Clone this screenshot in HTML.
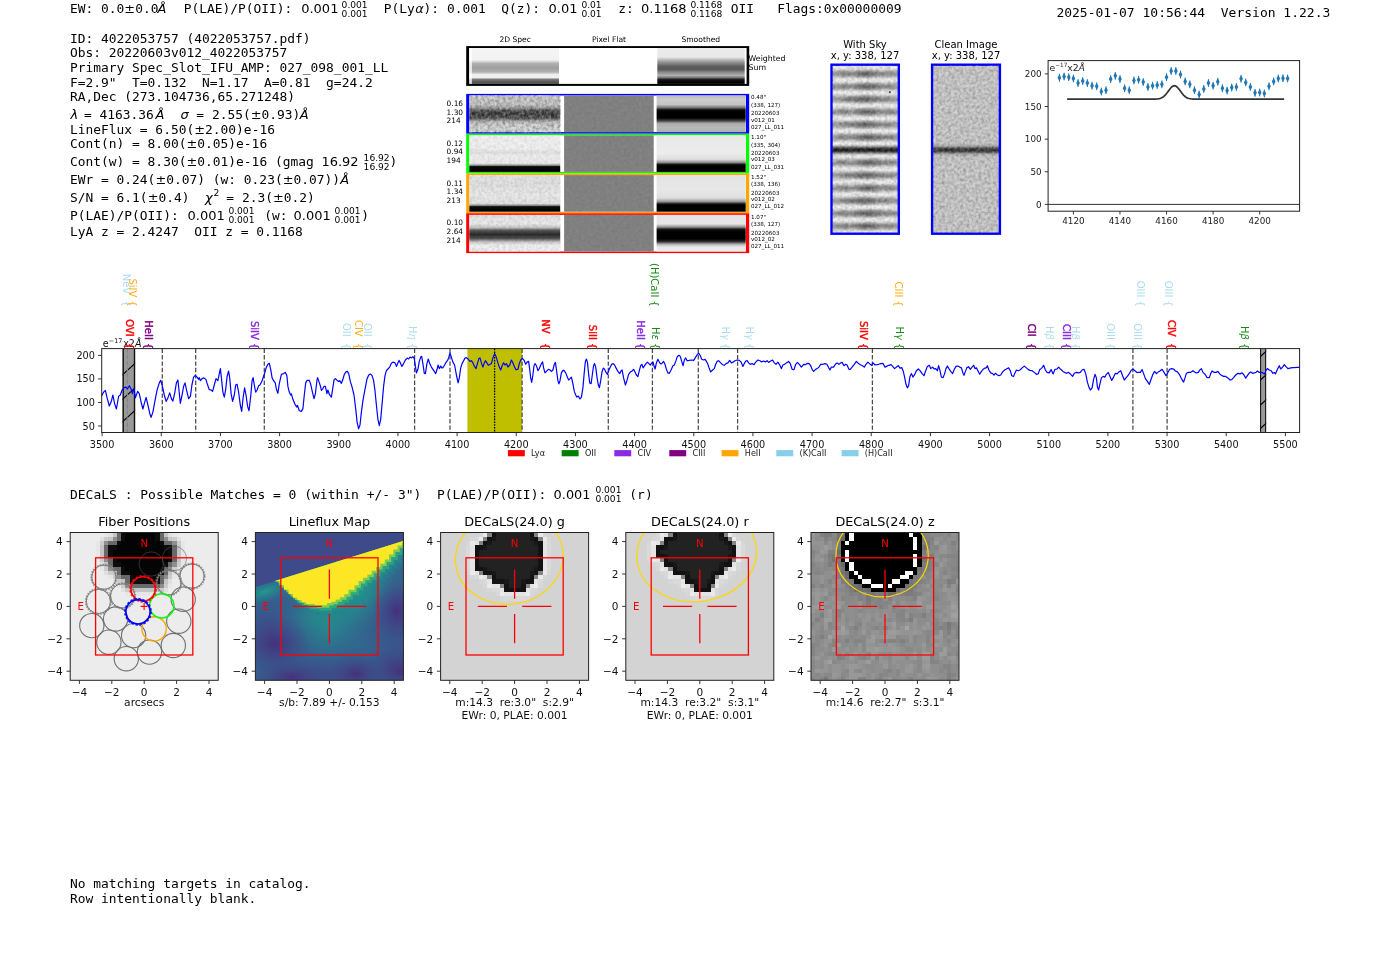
<!DOCTYPE html>
<html lang="en"><head><meta charset="utf-8"><title>ELiXer detection report 4022053757</title>
<style>
html,body{margin:0;padding:0;background:#fff;}
body{width:1400px;height:953px;overflow:hidden;}
svg{display:block;will-change:transform;}
text{white-space:pre;}
.m{font-family:"DejaVu Sans Mono","Liberation Mono",monospace;}
.s{font-family:"DejaVu Sans","Liberation Sans",sans-serif;}
</style></head><body>
<svg width="1400" height="953" viewBox="0 0 1400 953">
<rect x="0" y="0" width="1400" height="953" fill="#fff"/>
<defs><filter id="nzA" x="0" y="0" width="100%" height="100%"><feTurbulence type="fractalNoise" baseFrequency="0.33" numOctaves="2" seed="4" result="t"/><feColorMatrix in="t" type="matrix" values="0 0 0 0 0  0 0 0 0 0  0 0 0 0 0  1.6 0 0 0 -0.55"/></filter>
<filter id="nzW" x="0" y="0" width="100%" height="100%"><feTurbulence type="fractalNoise" baseFrequency="0.33" numOctaves="2" seed="9" result="t"/><feColorMatrix in="t" type="matrix" values="0 0 0 0 1  0 0 0 0 1  0 0 0 0 1  1.6 0 0 0 -0.55"/></filter>
<linearGradient id="g1" x1="0" y1="0" x2="0" y2="1"><stop offset="0.000" stop-color="#f4f4f4"/><stop offset="0.334" stop-color="#f2f2f2"/><stop offset="0.432" stop-color="#b0b0b0"/><stop offset="0.557" stop-color="#9e9e9e"/><stop offset="0.669" stop-color="#b0b0b0"/><stop offset="0.738" stop-color="#eeeeee"/><stop offset="0.822" stop-color="#f0f0f0"/><stop offset="0.877" stop-color="#787878"/><stop offset="0.947" stop-color="#585858"/><stop offset="1.000" stop-color="#464646"/></linearGradient>
<linearGradient id="g2" x1="0" y1="0" x2="0" y2="1"><stop offset="0.000" stop-color="#ececec"/><stop offset="0.251" stop-color="#e8e8e8"/><stop offset="0.390" stop-color="#969696"/><stop offset="0.515" stop-color="#5c5c5c"/><stop offset="0.599" stop-color="#585858"/><stop offset="0.682" stop-color="#8c8c8c"/><stop offset="0.766" stop-color="#b0b0b0"/><stop offset="0.822" stop-color="#787878"/><stop offset="0.877" stop-color="#1e1e1e"/><stop offset="0.919" stop-color="#080808"/><stop offset="1.000" stop-color="#000000"/></linearGradient>
<linearGradient id="g3" x1="0" y1="0" x2="0" y2="1"><stop offset="0.000" stop-color="#c8c8c8"/><stop offset="0.246" stop-color="#c4c4c4"/><stop offset="0.342" stop-color="#969696"/><stop offset="0.410" stop-color="#464646"/><stop offset="0.519" stop-color="#343434"/><stop offset="0.615" stop-color="#464646"/><stop offset="0.697" stop-color="#a5a5a5"/><stop offset="0.792" stop-color="#cdcdcd"/><stop offset="1.000" stop-color="#d6d6d6"/></linearGradient>
<linearGradient id="g4" x1="0" y1="0" x2="0" y2="1"><stop offset="0.000" stop-color="#bababa"/><stop offset="0.109" stop-color="#cccccc"/><stop offset="0.246" stop-color="#c4c4c4"/><stop offset="0.328" stop-color="#787878"/><stop offset="0.396" stop-color="#0a0a0a"/><stop offset="0.464" stop-color="#000000"/><stop offset="0.615" stop-color="#000000"/><stop offset="0.683" stop-color="#3c3c3c"/><stop offset="0.765" stop-color="#aaaaaa"/><stop offset="0.874" stop-color="#b8b8b8"/><stop offset="1.000" stop-color="#b0b0b0"/></linearGradient>
<linearGradient id="g5" x1="0" y1="0" x2="0" y2="1"><stop offset="0.000" stop-color="#f0f0f0"/><stop offset="0.355" stop-color="#f0f0f0"/><stop offset="0.464" stop-color="#e2e2e2"/><stop offset="0.574" stop-color="#eeeeee"/><stop offset="0.765" stop-color="#ececec"/><stop offset="0.820" stop-color="#969696"/><stop offset="0.855" stop-color="#0a0a0a"/><stop offset="1.000" stop-color="#000000"/></linearGradient>
<linearGradient id="g6" x1="0" y1="0" x2="0" y2="1"><stop offset="0.000" stop-color="#e8e8e8"/><stop offset="0.492" stop-color="#ececec"/><stop offset="0.656" stop-color="#dedede"/><stop offset="0.738" stop-color="#969696"/><stop offset="0.801" stop-color="#0c0c0c"/><stop offset="0.847" stop-color="#000000"/><stop offset="1.000" stop-color="#000000"/></linearGradient>
<linearGradient id="g7" x1="0" y1="0" x2="0" y2="1"><stop offset="0.000" stop-color="#e4e4e4"/><stop offset="0.273" stop-color="#e2e2e2"/><stop offset="0.546" stop-color="#eaeaea"/><stop offset="0.779" stop-color="#e4e4e4"/><stop offset="0.828" stop-color="#8c8c8c"/><stop offset="0.863" stop-color="#0c0c0c"/><stop offset="1.000" stop-color="#000000"/></linearGradient>
<linearGradient id="g8" x1="0" y1="0" x2="0" y2="1"><stop offset="0.000" stop-color="#e2e2e2"/><stop offset="0.383" stop-color="#e8e8e8"/><stop offset="0.628" stop-color="#dedede"/><stop offset="0.724" stop-color="#969696"/><stop offset="0.792" stop-color="#0c0c0c"/><stop offset="0.833" stop-color="#000000"/><stop offset="1.000" stop-color="#000000"/></linearGradient>
<linearGradient id="g9" x1="0" y1="0" x2="0" y2="1"><stop offset="0.000" stop-color="#e4e4e4"/><stop offset="0.246" stop-color="#ececec"/><stop offset="0.342" stop-color="#c8c8c8"/><stop offset="0.423" stop-color="#5a5a5a"/><stop offset="0.533" stop-color="#2c2c2c"/><stop offset="0.642" stop-color="#505050"/><stop offset="0.738" stop-color="#c8c8c8"/><stop offset="0.820" stop-color="#f0f0f0"/><stop offset="1.000" stop-color="#f0f0f0"/></linearGradient>
<linearGradient id="g10" x1="0" y1="0" x2="0" y2="1"><stop offset="0.000" stop-color="#e4e4e4"/><stop offset="0.246" stop-color="#e6e6e6"/><stop offset="0.328" stop-color="#969696"/><stop offset="0.396" stop-color="#141414"/><stop offset="0.464" stop-color="#000000"/><stop offset="0.656" stop-color="#000000"/><stop offset="0.724" stop-color="#282828"/><stop offset="0.806" stop-color="#b4b4b4"/><stop offset="0.874" stop-color="#e8e8e8"/><stop offset="1.000" stop-color="#ececec"/></linearGradient>
<linearGradient id="g11" x1="0" y1="0" x2="0" y2="1"><stop offset="0.000" stop-color="#e4e4e4"/><stop offset="0.006" stop-color="#eeeeee"/><stop offset="0.012" stop-color="#efefef"/><stop offset="0.018" stop-color="#e5e5e5"/><stop offset="0.024" stop-color="#d3d3d3"/><stop offset="0.030" stop-color="#bebebe"/><stop offset="0.036" stop-color="#aaaaaa"/><stop offset="0.042" stop-color="#9c9c9c"/><stop offset="0.048" stop-color="#989898"/><stop offset="0.054" stop-color="#9e9e9e"/><stop offset="0.060" stop-color="#aeaeae"/><stop offset="0.066" stop-color="#c2c2c2"/><stop offset="0.072" stop-color="#d7d7d7"/><stop offset="0.078" stop-color="#e8e8e8"/><stop offset="0.084" stop-color="#f0f0f0"/><stop offset="0.090" stop-color="#ededed"/><stop offset="0.096" stop-color="#e1e1e1"/><stop offset="0.102" stop-color="#cdcdcd"/><stop offset="0.108" stop-color="#b8b8b8"/><stop offset="0.114" stop-color="#a5a5a5"/><stop offset="0.120" stop-color="#9a9a9a"/><stop offset="0.126" stop-color="#999999"/><stop offset="0.132" stop-color="#a2a2a2"/><stop offset="0.138" stop-color="#b4b4b4"/><stop offset="0.144" stop-color="#c9c9c9"/><stop offset="0.150" stop-color="#dddddd"/><stop offset="0.156" stop-color="#ebebeb"/><stop offset="0.162" stop-color="#f0f0f0"/><stop offset="0.168" stop-color="#eaeaea"/><stop offset="0.174" stop-color="#dbdbdb"/><stop offset="0.180" stop-color="#c7c7c7"/><stop offset="0.186" stop-color="#b2b2b2"/><stop offset="0.192" stop-color="#a1a1a1"/><stop offset="0.198" stop-color="#989898"/><stop offset="0.204" stop-color="#9b9b9b"/><stop offset="0.210" stop-color="#a7a7a7"/><stop offset="0.216" stop-color="#bababa"/><stop offset="0.222" stop-color="#cfcfcf"/><stop offset="0.228" stop-color="#e2e2e2"/><stop offset="0.234" stop-color="#eeeeee"/><stop offset="0.240" stop-color="#efefef"/><stop offset="0.246" stop-color="#e7e7e7"/><stop offset="0.252" stop-color="#d5d5d5"/><stop offset="0.258" stop-color="#c0c0c0"/><stop offset="0.264" stop-color="#acacac"/><stop offset="0.270" stop-color="#9d9d9d"/><stop offset="0.276" stop-color="#989898"/><stop offset="0.282" stop-color="#9d9d9d"/><stop offset="0.288" stop-color="#acacac"/><stop offset="0.294" stop-color="#c0c0c0"/><stop offset="0.300" stop-color="#d5d5d5"/><stop offset="0.306" stop-color="#e7e7e7"/><stop offset="0.312" stop-color="#efefef"/><stop offset="0.318" stop-color="#eeeeee"/><stop offset="0.324" stop-color="#e2e2e2"/><stop offset="0.330" stop-color="#cfcfcf"/><stop offset="0.336" stop-color="#bababa"/><stop offset="0.342" stop-color="#a7a7a7"/><stop offset="0.348" stop-color="#9b9b9b"/><stop offset="0.354" stop-color="#989898"/><stop offset="0.360" stop-color="#a1a1a1"/><stop offset="0.366" stop-color="#b2b2b2"/><stop offset="0.372" stop-color="#c7c7c7"/><stop offset="0.378" stop-color="#dbdbdb"/><stop offset="0.384" stop-color="#eaeaea"/><stop offset="0.390" stop-color="#f0f0f0"/><stop offset="0.396" stop-color="#ebebeb"/><stop offset="0.402" stop-color="#dddddd"/><stop offset="0.408" stop-color="#c9c9c9"/><stop offset="0.414" stop-color="#b4b4b4"/><stop offset="0.420" stop-color="#a2a2a2"/><stop offset="0.426" stop-color="#999999"/><stop offset="0.432" stop-color="#9a9a9a"/><stop offset="0.438" stop-color="#a5a5a5"/><stop offset="0.444" stop-color="#b8b8b8"/><stop offset="0.450" stop-color="#cdcdcd"/><stop offset="0.456" stop-color="#e1e1e1"/><stop offset="0.462" stop-color="#ededed"/><stop offset="0.468" stop-color="#f0f0f0"/><stop offset="0.474" stop-color="#dcdcdc"/><stop offset="0.480" stop-color="#b9b9b9"/><stop offset="0.486" stop-color="#868686"/><stop offset="0.492" stop-color="#4e4e4e"/><stop offset="0.498" stop-color="#242424"/><stop offset="0.504" stop-color="#121212"/><stop offset="0.510" stop-color="#1e1e1e"/><stop offset="0.516" stop-color="#444444"/><stop offset="0.522" stop-color="#7a7a7a"/><stop offset="0.528" stop-color="#b0b0b0"/><stop offset="0.534" stop-color="#d7d7d7"/><stop offset="0.540" stop-color="#eaeaea"/><stop offset="0.546" stop-color="#eeeeee"/><stop offset="0.552" stop-color="#e4e4e4"/><stop offset="0.558" stop-color="#d1d1d1"/><stop offset="0.564" stop-color="#bcbcbc"/><stop offset="0.570" stop-color="#a8a8a8"/><stop offset="0.576" stop-color="#9b9b9b"/><stop offset="0.582" stop-color="#989898"/><stop offset="0.588" stop-color="#a0a0a0"/><stop offset="0.594" stop-color="#b0b0b0"/><stop offset="0.600" stop-color="#c5c5c5"/><stop offset="0.606" stop-color="#d9d9d9"/><stop offset="0.612" stop-color="#e9e9e9"/><stop offset="0.618" stop-color="#f0f0f0"/><stop offset="0.624" stop-color="#ececec"/><stop offset="0.630" stop-color="#dfdfdf"/><stop offset="0.636" stop-color="#cbcbcb"/><stop offset="0.642" stop-color="#b6b6b6"/><stop offset="0.648" stop-color="#a4a4a4"/><stop offset="0.654" stop-color="#999999"/><stop offset="0.660" stop-color="#999999"/><stop offset="0.666" stop-color="#a4a4a4"/><stop offset="0.672" stop-color="#b6b6b6"/><stop offset="0.678" stop-color="#cbcbcb"/><stop offset="0.684" stop-color="#dfdfdf"/><stop offset="0.690" stop-color="#ececec"/><stop offset="0.696" stop-color="#f0f0f0"/><stop offset="0.702" stop-color="#e9e9e9"/><stop offset="0.708" stop-color="#d9d9d9"/><stop offset="0.714" stop-color="#c5c5c5"/><stop offset="0.720" stop-color="#b0b0b0"/><stop offset="0.726" stop-color="#a0a0a0"/><stop offset="0.732" stop-color="#989898"/><stop offset="0.738" stop-color="#9b9b9b"/><stop offset="0.744" stop-color="#a8a8a8"/><stop offset="0.750" stop-color="#bcbcbc"/><stop offset="0.756" stop-color="#d1d1d1"/><stop offset="0.762" stop-color="#e4e4e4"/><stop offset="0.768" stop-color="#eeeeee"/><stop offset="0.774" stop-color="#efefef"/><stop offset="0.780" stop-color="#e5e5e5"/><stop offset="0.786" stop-color="#d3d3d3"/><stop offset="0.792" stop-color="#bebebe"/><stop offset="0.798" stop-color="#aaaaaa"/><stop offset="0.804" stop-color="#9c9c9c"/><stop offset="0.810" stop-color="#989898"/><stop offset="0.816" stop-color="#9e9e9e"/><stop offset="0.822" stop-color="#aeaeae"/><stop offset="0.828" stop-color="#c2c2c2"/><stop offset="0.834" stop-color="#d7d7d7"/><stop offset="0.840" stop-color="#e8e8e8"/><stop offset="0.846" stop-color="#f0f0f0"/><stop offset="0.852" stop-color="#ededed"/><stop offset="0.858" stop-color="#e1e1e1"/><stop offset="0.864" stop-color="#cdcdcd"/><stop offset="0.870" stop-color="#b8b8b8"/><stop offset="0.876" stop-color="#a5a5a5"/><stop offset="0.882" stop-color="#9a9a9a"/><stop offset="0.888" stop-color="#999999"/><stop offset="0.894" stop-color="#a2a2a2"/><stop offset="0.900" stop-color="#b4b4b4"/><stop offset="0.906" stop-color="#c9c9c9"/><stop offset="0.912" stop-color="#dddddd"/><stop offset="0.918" stop-color="#ebebeb"/><stop offset="0.924" stop-color="#f0f0f0"/><stop offset="0.930" stop-color="#eaeaea"/><stop offset="0.936" stop-color="#dbdbdb"/><stop offset="0.942" stop-color="#c7c7c7"/><stop offset="0.948" stop-color="#b2b2b2"/><stop offset="0.954" stop-color="#a1a1a1"/><stop offset="0.960" stop-color="#989898"/><stop offset="0.966" stop-color="#9b9b9b"/><stop offset="0.972" stop-color="#a7a7a7"/><stop offset="0.978" stop-color="#bababa"/><stop offset="0.984" stop-color="#cfcfcf"/><stop offset="0.990" stop-color="#e2e2e2"/><stop offset="0.996" stop-color="#eeeeee"/></linearGradient>
<radialGradient id="skyb" cx="0.5" cy="0.5" r="0.5"><stop offset="0" stop-color="#000" stop-opacity="0.42"/><stop offset="0.55" stop-color="#000" stop-opacity="0.2"/><stop offset="1" stop-color="#000" stop-opacity="0"/></radialGradient>
<linearGradient id="g12" x1="0" y1="0" x2="0" y2="1"><stop offset="0.000" stop-color="#c8c8c8"/><stop offset="0.463" stop-color="#c8c8c8"/><stop offset="0.481" stop-color="#aaaaaa"/><stop offset="0.495" stop-color="#464646"/><stop offset="0.505" stop-color="#282828"/><stop offset="0.516" stop-color="#464646"/><stop offset="0.529" stop-color="#aaaaaa"/><stop offset="0.547" stop-color="#c8c8c8"/><stop offset="1.000" stop-color="#c8c8c8"/></linearGradient>
<clipPath id="hc1"><rect x="122.6" y="348.6" width="12.5" height="83.90"/></clipPath>
<clipPath id="hc2"><rect x="1260.0" y="348.6" width="6.2" height="83.90"/></clipPath>
<clipPath id="pc0"><rect x="70.2" y="532.5" width="148.0" height="147.80"/></clipPath>
<clipPath id="pc1"><rect x="255.4" y="532.5" width="148.0" height="147.80"/></clipPath>
<clipPath id="pc2"><rect x="440.6" y="532.5" width="148.0" height="147.80"/></clipPath>
<clipPath id="pc3"><rect x="625.8" y="532.5" width="148.0" height="147.80"/></clipPath>
<clipPath id="pc4"><rect x="811.0" y="532.5" width="148.0" height="147.80"/></clipPath>
<radialGradient id="lfT" cx="0.5" cy="0.5" r="0.5"><stop offset="0" stop-color="#1f9e89" stop-opacity="0.95"/><stop offset="0.45" stop-color="#26828e" stop-opacity="0.7"/><stop offset="1" stop-color="#31688e" stop-opacity="0"/></radialGradient>
<radialGradient id="lfT2" cx="0.5" cy="0.5" r="0.5"><stop offset="0" stop-color="#21918c" stop-opacity="0.6"/><stop offset="1" stop-color="#2a788e" stop-opacity="0"/></radialGradient>
<radialGradient id="lfP" cx="0.5" cy="0.5" r="0.5"><stop offset="0" stop-color="#472a7a" stop-opacity="0.85"/><stop offset="0.5" stop-color="#433e85" stop-opacity="0.5"/><stop offset="1" stop-color="#3e4989" stop-opacity="0"/></radialGradient>
<radialGradient id="lfB" cx="0.5" cy="0.5" r="0.5"><stop offset="0" stop-color="#3e4989" stop-opacity="0.9"/><stop offset="1" stop-color="#3e4989" stop-opacity="0"/></radialGradient></defs>
<g id="header">
<text x="70.00" y="13.30" class="m" font-size="12.9">EW: 0.0</text>
<text x="124.36" y="13.30" class="s" font-size="12.9">±</text>
<text x="135.17" y="13.30" class="m" font-size="12.9">0.0</text>
<text x="157.60" y="13.30" class="s" font-size="13" font-style="italic">Å</text>
<text x="183.70" y="13.30" class="m" font-size="12.9">P(LAE)/P(OII): </text>
<text x="301.20" y="13.30" class="s" font-size="13">0.001</text>
<text x="341.60" y="8.30" class="s" font-size="9.1">0.001</text>
<text x="341.60" y="17.30" class="s" font-size="9.1">0.001</text>
<text x="383.70" y="13.30" class="m" font-size="12.9">P(Ly</text>
<text x="415.20" y="13.30" class="s" font-size="13" font-style="italic">α</text>
<text x="423.60" y="13.30" class="m" font-size="12.9">): 0.001  Q(z): </text>
<text x="548.60" y="13.30" class="s" font-size="13">0.01</text>
<text x="581.40" y="8.30" class="s" font-size="9.1">0.01</text>
<text x="581.40" y="17.30" class="s" font-size="9.1">0.01</text>
<text x="618.20" y="13.30" class="m" font-size="12.9">z: </text>
<text x="641.00" y="13.30" class="s" font-size="13">0.1168</text>
<text x="690.40" y="8.30" class="s" font-size="9.1">0.1168</text>
<text x="690.40" y="17.30" class="s" font-size="9.1">0.1168</text>
<text x="730.70" y="13.30" class="m" font-size="12.9">OII   Flags:0x00000009</text>
<text x="1056.40" y="16.60" class="m" font-size="13.0">2025-01-07 10:56:44  Version 1.22.3</text>
</g>
<g id="info">
<text x="70.00" y="42.50" class="m" font-size="12.9">ID: 4022053757 (4022053757.pdf)</text>
<text x="70.00" y="57.10" class="m" font-size="12.9">Obs: 20220603v012_4022053757</text>
<text x="70.00" y="71.80" class="m" font-size="12.9">Primary Spec_Slot_IFU_AMP: 027_098_001_LL</text>
<text x="70.00" y="86.60" class="m" font-size="12.9">F=2.9"  T=0.132  N=1.17  A=0.81  g=24.2</text>
<text x="70.00" y="101.30" class="m" font-size="12.9">RA,Dec (273.104736,65.271248)</text>
<text x="70.40" y="118.70" class="s" font-size="13" font-style="italic">λ</text>
<text x="76.20" y="118.70" class="m" font-size="12.9"> = 4163.36</text>
<text x="155.60" y="118.70" class="s" font-size="13" font-style="italic">Å</text>
<text x="180.60" y="118.70" class="s" font-size="13" font-style="italic">σ</text>
<text x="188.60" y="118.70" class="m" font-size="12.9"> = 2.55(</text>
<text x="250.73" y="118.70" class="s" font-size="12.9">±</text>
<text x="261.54" y="118.70" class="m" font-size="12.9">0.93)</text>
<text x="299.80" y="118.70" class="s" font-size="13" font-style="italic">Å</text>
<text x="70.00" y="133.70" class="m" font-size="12.9">LineFlux = 6.50(</text>
<text x="194.26" y="133.70" class="s" font-size="12.9">±</text>
<text x="205.07" y="133.70" class="m" font-size="12.9">2.00)e-16</text>
<text x="70.00" y="148.30" class="m" font-size="12.9">Cont(n) = 8.00(</text>
<text x="186.49" y="148.30" class="s" font-size="12.9">±</text>
<text x="197.30" y="148.30" class="m" font-size="12.9">0.05)e-16</text>
<text x="70.00" y="166.20" class="m" font-size="12.9">Cont(w) = 8.30(</text>
<text x="186.49" y="166.20" class="s" font-size="12.9">±</text>
<text x="197.30" y="166.20" class="m" font-size="12.9">0.01)e-16 (gmag </text>
<text x="321.40" y="166.20" class="s" font-size="13">16.92</text>
<text x="363.60" y="160.60" class="s" font-size="9.1">16.92</text>
<text x="363.60" y="169.60" class="s" font-size="9.1">16.92</text>
<text x="389.60" y="166.20" class="m" font-size="12.9">)</text>
<text x="70.00" y="184.20" class="m" font-size="12.9">EWr = 0.24(</text>
<text x="155.43" y="184.20" class="s" font-size="12.9">±</text>
<text x="166.24" y="184.20" class="m" font-size="12.9">0.07) (w: 0.23(</text>
<text x="282.73" y="184.20" class="s" font-size="12.9">±</text>
<text x="293.54" y="184.20" class="m" font-size="12.9">0.07))</text>
<text x="340.20" y="184.20" class="s" font-size="13" font-style="italic">Å</text>
<text x="70.00" y="202.00" class="m" font-size="12.9">S/N = 6.1(</text>
<text x="147.66" y="202.00" class="s" font-size="12.9">±</text>
<text x="158.47" y="202.00" class="m" font-size="12.9">0.4)  </text>
<text x="205.00" y="202.00" class="s" font-size="13" font-style="italic">χ</text>
<text x="213.60" y="196.20" class="s" font-size="9.1">2</text>
<text x="218.60" y="202.00" class="m" font-size="12.9"> = 2.3(</text>
<text x="272.96" y="202.00" class="s" font-size="12.9">±</text>
<text x="283.77" y="202.00" class="m" font-size="12.9">0.2)</text>
<text x="70.00" y="219.90" class="m" font-size="12.9">P(LAE)/P(OII): </text>
<text x="187.60" y="219.90" class="s" font-size="13">0.001</text>
<text x="228.40" y="214.00" class="s" font-size="9.1">0.001</text>
<text x="228.40" y="223.00" class="s" font-size="9.1">0.001</text>
<text x="256.40" y="219.90" class="m" font-size="12.9"> (w: </text>
<text x="293.60" y="219.90" class="s" font-size="13">0.001</text>
<text x="334.60" y="214.00" class="s" font-size="9.1">0.001</text>
<text x="334.60" y="223.00" class="s" font-size="9.1">0.001</text>
<text x="361.20" y="219.90" class="m" font-size="12.9">)</text>
<text x="70.00" y="235.80" class="m" font-size="12.9">LyA z = 2.4247  OII z = 0.1168</text>
</g>
<g id="dheading">
<text x="70.00" y="499.00" class="m" font-size="12.97">DECaLS : Possible Matches = 0 (within +/- 3")  P(LAE)/P(OII): </text>
</g>
<text x="70.00" y="888.00" class="m" font-size="12.9">No matching targets in catalog.</text>
<text x="70.00" y="903.00" class="m" font-size="12.9">Row intentionally blank.</text>
<g id="cutouts">
<text x="515.20" y="41.90" class="s" font-size="7.6" text-anchor="middle">2D Spec</text>
<text x="609.00" y="41.90" class="s" font-size="7.6" text-anchor="middle">Pixel Flat</text>
<text x="700.80" y="41.90" class="s" font-size="7.6" text-anchor="middle">Smoothed</text>
<rect x="466.2" y="46.1" width="283.00" height="39.8" fill="#000"/>
<rect x="469.3" y="48.0" width="277.30" height="35.9" fill="#fff"/>
<rect x="469.30" y="48.00" width="89.70" height="35.90" fill="url(#g1)"/>
<rect x="469.3" y="48.0" width="2.6" height="35.9" fill="#fff" opacity="0.8"/>
<rect x="657.30" y="48.00" width="87.40" height="35.90" fill="url(#g2)"/>
<text x="748.60" y="60.90" class="s" font-size="7.8">Weighted</text>
<text x="748.60" y="69.70" class="s" font-size="7.8">Sum</text>
<rect x="466.2" y="93.90" width="283.00" height="39.8" fill="#0000ff"/>
<rect x="469.3" y="95.50" width="276.60" height="36.60" fill="#fff"/>
<rect x="564.1" y="95.50" width="89.60" height="36.60" fill="#808080"/>
<rect x="564.10" y="95.50" width="89.60" height="36.60" fill="#000" filter="url(#nzA)" opacity="0.06"/>
<rect x="564.10" y="95.50" width="89.60" height="36.60" fill="#000" filter="url(#nzW)" opacity="0.06"/>
<rect x="469.30" y="95.50" width="90.90" height="36.60" fill="url(#g3)"/>
<rect x="469.30" y="95.50" width="90.90" height="36.60" fill="#000" filter="url(#nzA)" opacity="0.4"/>
<rect x="469.30" y="95.50" width="90.90" height="36.60" fill="#000" filter="url(#nzW)" opacity="0.45"/>
<rect x="656.60" y="95.50" width="89.10" height="36.60" fill="url(#g4)"/>
<text x="446.60" y="105.90" class="s" font-size="7.4">0.16</text>
<text x="446.60" y="114.65" class="s" font-size="7.4">1.30</text>
<text x="446.60" y="123.40" class="s" font-size="7.4">214</text>
<text x="751.00" y="99.40" class="s" font-size="5.6">0.48"</text>
<text x="751.00" y="106.80" class="s" font-size="5.6">(338, 127)</text>
<text x="751.00" y="115.10" class="s" font-size="5.6">20220603</text>
<text x="751.00" y="121.50" class="s" font-size="5.6">v012_01</text>
<text x="751.00" y="128.70" class="s" font-size="5.6">027_LL_011</text>
<rect x="466.2" y="133.70" width="283.00" height="39.8" fill="#00ff00"/>
<rect x="469.3" y="135.30" width="276.60" height="36.60" fill="#fff"/>
<rect x="564.1" y="135.30" width="89.60" height="36.60" fill="#808080"/>
<rect x="564.10" y="135.30" width="89.60" height="36.60" fill="#000" filter="url(#nzA)" opacity="0.06"/>
<rect x="564.10" y="135.30" width="89.60" height="36.60" fill="#000" filter="url(#nzW)" opacity="0.06"/>
<rect x="469.30" y="135.30" width="90.90" height="36.60" fill="url(#g5)"/>
<rect x="469.30" y="135.30" width="90.90" height="29.00" fill="#000" filter="url(#nzA)" opacity="0.1"/>
<rect x="656.60" y="135.30" width="89.10" height="36.60" fill="url(#g6)"/>
<text x="446.60" y="145.70" class="s" font-size="7.4">0.12</text>
<text x="446.60" y="154.45" class="s" font-size="7.4">0.94</text>
<text x="446.60" y="163.20" class="s" font-size="7.4">194</text>
<text x="751.00" y="139.20" class="s" font-size="5.6">1.10"</text>
<text x="751.00" y="146.60" class="s" font-size="5.6">(335, 304)</text>
<text x="751.00" y="154.90" class="s" font-size="5.6">20220603</text>
<text x="751.00" y="161.30" class="s" font-size="5.6">v012_03</text>
<text x="751.00" y="168.50" class="s" font-size="5.6">027_LL_031</text>
<rect x="466.2" y="173.50" width="283.00" height="39.8" fill="#ffa500"/>
<rect x="469.3" y="175.10" width="276.60" height="36.60" fill="#fff"/>
<rect x="564.1" y="175.10" width="89.60" height="36.60" fill="#808080"/>
<rect x="564.10" y="175.10" width="89.60" height="36.60" fill="#000" filter="url(#nzA)" opacity="0.06"/>
<rect x="564.10" y="175.10" width="89.60" height="36.60" fill="#000" filter="url(#nzW)" opacity="0.06"/>
<rect x="469.30" y="175.10" width="90.90" height="36.60" fill="url(#g7)"/>
<rect x="469.30" y="175.10" width="90.90" height="29.00" fill="#000" filter="url(#nzA)" opacity="0.14"/>
<rect x="656.60" y="175.10" width="89.10" height="36.60" fill="url(#g8)"/>
<text x="446.60" y="185.50" class="s" font-size="7.4">0.11</text>
<text x="446.60" y="194.25" class="s" font-size="7.4">1.34</text>
<text x="446.60" y="203.00" class="s" font-size="7.4">213</text>
<text x="751.00" y="179.00" class="s" font-size="5.6">1.52"</text>
<text x="751.00" y="186.40" class="s" font-size="5.6">(338, 136)</text>
<text x="751.00" y="194.70" class="s" font-size="5.6">20220603</text>
<text x="751.00" y="201.10" class="s" font-size="5.6">v012_02</text>
<text x="751.00" y="208.30" class="s" font-size="5.6">027_LL_012</text>
<rect x="466.2" y="213.30" width="283.00" height="39.8" fill="#ff0000"/>
<rect x="469.3" y="214.90" width="276.60" height="36.60" fill="#fff"/>
<rect x="564.1" y="214.90" width="89.60" height="36.60" fill="#808080"/>
<rect x="564.10" y="214.90" width="89.60" height="36.60" fill="#000" filter="url(#nzA)" opacity="0.06"/>
<rect x="564.10" y="214.90" width="89.60" height="36.60" fill="#000" filter="url(#nzW)" opacity="0.06"/>
<rect x="469.30" y="214.90" width="90.90" height="36.60" fill="url(#g9)"/>
<rect x="469.30" y="214.90" width="90.90" height="36.60" fill="#000" filter="url(#nzA)" opacity="0.14"/>
<rect x="656.60" y="214.90" width="89.10" height="36.60" fill="url(#g10)"/>
<text x="446.60" y="225.30" class="s" font-size="7.4">0.10</text>
<text x="446.60" y="234.05" class="s" font-size="7.4">2.64</text>
<text x="446.60" y="242.80" class="s" font-size="7.4">214</text>
<text x="751.00" y="218.80" class="s" font-size="5.6">1.07"</text>
<text x="751.00" y="226.20" class="s" font-size="5.6">(338, 127)</text>
<text x="751.00" y="234.50" class="s" font-size="5.6">20220603</text>
<text x="751.00" y="240.90" class="s" font-size="5.6">v012_02</text>
<text x="751.00" y="248.10" class="s" font-size="5.6">027_LL_011</text>
</g>
<g id="sky">
<text x="865.00" y="47.90" class="s" font-size="10.0" text-anchor="middle">With Sky</text>
<text x="865.00" y="58.80" class="s" font-size="10.0" text-anchor="middle">x, y: 338, 127</text>
<text x="966.00" y="47.90" class="s" font-size="10.0" text-anchor="middle">Clean Image</text>
<text x="966.00" y="58.80" class="s" font-size="10.0" text-anchor="middle">x, y: 338, 127</text>
<rect x="830.3" y="63.5" width="69.70" height="171.40" fill="#0000ff"/>
<rect x="832.70" y="65.90" width="64.90" height="166.60" fill="url(#g11)"/>
<ellipse cx="866.5" cy="73.8" rx="17" ry="5.2" fill="url(#skyb)"/>
<ellipse cx="845.0" cy="73.8" rx="9" ry="4.2" fill="url(#skyb)" opacity="0.45"/>
<ellipse cx="888.0" cy="73.8" rx="8" ry="4.2" fill="url(#skyb)" opacity="0.35"/>
<ellipse cx="867.5" cy="86.5" rx="19" ry="5.2" fill="url(#skyb)"/>
<ellipse cx="844.0" cy="86.5" rx="9" ry="4.2" fill="url(#skyb)" opacity="0.45"/>
<ellipse cx="889.0" cy="86.5" rx="8" ry="4.2" fill="url(#skyb)" opacity="0.35"/>
<ellipse cx="864.5" cy="99.2" rx="21" ry="5.2" fill="url(#skyb)"/>
<ellipse cx="847.0" cy="99.2" rx="9" ry="4.2" fill="url(#skyb)" opacity="0.45"/>
<ellipse cx="886.0" cy="99.2" rx="8" ry="4.2" fill="url(#skyb)" opacity="0.35"/>
<ellipse cx="867.5" cy="111.9" rx="17" ry="5.2" fill="url(#skyb)"/>
<ellipse cx="844.0" cy="111.9" rx="9" ry="4.2" fill="url(#skyb)" opacity="0.45"/>
<ellipse cx="889.0" cy="111.9" rx="8" ry="4.2" fill="url(#skyb)" opacity="0.35"/>
<ellipse cx="865.5" cy="124.6" rx="19" ry="5.2" fill="url(#skyb)"/>
<ellipse cx="846.0" cy="124.6" rx="9" ry="4.2" fill="url(#skyb)" opacity="0.45"/>
<ellipse cx="887.0" cy="124.6" rx="8" ry="4.2" fill="url(#skyb)" opacity="0.35"/>
<ellipse cx="868.5" cy="137.3" rx="21" ry="5.2" fill="url(#skyb)"/>
<ellipse cx="843.0" cy="137.3" rx="9" ry="4.2" fill="url(#skyb)" opacity="0.45"/>
<ellipse cx="890.0" cy="137.3" rx="8" ry="4.2" fill="url(#skyb)" opacity="0.35"/>
<ellipse cx="868.5" cy="162.7" rx="19" ry="5.2" fill="url(#skyb)"/>
<ellipse cx="843.0" cy="162.7" rx="9" ry="4.2" fill="url(#skyb)" opacity="0.45"/>
<ellipse cx="890.0" cy="162.7" rx="8" ry="4.2" fill="url(#skyb)" opacity="0.35"/>
<ellipse cx="865.5" cy="175.4" rx="21" ry="5.2" fill="url(#skyb)"/>
<ellipse cx="846.0" cy="175.4" rx="9" ry="4.2" fill="url(#skyb)" opacity="0.45"/>
<ellipse cx="887.0" cy="175.4" rx="8" ry="4.2" fill="url(#skyb)" opacity="0.35"/>
<ellipse cx="867.5" cy="188.1" rx="17" ry="5.2" fill="url(#skyb)"/>
<ellipse cx="844.0" cy="188.1" rx="9" ry="4.2" fill="url(#skyb)" opacity="0.45"/>
<ellipse cx="889.0" cy="188.1" rx="8" ry="4.2" fill="url(#skyb)" opacity="0.35"/>
<ellipse cx="864.5" cy="200.8" rx="19" ry="5.2" fill="url(#skyb)"/>
<ellipse cx="847.0" cy="200.8" rx="9" ry="4.2" fill="url(#skyb)" opacity="0.45"/>
<ellipse cx="886.0" cy="200.8" rx="8" ry="4.2" fill="url(#skyb)" opacity="0.35"/>
<ellipse cx="867.5" cy="213.5" rx="21" ry="5.2" fill="url(#skyb)"/>
<ellipse cx="844.0" cy="213.5" rx="9" ry="4.2" fill="url(#skyb)" opacity="0.45"/>
<ellipse cx="889.0" cy="213.5" rx="8" ry="4.2" fill="url(#skyb)" opacity="0.35"/>
<ellipse cx="866.5" cy="226.2" rx="17" ry="5.2" fill="url(#skyb)"/>
<ellipse cx="845.0" cy="226.2" rx="9" ry="4.2" fill="url(#skyb)" opacity="0.45"/>
<ellipse cx="888.0" cy="226.2" rx="8" ry="4.2" fill="url(#skyb)" opacity="0.35"/>
<rect x="832.70" y="65.90" width="64.90" height="166.60" fill="#000" filter="url(#nzA)" opacity="0.22"/>
<rect x="832.70" y="65.90" width="64.90" height="166.60" fill="#000" filter="url(#nzW)" opacity="0.22"/>
<rect x="889.2" y="91.2" width="1.4" height="2.0" fill="#222"/>
<rect x="930.9" y="63.5" width="70.20" height="171.40" fill="#0000ff"/>
<rect x="933.30" y="65.90" width="65.40" height="166.60" fill="url(#g12)"/>
<rect x="933.30" y="65.90" width="65.40" height="166.60" fill="#000" filter="url(#nzA)" opacity="0.3"/>
<rect x="933.30" y="65.90" width="65.40" height="166.60" fill="#000" filter="url(#nzW)" opacity="0.3"/>
</g>
<g id="fitplot">
<rect x="1048.1" y="60.6" width="251.50" height="150.60" fill="#fff"/>
<line x1="1048.1" y1="204.40" x2="1299.6" y2="204.40" stroke="#333" stroke-width="1"/>
<polyline fill="none" stroke="#333" stroke-width="1.7" stroke-linejoin="round" points="1067.11,99.15 1068.04,99.15 1068.98,99.15 1069.91,99.15 1070.84,99.15 1071.77,99.15 1072.70,99.15 1073.63,99.15 1074.56,99.15 1075.50,99.15 1076.43,99.15 1077.36,99.15 1078.29,99.15 1079.22,99.15 1080.15,99.15 1081.08,99.15 1082.02,99.15 1082.95,99.15 1083.88,99.15 1084.81,99.15 1085.74,99.15 1086.67,99.15 1087.60,99.15 1088.54,99.15 1089.47,99.15 1090.40,99.15 1091.33,99.15 1092.26,99.15 1093.19,99.15 1094.12,99.15 1095.06,99.15 1095.99,99.15 1096.92,99.15 1097.85,99.15 1098.78,99.15 1099.71,99.15 1100.64,99.15 1101.57,99.15 1102.51,99.15 1103.44,99.15 1104.37,99.15 1105.30,99.15 1106.23,99.15 1107.16,99.15 1108.09,99.15 1109.03,99.15 1109.96,99.15 1110.89,99.15 1111.82,99.15 1112.75,99.15 1113.68,99.15 1114.61,99.15 1115.55,99.15 1116.48,99.15 1117.41,99.15 1118.34,99.15 1119.27,99.15 1120.20,99.15 1121.13,99.15 1122.07,99.15 1123.00,99.15 1123.93,99.15 1124.86,99.15 1125.79,99.15 1126.72,99.15 1127.65,99.15 1128.59,99.15 1129.52,99.15 1130.45,99.15 1131.38,99.15 1132.31,99.15 1133.24,99.15 1134.17,99.15 1135.11,99.15 1136.04,99.15 1136.97,99.15 1137.90,99.15 1138.83,99.15 1139.76,99.15 1140.69,99.15 1141.63,99.15 1142.56,99.15 1143.49,99.15 1144.42,99.15 1145.35,99.15 1146.28,99.15 1147.21,99.15 1148.14,99.15 1149.08,99.15 1150.01,99.15 1150.94,99.15 1151.87,99.14 1152.80,99.13 1153.73,99.12 1154.66,99.10 1155.60,99.06 1156.53,99.00 1157.46,98.92 1158.39,98.79 1159.32,98.61 1160.25,98.35 1161.18,98.01 1162.12,97.55 1163.05,96.97 1163.98,96.24 1164.91,95.37 1165.84,94.35 1166.77,93.22 1167.70,91.99 1168.64,90.71 1169.57,89.45 1170.50,88.28 1171.43,87.25 1172.36,86.45 1173.29,85.93 1174.22,85.71 1175.16,85.83 1176.09,86.26 1177.02,86.99 1177.95,87.95 1178.88,89.09 1179.81,90.33 1180.74,91.61 1181.68,92.85 1182.61,94.02 1183.54,95.08 1184.47,95.99 1185.40,96.76 1186.33,97.39 1187.26,97.88 1188.20,98.26 1189.13,98.54 1190.06,98.74 1190.99,98.89 1191.92,98.98 1192.85,99.05 1193.78,99.09 1194.71,99.11 1195.65,99.13 1196.58,99.14 1197.51,99.15 1198.44,99.15 1199.37,99.15 1200.30,99.15 1201.23,99.15 1202.17,99.15 1203.10,99.15 1204.03,99.15 1204.96,99.15 1205.89,99.15 1206.82,99.15 1207.75,99.15 1208.69,99.15 1209.62,99.15 1210.55,99.15 1211.48,99.15 1212.41,99.15 1213.34,99.15 1214.27,99.15 1215.21,99.15 1216.14,99.15 1217.07,99.15 1218.00,99.15 1218.93,99.15 1219.86,99.15 1220.79,99.15 1221.73,99.15 1222.66,99.15 1223.59,99.15 1224.52,99.15 1225.45,99.15 1226.38,99.15 1227.31,99.15 1228.25,99.15 1229.18,99.15 1230.11,99.15 1231.04,99.15 1231.97,99.15 1232.90,99.15 1233.83,99.15 1234.77,99.15 1235.70,99.15 1236.63,99.15 1237.56,99.15 1238.49,99.15 1239.42,99.15 1240.35,99.15 1241.28,99.15 1242.22,99.15 1243.15,99.15 1244.08,99.15 1245.01,99.15 1245.94,99.15 1246.87,99.15 1247.80,99.15 1248.74,99.15 1249.67,99.15 1250.60,99.15 1251.53,99.15 1252.46,99.15 1253.39,99.15 1254.32,99.15 1255.26,99.15 1256.19,99.15 1257.12,99.15 1258.05,99.15 1258.98,99.15 1259.91,99.15 1260.84,99.15 1261.78,99.15 1262.71,99.15 1263.64,99.15 1264.57,99.15 1265.50,99.15 1266.43,99.15 1267.36,99.15 1268.30,99.15 1269.23,99.15 1270.16,99.15 1271.09,99.15 1272.02,99.15 1272.95,99.15 1273.88,99.15 1274.82,99.15 1275.75,99.15 1276.68,99.15 1277.61,99.15 1278.54,99.15 1279.47,99.15 1280.40,99.15 1281.34,99.15 1282.27,99.15 1283.20,99.15 1284.13,99.15"/>
<g fill="#1f77b4" stroke="#1f77b4" stroke-width="1">
<path d="M1059.43 73.92V81.72" fill="none"/><path d="M1059.43 74.32L1061.28 77.82L1059.43 81.32L1057.58 77.82Z" stroke="none"/>
<path d="M1064.09 72.61V80.41" fill="none"/><path d="M1064.09 73.01L1065.94 76.51L1064.09 80.01L1062.24 76.51Z" stroke="none"/>
<path d="M1068.74 73.26V81.06" fill="none"/><path d="M1068.74 73.66L1070.59 77.16L1068.74 80.66L1066.89 77.16Z" stroke="none"/>
<path d="M1073.40 74.57V82.37" fill="none"/><path d="M1073.40 74.97L1075.25 78.47L1073.40 81.97L1071.55 78.47Z" stroke="none"/>
<path d="M1078.06 79.14V86.94" fill="none"/><path d="M1078.06 79.54L1079.91 83.04L1078.06 86.54L1076.21 83.04Z" stroke="none"/>
<path d="M1082.71 77.18V84.98" fill="none"/><path d="M1082.71 77.58L1084.56 81.08L1082.71 84.58L1080.86 81.08Z" stroke="none"/>
<path d="M1087.37 79.14V86.94" fill="none"/><path d="M1087.37 79.54L1089.22 83.04L1087.37 86.54L1085.52 83.04Z" stroke="none"/>
<path d="M1092.03 81.75V89.55" fill="none"/><path d="M1092.03 82.15L1093.88 85.65L1092.03 89.15L1090.18 85.65Z" stroke="none"/>
<path d="M1096.69 82.40V90.20" fill="none"/><path d="M1096.69 82.80L1098.54 86.30L1096.69 89.80L1094.84 86.30Z" stroke="none"/>
<path d="M1101.34 87.62V95.42" fill="none"/><path d="M1101.34 88.02L1103.19 91.52L1101.34 95.02L1099.49 91.52Z" stroke="none"/>
<path d="M1106.00 86.31V94.11" fill="none"/><path d="M1106.00 86.71L1107.85 90.21L1106.00 93.71L1104.15 90.21Z" stroke="none"/>
<path d="M1110.66 75.22V83.02" fill="none"/><path d="M1110.66 75.62L1112.51 79.12L1110.66 82.62L1108.81 79.12Z" stroke="none"/>
<path d="M1115.31 71.96V79.76" fill="none"/><path d="M1115.31 72.36L1117.16 75.86L1115.31 79.36L1113.46 75.86Z" stroke="none"/>
<path d="M1119.97 75.22V83.02" fill="none"/><path d="M1119.97 75.62L1121.82 79.12L1119.97 82.62L1118.12 79.12Z" stroke="none"/>
<path d="M1124.63 84.36V92.16" fill="none"/><path d="M1124.63 84.76L1126.48 88.26L1124.63 91.76L1122.78 88.26Z" stroke="none"/>
<path d="M1129.28 86.31V94.11" fill="none"/><path d="M1129.28 86.71L1131.13 90.21L1129.28 93.71L1127.43 90.21Z" stroke="none"/>
<path d="M1133.94 76.53V84.33" fill="none"/><path d="M1133.94 76.93L1135.79 80.43L1133.94 83.93L1132.09 80.43Z" stroke="none"/>
<path d="M1138.60 75.87V83.67" fill="none"/><path d="M1138.60 76.27L1140.45 79.77L1138.60 83.27L1136.75 79.77Z" stroke="none"/>
<path d="M1143.26 78.16V85.96" fill="none"/><path d="M1143.26 78.56L1145.11 82.06L1143.26 85.56L1141.41 82.06Z" stroke="none"/>
<path d="M1147.91 83.05V90.85" fill="none"/><path d="M1147.91 83.45L1149.76 86.95L1147.91 90.45L1146.06 86.95Z" stroke="none"/>
<path d="M1152.57 81.75V89.55" fill="none"/><path d="M1152.57 82.15L1154.42 85.65L1152.57 89.15L1150.72 85.65Z" stroke="none"/>
<path d="M1157.23 81.09V88.89" fill="none"/><path d="M1157.23 81.49L1159.08 84.99L1157.23 88.49L1155.38 84.99Z" stroke="none"/>
<path d="M1161.88 80.44V88.24" fill="none"/><path d="M1161.88 80.84L1163.73 84.34L1161.88 87.84L1160.03 84.34Z" stroke="none"/>
<path d="M1166.54 73.26V81.06" fill="none"/><path d="M1166.54 73.66L1168.39 77.16L1166.54 80.66L1164.69 77.16Z" stroke="none"/>
<path d="M1171.20 67.06V74.86" fill="none"/><path d="M1171.20 67.46L1173.05 70.96L1171.20 74.46L1169.35 70.96Z" stroke="none"/>
<path d="M1175.85 67.06V74.86" fill="none"/><path d="M1175.85 67.46L1177.70 70.96L1175.85 74.46L1174.00 70.96Z" stroke="none"/>
<path d="M1180.51 70.65V78.45" fill="none"/><path d="M1180.51 71.05L1182.36 74.55L1180.51 78.05L1178.66 74.55Z" stroke="none"/>
<path d="M1185.17 77.50V85.30" fill="none"/><path d="M1185.17 77.90L1187.02 81.40L1185.17 84.90L1183.32 81.40Z" stroke="none"/>
<path d="M1189.83 80.44V88.24" fill="none"/><path d="M1189.83 80.84L1191.67 84.34L1189.83 87.84L1187.98 84.34Z" stroke="none"/>
<path d="M1194.48 86.31V94.11" fill="none"/><path d="M1194.48 86.71L1196.33 90.21L1194.48 93.71L1192.63 90.21Z" stroke="none"/>
<path d="M1199.14 90.55V98.35" fill="none"/><path d="M1199.14 90.95L1200.99 94.45L1199.14 97.95L1197.29 94.45Z" stroke="none"/>
<path d="M1203.80 85.01V92.81" fill="none"/><path d="M1203.80 85.41L1205.65 88.91L1203.80 92.41L1201.95 88.91Z" stroke="none"/>
<path d="M1208.45 79.14V86.94" fill="none"/><path d="M1208.45 79.54L1210.30 83.04L1208.45 86.54L1206.60 83.04Z" stroke="none"/>
<path d="M1213.11 81.75V89.55" fill="none"/><path d="M1213.11 82.15L1214.96 85.65L1213.11 89.15L1211.26 85.65Z" stroke="none"/>
<path d="M1217.77 77.83V85.63" fill="none"/><path d="M1217.77 78.23L1219.62 81.73L1217.77 85.23L1215.92 81.73Z" stroke="none"/>
<path d="M1222.42 84.36V92.16" fill="none"/><path d="M1222.42 84.76L1224.27 88.26L1222.42 91.76L1220.57 88.26Z" stroke="none"/>
<path d="M1227.08 86.64V94.44" fill="none"/><path d="M1227.08 87.04L1228.93 90.54L1227.08 94.04L1225.23 90.54Z" stroke="none"/>
<path d="M1231.74 83.70V91.50" fill="none"/><path d="M1231.74 84.10L1233.59 87.60L1231.74 91.10L1229.89 87.60Z" stroke="none"/>
<path d="M1236.39 83.05V90.85" fill="none"/><path d="M1236.39 83.45L1238.24 86.95L1236.39 90.45L1234.55 86.95Z" stroke="none"/>
<path d="M1241.05 74.89V82.69" fill="none"/><path d="M1241.05 75.29L1242.90 78.79L1241.05 82.29L1239.20 78.79Z" stroke="none"/>
<path d="M1245.71 78.48V86.28" fill="none"/><path d="M1245.71 78.88L1247.56 82.38L1245.71 85.88L1243.86 82.38Z" stroke="none"/>
<path d="M1250.37 83.05V90.85" fill="none"/><path d="M1250.37 83.45L1252.22 86.95L1250.37 90.45L1248.52 86.95Z" stroke="none"/>
<path d="M1255.02 88.92V96.72" fill="none"/><path d="M1255.02 89.32L1256.87 92.82L1255.02 96.32L1253.17 92.82Z" stroke="none"/>
<path d="M1259.68 88.60V96.40" fill="none"/><path d="M1259.68 89.00L1261.53 92.50L1259.68 96.00L1257.83 92.50Z" stroke="none"/>
<path d="M1264.34 89.58V97.38" fill="none"/><path d="M1264.34 89.98L1266.19 93.48L1264.34 96.98L1262.49 93.48Z" stroke="none"/>
<path d="M1268.99 82.40V90.20" fill="none"/><path d="M1268.99 82.80L1270.84 86.30L1268.99 89.80L1267.14 86.30Z" stroke="none"/>
<path d="M1273.65 77.50V85.30" fill="none"/><path d="M1273.65 77.90L1275.50 81.40L1273.65 84.90L1271.80 81.40Z" stroke="none"/>
<path d="M1278.31 74.57V82.37" fill="none"/><path d="M1278.31 74.97L1280.16 78.47L1278.31 81.97L1276.46 78.47Z" stroke="none"/>
<path d="M1282.97 74.24V82.04" fill="none"/><path d="M1282.97 74.64L1284.82 78.14L1282.97 81.64L1281.12 78.14Z" stroke="none"/>
<path d="M1287.62 74.57V82.37" fill="none"/><path d="M1287.62 74.97L1289.47 78.47L1287.62 81.97L1285.77 78.47Z" stroke="none"/>
</g>
<rect x="1048.1" y="60.6" width="251.50" height="150.60" fill="none" stroke="#222" stroke-width="1"/>
<line x1="1073.40" y1="211.2" x2="1073.40" y2="214.50" stroke="#222" stroke-width="0.9"/>
<text x="1073.40" y="224.20" class="s" font-size="8.8" text-anchor="middle" fill="#222">4120</text>
<line x1="1119.97" y1="211.2" x2="1119.97" y2="214.50" stroke="#222" stroke-width="0.9"/>
<text x="1119.97" y="224.20" class="s" font-size="8.8" text-anchor="middle" fill="#222">4140</text>
<line x1="1166.54" y1="211.2" x2="1166.54" y2="214.50" stroke="#222" stroke-width="0.9"/>
<text x="1166.54" y="224.20" class="s" font-size="8.8" text-anchor="middle" fill="#222">4160</text>
<line x1="1213.11" y1="211.2" x2="1213.11" y2="214.50" stroke="#222" stroke-width="0.9"/>
<text x="1213.11" y="224.20" class="s" font-size="8.8" text-anchor="middle" fill="#222">4180</text>
<line x1="1259.68" y1="211.2" x2="1259.68" y2="214.50" stroke="#222" stroke-width="0.9"/>
<text x="1259.68" y="224.20" class="s" font-size="8.8" text-anchor="middle" fill="#222">4200</text>
<line x1="1044.80" y1="204.40" x2="1048.1" y2="204.40" stroke="#222" stroke-width="0.9"/>
<text x="1041.60" y="207.70" class="s" font-size="8.8" text-anchor="end" fill="#222">0</text>
<line x1="1044.80" y1="171.78" x2="1048.1" y2="171.78" stroke="#222" stroke-width="0.9"/>
<text x="1041.60" y="175.08" class="s" font-size="8.8" text-anchor="end" fill="#222">50</text>
<line x1="1044.80" y1="139.15" x2="1048.1" y2="139.15" stroke="#222" stroke-width="0.9"/>
<text x="1041.60" y="142.45" class="s" font-size="8.8" text-anchor="end" fill="#222">100</text>
<line x1="1044.80" y1="106.53" x2="1048.1" y2="106.53" stroke="#222" stroke-width="0.9"/>
<text x="1041.60" y="109.83" class="s" font-size="8.8" text-anchor="end" fill="#222">150</text>
<line x1="1044.80" y1="73.90" x2="1048.1" y2="73.90" stroke="#222" stroke-width="0.9"/>
<text x="1041.60" y="77.20" class="s" font-size="8.8" text-anchor="end" fill="#222">200</text>
<text x="1049.50" y="71.20" class="s" font-size="9.3" fill="#222">e</text>
<text x="1055.30" y="67.30" class="s" font-size="5.7" fill="#222">−17</text>
<text x="1067.30" y="71.20" class="s" font-size="9.3" fill="#222">x2</text>
<text x="1078.40" y="71.20" class="s" font-size="9.3" fill="#222" font-style="italic">Å</text>
</g>
<g id="spectrum">
<rect x="101.7" y="348.6" width="1197.90" height="83.90" fill="#fff"/>
<rect x="467.4" y="348.6" width="54.70" height="83.90" fill="#bfbf00"/>
<rect x="122.6" y="348.6" width="12.50" height="83.90" fill="#999"/>
<g clip-path="url(#hc1)" stroke="#000" stroke-width="1.2">
<line x1="120.60" y1="376.51" x2="137.10" y2="361.49"/>
<line x1="120.60" y1="401.01" x2="137.10" y2="385.99"/>
<line x1="120.60" y1="423.51" x2="137.10" y2="408.49"/>
</g>
<line x1="123.20" y1="348.6" x2="123.20" y2="432.5" stroke="#111" stroke-width="1.4"/>
<line x1="134.50" y1="348.6" x2="134.50" y2="432.5" stroke="#111" stroke-width="1.4"/>
<rect x="1260.0" y="348.6" width="6.20" height="83.90" fill="#999"/>
<g clip-path="url(#hc2)" stroke="#000" stroke-width="1.2">
<line x1="1258.00" y1="358.64" x2="1268.20" y2="349.36"/>
<line x1="1258.00" y1="382.14" x2="1268.20" y2="372.86"/>
<line x1="1258.00" y1="407.14" x2="1268.20" y2="397.86"/>
<line x1="1258.00" y1="430.64" x2="1268.20" y2="421.36"/>
</g>
<line x1="1260.60" y1="348.6" x2="1260.60" y2="432.5" stroke="#111" stroke-width="1.0"/>
<line x1="1265.60" y1="348.6" x2="1265.60" y2="432.5" stroke="#111" stroke-width="1.0"/>
<line x1="127.4" y1="348.6" x2="127.4" y2="432.5" stroke="#858585" stroke-width="1.1" stroke-dasharray="4.2 2"/>
<g stroke="#4a4a4a" stroke-width="1.25" stroke-dasharray="4.4 2.0">
<line x1="162.3" y1="348.6" x2="162.3" y2="432.5"/>
<line x1="195.7" y1="348.6" x2="195.7" y2="432.5"/>
<line x1="264.3" y1="348.6" x2="264.3" y2="432.5"/>
<line x1="414.6" y1="348.6" x2="414.6" y2="432.5"/>
<line x1="450.0" y1="348.6" x2="450.0" y2="432.5"/>
<line x1="522.1" y1="348.6" x2="522.1" y2="432.5"/>
<line x1="608.3" y1="348.6" x2="608.3" y2="432.5"/>
<line x1="652.4" y1="348.6" x2="652.4" y2="432.5"/>
<line x1="698.3" y1="348.6" x2="698.3" y2="432.5"/>
<line x1="737.6" y1="348.6" x2="737.6" y2="432.5"/>
<line x1="872.4" y1="348.6" x2="872.4" y2="432.5"/>
<line x1="1132.9" y1="348.6" x2="1132.9" y2="432.5"/>
<line x1="1167.1" y1="348.6" x2="1167.1" y2="432.5"/>
</g>
<line x1="494.6" y1="348.6" x2="494.6" y2="432.5" stroke="#000" stroke-width="1.3" stroke-dasharray="1.6 1.2"/>
<polyline fill="none" stroke="#0000ff" stroke-width="1.2" stroke-linejoin="round" points="101.7,395.7 103.6,392.1 105.4,390.4 107.1,397.9 109.3,406.0 111.1,402.1 112.9,395.0 114.6,403.6 116.4,409.0 118.6,396.4 120.3,395.0 122.1,390.0 124.3,387.6 126.0,387.1 127.4,389.0 129.3,385.7 131.1,389.0 132.4,393.6 134.0,388.6 135.4,397.9 137.6,391.4 139.3,393.6 141.1,402.1 142.9,409.0 144.3,403.6 146.1,397.4 147.9,405.0 150.0,414.3 151.1,417.4 152.9,412.1 155.0,400.7 157.1,390.0 159.3,382.9 160.7,380.4 162.1,385.0 164.3,395.0 166.1,401.4 167.9,397.9 169.7,392.9 171.4,398.6 172.9,401.1 174.6,393.6 176.4,382.9 177.9,380.0 178.9,389.3 180.3,403.3 182.1,395.0 183.6,386.4 185.0,382.9 186.4,389.3 188.6,398.6 190.4,396.4 191.9,385.0 193.6,377.1 195.3,375.3 197.1,377.1 198.6,379.3 199.3,377.6 200.4,380.7 202.1,378.6 204.0,377.9 206.0,379.6 207.4,384.3 209.3,389.7 211.1,390.0 212.6,391.4 214.3,385.0 216.0,378.6 217.9,380.7 219.3,373.6 220.4,368.6 221.4,377.9 222.9,392.1 224.3,397.1 225.7,389.3 227.1,376.4 228.6,371.0 229.7,377.9 231.1,393.6 232.6,401.4 234.3,395.0 235.7,385.0 237.1,384.3 238.6,392.1 240.3,405.0 241.7,411.4 243.1,397.9 244.6,387.9 246.0,395.0 247.6,406.4 249.0,410.7 250.7,396.4 252.1,380.7 253.1,377.6 254.3,385.0 255.7,392.1 257.1,390.0 258.6,385.7 260.0,385.0 262.1,380.7 264.3,374.3 266.4,367.1 267.9,364.3 269.3,363.3 270.7,369.3 272.1,377.9 273.6,380.7 275.3,382.9 276.4,389.3 277.9,393.3 279.3,383.6 281.4,374.3 283.6,373.6 285.4,372.4 286.9,375.7 287.9,386.4 289.3,392.1 290.7,395.0 291.4,393.9 292.9,399.3 295.0,404.3 296.9,407.1 297.4,405.3 299.3,410.7 301.4,411.4 302.9,408.6 304.3,395.0 305.7,382.9 307.1,380.4 309.3,380.4 310.7,384.3 312.6,392.9 314.0,398.6 315.4,393.6 316.9,380.7 317.6,377.6 318.9,381.4 320.3,385.7 321.4,390.4 322.9,388.6 324.0,386.4 325.4,386.4 326.9,393.6 327.9,390.0 329.3,394.3 331.4,397.1 332.6,389.3 334.0,380.0 335.4,378.6 337.1,380.4 338.6,381.4 339.7,380.7 341.4,383.3 342.9,379.3 344.3,374.3 346.0,371.9 347.4,371.4 348.9,374.3 350.3,381.4 352.1,387.1 354.0,395.0 355.7,408.6 357.1,422.1 358.6,428.9 360.0,425.0 361.4,412.1 363.1,399.3 365.0,389.3 366.9,379.3 368.6,375.3 370.3,373.9 372.1,375.7 373.6,380.7 375.0,390.7 376.4,405.0 377.9,419.3 379.3,425.7 380.7,419.3 382.1,403.6 383.6,386.4 385.0,375.7 386.4,370.7 387.9,369.0 389.7,367.1 391.4,363.3 393.1,362.1 395.0,362.9 396.4,366.4 397.9,362.9 399.0,360.4 400.4,362.9 401.9,366.4 403.6,363.6 405.4,360.0 407.1,358.1 408.6,359.0 410.0,357.1 411.4,357.9 412.9,356.7 414.3,358.6 415.4,366.4 416.4,372.9 417.9,369.3 419.3,361.4 420.7,357.1 421.7,356.4 422.9,363.6 424.3,373.3 425.4,373.6 426.9,363.6 428.3,359.0 429.7,363.6 431.4,367.1 432.9,369.3 434.3,371.4 435.7,373.6 437.1,369.3 438.1,365.0 439.3,368.6 440.7,366.1 442.1,368.1 443.6,366.7 445.0,364.3 446.4,361.9 447.4,360.7 448.6,357.9 450.0,352.9 451.1,356.4 452.9,362.1 454.6,365.0 456.4,375.0 458.1,382.9 459.3,377.9 460.7,367.9 462.1,363.6 463.6,360.7 465.0,358.1 466.4,357.6 468.3,359.3 470.0,361.4 471.4,360.7 472.9,362.9 474.6,366.4 476.0,368.6 477.4,363.6 478.9,358.6 480.0,357.9 481.4,362.9 482.9,367.1 484.3,362.9 485.4,360.7 486.9,362.9 488.3,365.3 490.0,364.3 491.4,363.6 492.9,357.9 494.6,353.6 496.0,356.4 497.9,362.9 499.3,367.1 500.7,370.0 502.1,365.7 503.6,362.9 505.0,365.0 506.4,363.6 507.9,367.1 509.7,365.0 511.4,360.0 512.9,362.9 514.6,367.1 516.0,369.6 517.9,369.3 519.3,363.6 521.1,359.3 522.6,358.6 524.3,360.7 525.7,364.3 527.1,362.1 528.6,361.4 529.7,369.3 530.7,377.9 531.7,382.4 532.9,375.0 534.0,365.7 535.1,363.6 536.4,365.7 537.9,370.7 539.3,368.6 541.1,364.3 542.6,361.9 543.6,367.9 545.0,372.9 546.4,371.4 548.3,369.3 550.0,370.0 551.4,371.4 552.9,370.0 554.3,364.3 555.4,362.4 556.4,369.3 557.9,380.7 558.9,383.9 560.0,380.7 561.4,372.9 562.9,370.4 564.3,370.7 565.7,372.9 567.1,376.4 568.6,380.0 570.0,378.6 571.4,377.1 572.9,383.6 574.3,391.4 575.7,395.0 576.9,397.1 578.3,396.1 580.0,399.0 581.4,397.1 582.9,387.9 584.3,372.1 585.4,361.4 586.4,359.0 587.4,362.1 588.6,373.6 589.7,382.9 591.1,383.6 592.3,375.0 593.6,365.7 594.6,363.6 595.7,367.1 597.1,377.9 598.3,385.0 599.4,387.6 600.7,380.7 602.1,371.4 603.3,368.1 604.6,369.3 606.0,372.4 607.4,374.3 608.9,370.0 610.3,367.1 611.7,364.3 613.1,363.6 614.6,365.0 616.0,367.9 617.9,371.4 619.7,373.6 621.1,371.0 622.1,370.0 623.6,377.9 625.4,385.0 626.9,380.7 628.6,374.3 630.3,372.1 632.1,371.0 633.6,369.3 635.0,371.9 636.4,375.0 637.9,376.7 639.3,370.7 640.7,365.7 641.9,364.3 643.1,367.9 644.6,365.7 646.0,363.6 647.4,362.1 648.9,363.6 650.3,365.0 651.7,362.9 653.1,362.1 654.3,367.1 655.1,369.0 656.4,362.9 657.9,359.3 659.3,362.1 660.7,364.0 661.7,363.6 663.6,361.4 665.0,364.3 666.4,369.3 667.9,372.9 669.3,373.3 671.1,370.0 672.9,365.7 674.3,365.0 675.7,361.4 677.4,356.4 678.9,355.3 680.3,356.4 681.7,361.4 683.1,365.7 684.3,360.0 685.7,357.9 687.1,360.7 689.3,360.4 691.4,360.0 693.6,360.4 695.7,357.1 697.4,354.3 698.9,353.3 700.3,355.7 701.7,359.3 703.6,360.0 705.0,359.3 706.4,361.4 707.9,364.3 709.3,368.6 710.7,371.9 712.6,370.0 714.3,368.6 715.7,364.3 717.1,361.4 718.6,360.7 720.7,362.9 722.6,364.7 724.3,365.3 726.0,363.6 727.9,362.9 729.7,360.4 731.4,362.9 733.1,362.1 735.0,360.7 737.1,360.0 739.3,360.4 741.1,362.1 742.9,366.4 744.3,363.6 745.7,361.0 747.1,360.7 748.6,362.9 750.3,364.3 752.1,363.6 754.0,364.7 755.7,362.1 757.9,360.0 760.0,360.7 761.7,361.9 763.6,361.0 765.4,361.9 767.1,360.7 768.6,362.4 770.7,361.0 772.6,360.0 774.3,362.9 776.0,364.3 777.9,362.1 779.7,365.0 781.4,368.6 782.9,365.0 784.6,364.3 786.4,362.9 788.6,361.4 790.3,363.6 792.1,369.3 794.0,369.6 795.7,364.3 797.4,362.4 799.3,364.3 801.4,367.1 803.6,364.3 805.4,364.7 807.1,363.6 808.9,363.3 810.7,365.7 812.1,369.3 813.6,371.4 815.4,369.6 817.1,368.6 818.9,367.1 820.7,364.3 822.9,364.3 825.0,363.6 826.9,364.3 828.6,367.6 830.0,370.0 831.4,367.1 833.6,367.1 835.4,364.3 837.1,362.9 838.9,364.3 840.7,362.9 842.1,362.4 844.0,365.7 845.7,364.3 847.1,365.0 848.9,369.3 850.3,369.3 852.1,367.1 854.3,364.3 856.4,361.4 858.3,363.3 860.3,364.7 862.6,365.7 864.3,367.1 866.0,364.3 867.9,362.1 869.7,363.9 871.4,365.3 873.1,362.9 875.0,365.0 876.9,364.7 878.6,364.3 880.7,363.6 882.9,363.3 885.0,367.1 886.9,366.1 888.9,365.3 891.1,364.7 892.9,366.7 894.6,368.6 896.4,367.1 898.3,365.7 900.0,368.1 901.7,367.6 903.1,370.7 904.6,377.1 906.0,384.3 907.4,387.9 908.6,385.7 910.0,376.4 911.4,373.6 912.9,377.1 914.6,374.7 916.4,370.7 918.3,369.0 920.0,370.7 922.1,373.6 924.0,375.7 925.7,370.7 927.4,366.4 929.3,365.3 930.7,368.6 932.6,367.1 934.3,369.0 935.7,368.6 937.4,370.7 938.6,365.7 940.0,370.7 941.4,377.1 943.1,377.6 944.6,373.6 946.0,368.6 947.4,366.1 948.9,368.6 950.7,371.4 952.6,373.6 954.3,369.3 956.0,366.4 957.9,366.1 959.7,367.1 961.4,367.9 962.9,372.9 964.0,375.3 965.4,371.4 966.9,367.6 968.6,366.7 970.3,369.3 972.1,367.1 973.6,365.3 975.0,368.6 976.4,367.9 977.9,370.7 979.7,374.3 981.4,371.4 983.1,369.3 985.0,368.1 986.4,367.6 987.4,365.7 988.9,370.0 990.7,372.9 992.6,373.6 994.0,375.0 995.4,373.3 997.1,374.7 998.9,375.7 1000.7,375.0 1002.6,371.9 1004.6,370.0 1006.4,369.0 1008.6,367.9 1010.3,370.7 1011.7,375.7 1013.6,376.4 1015.0,372.9 1016.4,370.0 1018.3,370.7 1020.0,370.0 1022.1,367.9 1024.3,366.1 1026.4,367.9 1028.3,369.6 1030.0,370.4 1032.1,370.7 1034.3,372.4 1036.4,374.3 1038.3,373.9 1039.7,369.6 1040.7,368.9 1041.7,368.1 1043.6,365.3 1045.4,370.0 1047.1,372.4 1049.3,372.9 1051.1,369.6 1053.1,373.9 1055.0,369.3 1056.9,369.0 1058.6,367.1 1060.7,369.3 1062.9,371.4 1064.6,372.4 1066.4,373.3 1068.6,372.4 1070.7,374.3 1072.6,376.4 1074.3,373.3 1076.4,372.4 1078.6,372.9 1080.3,372.4 1082.1,370.0 1084.0,369.3 1085.7,373.6 1087.4,382.1 1088.9,387.1 1090.3,390.0 1092.1,387.9 1093.6,379.3 1095.0,374.3 1096.4,377.9 1097.4,387.1 1098.6,390.0 1100.0,383.6 1101.4,377.9 1103.1,376.4 1105.0,377.1 1106.4,374.3 1108.3,372.4 1110.0,376.4 1111.7,380.4 1113.6,377.1 1115.4,373.3 1117.1,373.9 1118.9,371.9 1120.7,370.7 1122.6,375.7 1124.3,380.0 1126.0,377.9 1127.9,375.7 1129.7,372.9 1131.4,370.0 1133.1,369.3 1135.0,370.7 1136.9,372.4 1138.6,372.4 1140.3,372.4 1142.1,369.6 1143.6,373.6 1145.4,378.6 1147.4,381.4 1149.3,384.3 1151.1,379.3 1152.9,374.3 1154.6,371.4 1156.4,373.6 1158.3,371.9 1160.3,370.7 1162.1,369.3 1164.0,372.4 1166.0,375.7 1167.9,372.4 1169.7,369.3 1171.7,368.6 1173.6,369.0 1175.4,371.0 1177.4,371.9 1179.3,374.3 1181.4,378.6 1183.6,382.1 1185.0,377.9 1186.4,373.3 1188.6,372.4 1190.7,372.4 1192.9,370.7 1194.6,371.9 1196.4,372.9 1198.3,372.4 1199.7,370.1 1201.4,368.6 1202.9,372.4 1205.0,374.3 1207.1,377.6 1209.3,377.6 1210.7,373.6 1212.1,371.0 1214.3,372.4 1216.0,372.4 1217.9,371.4 1219.7,373.9 1221.4,375.3 1223.6,376.4 1225.7,376.4 1227.9,377.9 1230.0,380.0 1231.7,379.6 1233.6,377.6 1235.7,375.0 1237.9,373.3 1240.0,373.9 1242.1,372.9 1244.0,375.0 1245.7,378.1 1247.4,375.7 1249.3,372.9 1250.7,371.9 1252.6,373.3 1254.3,372.9 1256.0,372.4 1257.4,371.0 1259.3,372.4 1261.1,372.4 1262.9,372.9 1264.6,373.9 1266.0,370.4 1267.4,368.6 1269.3,370.0 1271.1,370.7 1272.9,373.3 1274.3,372.4 1275.4,373.9 1277.1,370.0 1279.3,365.7 1280.7,369.0 1282.6,367.1 1284.3,364.7 1286.0,366.7 1287.9,368.6 1290.0,368.1 1292.1,367.6 1294.3,367.6 1297.1,367.3 1299.6,367.3"/>
<rect x="101.7" y="348.6" width="1197.90" height="83.90" fill="none" stroke="#222" stroke-width="1"/>
<line x1="102.10" y1="432.5" x2="102.10" y2="436.20" stroke="#222" stroke-width="0.9"/>
<text x="102.10" y="447.60" class="s" font-size="9.7" text-anchor="middle" fill="#111">3500</text>
<line x1="161.26" y1="432.5" x2="161.26" y2="436.20" stroke="#222" stroke-width="0.9"/>
<text x="161.26" y="447.60" class="s" font-size="9.7" text-anchor="middle" fill="#111">3600</text>
<line x1="220.43" y1="432.5" x2="220.43" y2="436.20" stroke="#222" stroke-width="0.9"/>
<text x="220.43" y="447.60" class="s" font-size="9.7" text-anchor="middle" fill="#111">3700</text>
<line x1="279.60" y1="432.5" x2="279.60" y2="436.20" stroke="#222" stroke-width="0.9"/>
<text x="279.60" y="447.60" class="s" font-size="9.7" text-anchor="middle" fill="#111">3800</text>
<line x1="338.76" y1="432.5" x2="338.76" y2="436.20" stroke="#222" stroke-width="0.9"/>
<text x="338.76" y="447.60" class="s" font-size="9.7" text-anchor="middle" fill="#111">3900</text>
<line x1="397.92" y1="432.5" x2="397.92" y2="436.20" stroke="#222" stroke-width="0.9"/>
<text x="397.92" y="447.60" class="s" font-size="9.7" text-anchor="middle" fill="#111">4000</text>
<line x1="457.09" y1="432.5" x2="457.09" y2="436.20" stroke="#222" stroke-width="0.9"/>
<text x="457.09" y="447.60" class="s" font-size="9.7" text-anchor="middle" fill="#111">4100</text>
<line x1="516.25" y1="432.5" x2="516.25" y2="436.20" stroke="#222" stroke-width="0.9"/>
<text x="516.25" y="447.60" class="s" font-size="9.7" text-anchor="middle" fill="#111">4200</text>
<line x1="575.42" y1="432.5" x2="575.42" y2="436.20" stroke="#222" stroke-width="0.9"/>
<text x="575.42" y="447.60" class="s" font-size="9.7" text-anchor="middle" fill="#111">4300</text>
<line x1="634.59" y1="432.5" x2="634.59" y2="436.20" stroke="#222" stroke-width="0.9"/>
<text x="634.59" y="447.60" class="s" font-size="9.7" text-anchor="middle" fill="#111">4400</text>
<line x1="693.75" y1="432.5" x2="693.75" y2="436.20" stroke="#222" stroke-width="0.9"/>
<text x="693.75" y="447.60" class="s" font-size="9.7" text-anchor="middle" fill="#111">4500</text>
<line x1="752.92" y1="432.5" x2="752.92" y2="436.20" stroke="#222" stroke-width="0.9"/>
<text x="752.92" y="447.60" class="s" font-size="9.7" text-anchor="middle" fill="#111">4600</text>
<line x1="812.08" y1="432.5" x2="812.08" y2="436.20" stroke="#222" stroke-width="0.9"/>
<text x="812.08" y="447.60" class="s" font-size="9.7" text-anchor="middle" fill="#111">4700</text>
<line x1="871.25" y1="432.5" x2="871.25" y2="436.20" stroke="#222" stroke-width="0.9"/>
<text x="871.25" y="447.60" class="s" font-size="9.7" text-anchor="middle" fill="#111">4800</text>
<line x1="930.41" y1="432.5" x2="930.41" y2="436.20" stroke="#222" stroke-width="0.9"/>
<text x="930.41" y="447.60" class="s" font-size="9.7" text-anchor="middle" fill="#111">4900</text>
<line x1="989.58" y1="432.5" x2="989.58" y2="436.20" stroke="#222" stroke-width="0.9"/>
<text x="989.58" y="447.60" class="s" font-size="9.7" text-anchor="middle" fill="#111">5000</text>
<line x1="1048.74" y1="432.5" x2="1048.74" y2="436.20" stroke="#222" stroke-width="0.9"/>
<text x="1048.74" y="447.60" class="s" font-size="9.7" text-anchor="middle" fill="#111">5100</text>
<line x1="1107.90" y1="432.5" x2="1107.90" y2="436.20" stroke="#222" stroke-width="0.9"/>
<text x="1107.90" y="447.60" class="s" font-size="9.7" text-anchor="middle" fill="#111">5200</text>
<line x1="1167.07" y1="432.5" x2="1167.07" y2="436.20" stroke="#222" stroke-width="0.9"/>
<text x="1167.07" y="447.60" class="s" font-size="9.7" text-anchor="middle" fill="#111">5300</text>
<line x1="1226.23" y1="432.5" x2="1226.23" y2="436.20" stroke="#222" stroke-width="0.9"/>
<text x="1226.23" y="447.60" class="s" font-size="9.7" text-anchor="middle" fill="#111">5400</text>
<line x1="1285.40" y1="432.5" x2="1285.40" y2="436.20" stroke="#222" stroke-width="0.9"/>
<text x="1285.40" y="447.60" class="s" font-size="9.7" text-anchor="middle" fill="#111">5500</text>
<line x1="98.00" y1="426.00" x2="101.7" y2="426.00" stroke="#222" stroke-width="0.9"/>
<text x="94.90" y="429.50" class="s" font-size="9.7" text-anchor="end" fill="#111">50</text>
<line x1="98.00" y1="402.46" x2="101.7" y2="402.46" stroke="#222" stroke-width="0.9"/>
<text x="94.90" y="405.96" class="s" font-size="9.7" text-anchor="end" fill="#111">100</text>
<line x1="98.00" y1="378.93" x2="101.7" y2="378.93" stroke="#222" stroke-width="0.9"/>
<text x="94.90" y="382.43" class="s" font-size="9.7" text-anchor="end" fill="#111">150</text>
<line x1="98.00" y1="355.39" x2="101.7" y2="355.39" stroke="#222" stroke-width="0.9"/>
<text x="94.90" y="358.89" class="s" font-size="9.7" text-anchor="end" fill="#111">200</text>
<text x="102.80" y="346.50" class="s" font-size="9.6" fill="#111">e</text>
<text x="108.80" y="342.60" class="s" font-size="6.4" fill="#111">−17</text>
<text x="123.20" y="346.50" class="s" font-size="9.6" fill="#111">x2</text>
<text x="134.90" y="346.50" class="s" font-size="9.6" fill="#111" font-style="italic">Å</text>
<text transform="translate(122.60,306.90) rotate(90)" class="s" font-size="10.0" text-anchor="end" fill="#87ceeb" opacity="0.7">NeV  {</text>
<text transform="translate(129.00,306.90) rotate(90)" class="s" font-size="10.0" text-anchor="end" fill="#ffa500" opacity="0.92">SiIV {</text>
<text transform="translate(126.10,349.40) rotate(90)" class="s" font-size="10.0" text-anchor="end" fill="#ff0000" stroke="#ff0000" stroke-width="0.4">OVI  {</text>
<text transform="translate(145.20,349.40) rotate(90)" class="s" font-size="10.0" text-anchor="end" fill="#800080" stroke="#800080" stroke-width="0.4">HeII {</text>
<text transform="translate(250.50,349.40) rotate(90)" class="s" font-size="10.0" text-anchor="end" fill="#8a2be2" stroke="#8a2be2" stroke-width="0.4">SiIV {</text>
<text transform="translate(342.60,349.40) rotate(90)" class="s" font-size="10.0" text-anchor="end" fill="#87ceeb" opacity="0.7">OII  {</text>
<text transform="translate(355.40,349.40) rotate(90)" class="s" font-size="10.0" text-anchor="end" fill="#ffa500" opacity="0.92">CIV  {</text>
<text transform="translate(363.50,349.40) rotate(90)" class="s" font-size="10.0" text-anchor="end" fill="#87ceeb" opacity="0.7">OII  {</text>
<text transform="translate(409.10,349.40) rotate(90)" class="s" font-size="10.0" text-anchor="end" fill="#87ceeb" opacity="0.7">H<tspan font-style="italic">η</tspan> {</text>
<text transform="translate(542.10,349.40) rotate(90)" class="s" font-size="10.0" text-anchor="end" fill="#ff0000" stroke="#ff0000" stroke-width="0.4">NV   {</text>
<text transform="translate(588.80,349.40) rotate(90)" class="s" font-size="10.0" text-anchor="end" fill="#ff0000" stroke="#ff0000" stroke-width="0.4">SiII {</text>
<text transform="translate(636.90,349.40) rotate(90)" class="s" font-size="10.0" text-anchor="end" fill="#8a2be2" stroke="#8a2be2" stroke-width="0.4">HeII {</text>
<text transform="translate(651.90,349.40) rotate(90)" class="s" font-size="10.0" text-anchor="end" fill="#008000" opacity="0.92">H<tspan font-style="italic">ε</tspan> {</text>
<text transform="translate(650.90,306.90) rotate(90)" class="s" font-size="10.0" text-anchor="end" fill="#008000" opacity="0.92">(H)CaII {</text>
<text transform="translate(722.30,349.40) rotate(90)" class="s" font-size="10.0" text-anchor="end" fill="#87ceeb" opacity="0.7">H<tspan font-style="italic">γ</tspan> {</text>
<text transform="translate(745.90,349.40) rotate(90)" class="s" font-size="10.0" text-anchor="end" fill="#87ceeb" opacity="0.7">H<tspan font-style="italic">γ</tspan> {</text>
<text transform="translate(860.20,349.40) rotate(90)" class="s" font-size="10.0" text-anchor="end" fill="#ff0000" stroke="#ff0000" stroke-width="0.4">SiIV {</text>
<text transform="translate(894.60,306.90) rotate(90)" class="s" font-size="10.0" text-anchor="end" fill="#ffa500" opacity="0.92">CIII {</text>
<text transform="translate(895.90,349.40) rotate(90)" class="s" font-size="10.0" text-anchor="end" fill="#008000" opacity="0.92">H<tspan font-style="italic">γ</tspan> {</text>
<text transform="translate(1027.70,349.40) rotate(90)" class="s" font-size="10.0" text-anchor="end" fill="#800080" stroke="#800080" stroke-width="0.4">CII  {</text>
<text transform="translate(1045.90,349.40) rotate(90)" class="s" font-size="10.0" text-anchor="end" fill="#87ceeb" opacity="0.7">H<tspan font-style="italic">β</tspan> {</text>
<text transform="translate(1062.70,349.40) rotate(90)" class="s" font-size="10.0" text-anchor="end" fill="#8a2be2" stroke="#8a2be2" stroke-width="0.4">CIII {</text>
<text transform="translate(1072.30,349.40) rotate(90)" class="s" font-size="10.0" text-anchor="end" fill="#87ceeb" opacity="0.7">H<tspan font-style="italic">β</tspan> {</text>
<text transform="translate(1107.30,349.40) rotate(90)" class="s" font-size="10.0" text-anchor="end" fill="#87ceeb" opacity="0.7">OIII {</text>
<text transform="translate(1134.10,349.40) rotate(90)" class="s" font-size="10.0" text-anchor="end" fill="#87ceeb" opacity="0.7">OIII {</text>
<text transform="translate(1136.60,306.90) rotate(90)" class="s" font-size="10.0" text-anchor="end" fill="#87ceeb" opacity="0.7">OIII {</text>
<text transform="translate(1164.50,306.90) rotate(90)" class="s" font-size="10.0" text-anchor="end" fill="#87ceeb" opacity="0.7">OIII {</text>
<text transform="translate(1168.00,349.40) rotate(90)" class="s" font-size="10.0" text-anchor="end" fill="#ff0000" stroke="#ff0000" stroke-width="0.4">CIV  {</text>
<text transform="translate(1241.00,349.40) rotate(90)" class="s" font-size="10.0" text-anchor="end" fill="#008000" opacity="0.92">H<tspan font-style="italic">β</tspan> {</text>
<rect x="507.90" y="450.1" width="16.9" height="6.2" fill="#ff0000"/>
<text x="531.10" y="456.20" class="s" font-size="8.1" fill="#222">Lyα</text>
<rect x="561.70" y="450.1" width="16.9" height="6.2" fill="#008000"/>
<text x="584.90" y="456.20" class="s" font-size="8.1" fill="#222">OII</text>
<rect x="614.30" y="450.1" width="16.9" height="6.2" fill="#8a2be2"/>
<text x="637.50" y="456.20" class="s" font-size="8.1" fill="#222">CIV</text>
<rect x="669.30" y="450.1" width="16.9" height="6.2" fill="#800080"/>
<text x="692.50" y="456.20" class="s" font-size="8.1" fill="#222">CIII</text>
<rect x="721.60" y="450.1" width="16.9" height="6.2" fill="#ffa500"/>
<text x="744.80" y="456.20" class="s" font-size="8.1" fill="#222">HeII</text>
<rect x="776.30" y="450.1" width="16.9" height="6.2" fill="#87ceeb"/>
<text x="799.50" y="456.20" class="s" font-size="8.1" fill="#222">(K)CaII</text>
<rect x="841.60" y="450.1" width="16.9" height="6.2" fill="#87ceeb"/>
<text x="864.80" y="456.20" class="s" font-size="8.1" fill="#222">(H)CaII</text>
</g>
<g id="cutpanels">
<text x="144.20" y="525.90" class="s" font-size="12.8" text-anchor="middle">Fiber Positions</text>
<text x="329.40" y="525.90" class="s" font-size="12.8" text-anchor="middle">Lineflux Map</text>
<text x="514.60" y="525.90" class="s" font-size="12.8" text-anchor="middle">DECaLS(24.0) g</text>
<text x="699.80" y="525.90" class="s" font-size="12.8" text-anchor="middle">DECaLS(24.0) r</text>
<text x="885.00" y="525.90" class="s" font-size="12.8" text-anchor="middle">DECaLS(24.0) z</text>
<rect x="70.2" y="532.5" width="148.0" height="147.80" fill="#ececec"/>
<g shape-rendering="crispEdges">
<rect x="104.22" y="532.50" width="4.30" height="4.30" fill="#e7e7e7"/>
<rect x="108.48" y="532.50" width="4.30" height="4.30" fill="#e0e0e0"/>
<rect x="112.73" y="532.50" width="4.30" height="4.30" fill="#c4c4c4"/>
<rect x="116.98" y="532.50" width="4.30" height="4.30" fill="#696969"/>
<rect x="121.23" y="532.50" width="4.30" height="4.30" fill="#0d0d0d"/>
<rect x="125.49" y="532.50" width="29.82" height="4.30" fill="#040404"/>
<rect x="155.26" y="532.50" width="4.30" height="4.30" fill="#0d0d0d"/>
<rect x="159.51" y="532.50" width="4.30" height="4.30" fill="#696969"/>
<rect x="163.76" y="532.50" width="4.30" height="4.30" fill="#c4c4c4"/>
<rect x="168.02" y="532.50" width="4.30" height="4.30" fill="#e0e0e0"/>
<rect x="172.27" y="532.50" width="4.30" height="4.30" fill="#e7e7e7"/>
<rect x="99.97" y="536.75" width="4.30" height="4.30" fill="#e0e0e0"/>
<rect x="104.22" y="536.75" width="4.30" height="4.30" fill="#cccccc"/>
<rect x="108.48" y="536.75" width="4.30" height="4.30" fill="#c4c4c4"/>
<rect x="112.73" y="536.75" width="4.30" height="4.30" fill="#8f8f8f"/>
<rect x="116.98" y="536.75" width="4.30" height="4.30" fill="#696969"/>
<rect x="121.23" y="536.75" width="4.30" height="4.30" fill="#0d0d0d"/>
<rect x="125.49" y="536.75" width="29.82" height="4.30" fill="#040404"/>
<rect x="155.26" y="536.75" width="4.30" height="4.30" fill="#0d0d0d"/>
<rect x="159.51" y="536.75" width="4.30" height="4.30" fill="#696969"/>
<rect x="163.76" y="536.75" width="4.30" height="4.30" fill="#8f8f8f"/>
<rect x="168.02" y="536.75" width="4.30" height="4.30" fill="#c4c4c4"/>
<rect x="172.27" y="536.75" width="4.30" height="4.30" fill="#cccccc"/>
<rect x="176.52" y="536.75" width="4.30" height="4.30" fill="#e0e0e0"/>
<rect x="95.72" y="541.01" width="4.30" height="4.30" fill="#e7e7e7"/>
<rect x="99.97" y="541.01" width="4.30" height="4.30" fill="#cccccc"/>
<rect x="104.22" y="541.01" width="4.30" height="4.30" fill="#8f8f8f"/>
<rect x="108.48" y="541.01" width="8.56" height="4.30" fill="#696969"/>
<rect x="116.98" y="541.01" width="4.30" height="4.30" fill="#0d0d0d"/>
<rect x="121.23" y="541.01" width="38.33" height="4.30" fill="#040404"/>
<rect x="159.51" y="541.01" width="4.30" height="4.30" fill="#0d0d0d"/>
<rect x="163.76" y="541.01" width="8.56" height="4.30" fill="#696969"/>
<rect x="172.27" y="541.01" width="4.30" height="4.30" fill="#8f8f8f"/>
<rect x="176.52" y="541.01" width="4.30" height="4.30" fill="#cccccc"/>
<rect x="180.77" y="541.01" width="4.30" height="4.30" fill="#e7e7e7"/>
<rect x="95.72" y="545.26" width="4.30" height="4.30" fill="#e6e6e6"/>
<rect x="99.97" y="545.26" width="4.30" height="4.30" fill="#c4c4c4"/>
<rect x="104.22" y="545.26" width="4.30" height="4.30" fill="#696969"/>
<rect x="108.48" y="545.26" width="8.56" height="4.30" fill="#0d0d0d"/>
<rect x="116.98" y="545.26" width="46.83" height="4.30" fill="#040404"/>
<rect x="163.76" y="545.26" width="8.56" height="4.30" fill="#0d0d0d"/>
<rect x="172.27" y="545.26" width="4.30" height="4.30" fill="#696969"/>
<rect x="176.52" y="545.26" width="4.30" height="4.30" fill="#c4c4c4"/>
<rect x="180.77" y="545.26" width="4.30" height="4.30" fill="#e6e6e6"/>
<rect x="95.72" y="549.51" width="4.30" height="4.30" fill="#e6e6e6"/>
<rect x="99.97" y="549.51" width="4.30" height="4.30" fill="#c4c4c4"/>
<rect x="104.22" y="549.51" width="4.30" height="4.30" fill="#696969"/>
<rect x="108.48" y="549.51" width="4.30" height="4.30" fill="#0d0d0d"/>
<rect x="112.73" y="549.51" width="55.34" height="4.30" fill="#040404"/>
<rect x="168.02" y="549.51" width="4.30" height="4.30" fill="#0d0d0d"/>
<rect x="172.27" y="549.51" width="4.30" height="4.30" fill="#696969"/>
<rect x="176.52" y="549.51" width="4.30" height="4.30" fill="#c4c4c4"/>
<rect x="180.77" y="549.51" width="4.30" height="4.30" fill="#e6e6e6"/>
<rect x="95.72" y="553.76" width="4.30" height="4.30" fill="#e6e6e6"/>
<rect x="99.97" y="553.76" width="4.30" height="4.30" fill="#c4c4c4"/>
<rect x="104.22" y="553.76" width="4.30" height="4.30" fill="#696969"/>
<rect x="108.48" y="553.76" width="4.30" height="4.30" fill="#0d0d0d"/>
<rect x="112.73" y="553.76" width="55.34" height="4.30" fill="#040404"/>
<rect x="168.02" y="553.76" width="4.30" height="4.30" fill="#0d0d0d"/>
<rect x="172.27" y="553.76" width="4.30" height="4.30" fill="#696969"/>
<rect x="176.52" y="553.76" width="4.30" height="4.30" fill="#c4c4c4"/>
<rect x="180.77" y="553.76" width="4.30" height="4.30" fill="#e6e6e6"/>
<rect x="95.72" y="558.02" width="4.30" height="4.30" fill="#e7e7e7"/>
<rect x="99.97" y="558.02" width="4.30" height="4.30" fill="#cccccc"/>
<rect x="104.22" y="558.02" width="4.30" height="4.30" fill="#8f8f8f"/>
<rect x="108.48" y="558.02" width="4.30" height="4.30" fill="#696969"/>
<rect x="112.73" y="558.02" width="4.30" height="4.30" fill="#0d0d0d"/>
<rect x="116.98" y="558.02" width="51.08" height="4.30" fill="#040404"/>
<rect x="168.02" y="558.02" width="4.30" height="4.30" fill="#0d0d0d"/>
<rect x="172.27" y="558.02" width="4.30" height="4.30" fill="#696969"/>
<rect x="176.52" y="558.02" width="4.30" height="4.30" fill="#c4c4c4"/>
<rect x="180.77" y="558.02" width="4.30" height="4.30" fill="#e6e6e6"/>
<rect x="99.97" y="562.27" width="4.30" height="4.30" fill="#e0e0e0"/>
<rect x="104.22" y="562.27" width="4.30" height="4.30" fill="#c4c4c4"/>
<rect x="108.48" y="562.27" width="4.30" height="4.30" fill="#696969"/>
<rect x="112.73" y="562.27" width="8.56" height="4.30" fill="#0d0d0d"/>
<rect x="121.23" y="562.27" width="42.58" height="4.30" fill="#040404"/>
<rect x="163.76" y="562.27" width="4.30" height="4.30" fill="#0d0d0d"/>
<rect x="168.02" y="562.27" width="4.30" height="4.30" fill="#696969"/>
<rect x="172.27" y="562.27" width="4.30" height="4.30" fill="#8f8f8f"/>
<rect x="176.52" y="562.27" width="4.30" height="4.30" fill="#cccccc"/>
<rect x="180.77" y="562.27" width="4.30" height="4.30" fill="#e7e7e7"/>
<rect x="99.97" y="566.52" width="4.30" height="4.30" fill="#e7e7e7"/>
<rect x="104.22" y="566.52" width="4.30" height="4.30" fill="#cccccc"/>
<rect x="108.48" y="566.52" width="4.30" height="4.30" fill="#8f8f8f"/>
<rect x="112.73" y="566.52" width="8.56" height="4.30" fill="#696969"/>
<rect x="121.23" y="566.52" width="4.30" height="4.30" fill="#0d0d0d"/>
<rect x="125.49" y="566.52" width="34.07" height="4.30" fill="#040404"/>
<rect x="159.51" y="566.52" width="4.30" height="4.30" fill="#0d0d0d"/>
<rect x="163.76" y="566.52" width="4.30" height="4.30" fill="#696969"/>
<rect x="168.02" y="566.52" width="4.30" height="4.30" fill="#8f8f8f"/>
<rect x="172.27" y="566.52" width="4.30" height="4.30" fill="#cccccc"/>
<rect x="176.52" y="566.52" width="4.30" height="4.30" fill="#e0e0e0"/>
<rect x="104.22" y="570.78" width="4.30" height="4.30" fill="#e0e0e0"/>
<rect x="108.48" y="570.78" width="4.30" height="4.30" fill="#cccccc"/>
<rect x="112.73" y="570.78" width="4.30" height="4.30" fill="#c4c4c4"/>
<rect x="116.98" y="570.78" width="4.30" height="4.30" fill="#696969"/>
<rect x="121.23" y="570.78" width="8.56" height="4.30" fill="#0d0d0d"/>
<rect x="129.74" y="570.78" width="29.82" height="4.30" fill="#040404"/>
<rect x="159.51" y="570.78" width="4.30" height="4.30" fill="#0d0d0d"/>
<rect x="163.76" y="570.78" width="4.30" height="4.30" fill="#696969"/>
<rect x="168.02" y="570.78" width="4.30" height="4.30" fill="#c4c4c4"/>
<rect x="172.27" y="570.78" width="4.30" height="4.30" fill="#e0e0e0"/>
<rect x="108.48" y="575.03" width="4.30" height="4.30" fill="#e7e7e7"/>
<rect x="112.73" y="575.03" width="4.30" height="4.30" fill="#cccccc"/>
<rect x="116.98" y="575.03" width="4.30" height="4.30" fill="#8f8f8f"/>
<rect x="121.23" y="575.03" width="8.56" height="4.30" fill="#696969"/>
<rect x="129.74" y="575.03" width="4.30" height="4.30" fill="#0d0d0d"/>
<rect x="133.99" y="575.03" width="21.31" height="4.30" fill="#040404"/>
<rect x="155.26" y="575.03" width="4.30" height="4.30" fill="#0d0d0d"/>
<rect x="159.51" y="575.03" width="4.30" height="4.30" fill="#696969"/>
<rect x="163.76" y="575.03" width="4.30" height="4.30" fill="#8f8f8f"/>
<rect x="168.02" y="575.03" width="4.30" height="4.30" fill="#cccccc"/>
<rect x="172.27" y="575.03" width="4.30" height="4.30" fill="#e7e7e7"/>
<rect x="112.73" y="579.28" width="4.30" height="4.30" fill="#e0e0e0"/>
<rect x="116.98" y="579.28" width="4.30" height="4.30" fill="#cccccc"/>
<rect x="121.23" y="579.28" width="4.30" height="4.30" fill="#c4c4c4"/>
<rect x="125.49" y="579.28" width="4.30" height="4.30" fill="#696969"/>
<rect x="129.74" y="579.28" width="29.82" height="4.30" fill="#0d0d0d"/>
<rect x="159.51" y="579.28" width="4.30" height="4.30" fill="#696969"/>
<rect x="163.76" y="579.28" width="4.30" height="4.30" fill="#c4c4c4"/>
<rect x="168.02" y="579.28" width="4.30" height="4.30" fill="#e0e0e0"/>
<rect x="116.98" y="583.53" width="4.30" height="4.30" fill="#e7e7e7"/>
<rect x="121.23" y="583.53" width="4.30" height="4.30" fill="#cccccc"/>
<rect x="125.49" y="583.53" width="4.30" height="4.30" fill="#8f8f8f"/>
<rect x="129.74" y="583.53" width="29.82" height="4.30" fill="#696969"/>
<rect x="159.51" y="583.53" width="4.30" height="4.30" fill="#8f8f8f"/>
<rect x="163.76" y="583.53" width="4.30" height="4.30" fill="#cccccc"/>
<rect x="168.02" y="583.53" width="4.30" height="4.30" fill="#e7e7e7"/>
<rect x="121.23" y="587.79" width="4.30" height="4.30" fill="#e0e0e0"/>
<rect x="125.49" y="587.79" width="4.30" height="4.30" fill="#cccccc"/>
<rect x="129.74" y="587.79" width="29.82" height="4.30" fill="#c4c4c4"/>
<rect x="159.51" y="587.79" width="4.30" height="4.30" fill="#cccccc"/>
<rect x="163.76" y="587.79" width="4.30" height="4.30" fill="#e0e0e0"/>
<rect x="125.49" y="592.04" width="4.30" height="4.30" fill="#e7e7e7"/>
<rect x="129.74" y="592.04" width="29.82" height="4.30" fill="#e6e6e6"/>
<rect x="159.51" y="592.04" width="4.30" height="4.30" fill="#e7e7e7"/>
</g>
<g clip-path="url(#pc0)" fill="none">
<circle cx="103.9" cy="577.2" r="12.45" stroke="#8a8a8a" stroke-width="2.2" stroke-dasharray="1.7 1.0" opacity="0.85"/>
<circle cx="103.9" cy="577.2" r="12.15" stroke="#777" stroke-width="0.9"/>
<circle cx="98.4" cy="601.4" r="12.45" stroke="#8a8a8a" stroke-width="2.2" stroke-dasharray="1.7 1.0" opacity="0.85"/>
<circle cx="98.4" cy="601.4" r="12.15" stroke="#777" stroke-width="0.9"/>
<circle cx="122.6" cy="595.9" r="12.45" stroke="#8a8a8a" stroke-width="2.2" stroke-dasharray="1.7 1.0" opacity="0.85"/>
<circle cx="122.6" cy="595.9" r="12.15" stroke="#777" stroke-width="0.9"/>
<circle cx="192.0" cy="576.1" r="12.45" stroke="#8a8a8a" stroke-width="2.2" stroke-dasharray="1.7 1.0" opacity="0.85"/>
<circle cx="192.0" cy="576.1" r="12.15" stroke="#777" stroke-width="0.9"/>
<circle cx="168.9" cy="582.7" r="12.45" stroke="#8a8a8a" stroke-width="2.2" stroke-dasharray="1.7 1.0" opacity="0.85"/>
<circle cx="168.9" cy="582.7" r="12.15" stroke="#777" stroke-width="0.9"/>
<circle cx="151.2" cy="564.0" r="12.15" stroke="#555" stroke-width="1" opacity="0.55"/>
<circle cx="174.4" cy="558.5" r="12.15" stroke="#555" stroke-width="1" opacity="0.55"/>
<circle cx="183.2" cy="599.2" r="12.15" stroke="#707070" stroke-width="1.1"/>
<circle cx="178.8" cy="621.2" r="12.15" stroke="#707070" stroke-width="1.1"/>
<circle cx="91.8" cy="625.6" r="12.15" stroke="#707070" stroke-width="1.1"/>
<circle cx="115.6" cy="619.0" r="12.15" stroke="#707070" stroke-width="1.1"/>
<circle cx="108.9" cy="642.2" r="12.15" stroke="#707070" stroke-width="1.1"/>
<circle cx="133.6" cy="635.6" r="12.15" stroke="#707070" stroke-width="1.1"/>
<circle cx="173.3" cy="645.5" r="12.15" stroke="#707070" stroke-width="1.1"/>
<circle cx="149.5" cy="652.1" r="12.15" stroke="#707070" stroke-width="1.1"/>
<circle cx="126.3" cy="658.7" r="12.15" stroke="#707070" stroke-width="1.1"/>
<circle cx="154.1" cy="628.9" r="12.15" stroke="#ffa500" stroke-width="1.3"/>
<circle cx="161.8" cy="605.8" r="12.15" stroke="#00ff00" stroke-width="1.5"/>
<circle cx="143.1" cy="588.9" r="12.15" stroke="#ff0000" stroke-width="1.6"/>
<circle cx="143.1" cy="588.9" r="12.75" stroke="#ff0000" stroke-width="2.2" stroke-dasharray="2.4 1.6" opacity="0.8"/>
<circle cx="138.0" cy="611.8" r="12.15" stroke="#0000ff" stroke-width="1.6"/>
<circle cx="138.0" cy="611.8" r="12.75" stroke="#0000ff" stroke-width="2.4" stroke-dasharray="2.4 1.6" opacity="0.85"/>
</g>
<path d="M140.6 606.4H147.6M144.1 602.9V609.9" stroke="#ff0000" stroke-width="1.1" fill="none"/>
<rect x="95.60" y="557.80" width="97.2" height="97.2" fill="none" stroke="#ff0000" stroke-width="1.3"/>
<text x="144.20" y="546.90" class="s" font-size="10.2" text-anchor="middle" fill="#ff0000">N</text>
<text x="80.60" y="610.30" class="s" font-size="10.2" text-anchor="middle" fill="#ff0000">E</text>
<rect x="70.2" y="532.5" width="148.0" height="147.80" fill="none" stroke="#222" stroke-width="1"/>
<line x1="79.40" y1="680.3" x2="79.40" y2="684.00" stroke="#222" stroke-width="0.9"/>
<text x="79.40" y="695.80" class="s" font-size="10.5" text-anchor="middle" fill="#111">−4</text>
<line x1="66.50" y1="671.20" x2="70.2" y2="671.20" stroke="#222" stroke-width="0.9"/>
<text x="62.80" y="675.00" class="s" font-size="10.5" text-anchor="end" fill="#111">−4</text>
<line x1="111.80" y1="680.3" x2="111.80" y2="684.00" stroke="#222" stroke-width="0.9"/>
<text x="111.80" y="695.80" class="s" font-size="10.5" text-anchor="middle" fill="#111">−2</text>
<line x1="66.50" y1="638.80" x2="70.2" y2="638.80" stroke="#222" stroke-width="0.9"/>
<text x="62.80" y="642.60" class="s" font-size="10.5" text-anchor="end" fill="#111">−2</text>
<line x1="144.20" y1="680.3" x2="144.20" y2="684.00" stroke="#222" stroke-width="0.9"/>
<text x="144.20" y="695.80" class="s" font-size="10.5" text-anchor="middle" fill="#111">0</text>
<line x1="66.50" y1="606.40" x2="70.2" y2="606.40" stroke="#222" stroke-width="0.9"/>
<text x="62.80" y="610.20" class="s" font-size="10.5" text-anchor="end" fill="#111">0</text>
<line x1="176.60" y1="680.3" x2="176.60" y2="684.00" stroke="#222" stroke-width="0.9"/>
<text x="176.60" y="695.80" class="s" font-size="10.5" text-anchor="middle" fill="#111">2</text>
<line x1="66.50" y1="574.00" x2="70.2" y2="574.00" stroke="#222" stroke-width="0.9"/>
<text x="62.80" y="577.80" class="s" font-size="10.5" text-anchor="end" fill="#111">2</text>
<line x1="209.00" y1="680.3" x2="209.00" y2="684.00" stroke="#222" stroke-width="0.9"/>
<text x="209.00" y="695.80" class="s" font-size="10.5" text-anchor="middle" fill="#111">4</text>
<line x1="66.50" y1="541.60" x2="70.2" y2="541.60" stroke="#222" stroke-width="0.9"/>
<text x="62.80" y="545.40" class="s" font-size="10.5" text-anchor="end" fill="#111">4</text>
<text x="144.20" y="706.30" class="s" font-size="10.7" text-anchor="middle" fill="#111">arcsecs</text>
</g>
<g id="lineflux">
<g clip-path="url(#pc1)">
<rect x="255.4" y="532.5" width="148.0" height="147.80" fill="#31688e"/>
<ellipse cx="329.6" cy="677.3" rx="90.0" ry="34.0" fill="url(#lfB)" transform="rotate(0 329.6 677.3)"/>
<ellipse cx="399.3" cy="620.9" rx="44.0" ry="60.0" fill="url(#lfB)" transform="rotate(0 399.3 620.9)"/>
<ellipse cx="269.9" cy="634.1" rx="50.0" ry="50.0" fill="url(#lfB)" transform="rotate(0 269.9 634.1)"/>
<ellipse cx="329.6" cy="614.2" rx="58.0" ry="34.0" fill="url(#lfT)" transform="rotate(-10 329.6 614.2)"/>
<ellipse cx="359.5" cy="594.3" rx="56.0" ry="30.0" fill="url(#lfT)" transform="rotate(-40 359.5 594.3)"/>
<ellipse cx="264.9" cy="591.8" rx="34.0" ry="12.0" fill="url(#lfT)" transform="rotate(-17 264.9 591.8)"/>
<ellipse cx="328.8" cy="627.5" rx="30.0" ry="40.0" fill="url(#lfT2)" transform="rotate(0 328.8 627.5)"/>
<ellipse cx="274.9" cy="644.1" rx="34.0" ry="30.0" fill="url(#lfP)" transform="rotate(0 274.9 644.1)"/>
<ellipse cx="396.8" cy="610.9" rx="24.0" ry="30.0" fill="url(#lfP)" transform="rotate(0 396.8 610.9)"/>
<ellipse cx="399.3" cy="670.6" rx="36.0" ry="30.0" fill="url(#lfP)" transform="rotate(0 399.3 670.6)"/>
<ellipse cx="356.1" cy="673.9" rx="30.0" ry="20.0" fill="url(#lfP)" transform="rotate(0 356.1 673.9)"/>
<ellipse cx="291.5" cy="677.3" rx="40.0" ry="18.0" fill="url(#lfP)" transform="rotate(0 291.5 677.3)"/>
<polygon points="255.4,532.5 403.4,532.5 403.4,540.9 274.9,581.1 255.4,587.0" fill="#3e4a89"/>
<polygon points="274.9,581.1 289.8,592.0 289.8,596.2 294.3,596.2 294.3,600.6 298.8,600.6 298.8,604.9 303.1,604.9 303.1,608.6 307.5,608.6 307.5,611.3 312.0,611.3 312.0,613.2 316.3,613.2 316.3,614.9 325.0,614.9 325.0,616.2 337.4,616.2 337.4,613.9 341.5,613.9 341.5,612.7 345.9,612.7 345.9,610.6 350.2,610.6 350.2,608.3 354.5,608.3 354.5,605.3 358.8,605.3 358.8,600.6 364.8,600.6 364.8,596.2 368.9,596.2 368.9,592.0 373.4,592.0 373.4,588.7 377.7,588.7 377.7,585.4 382.0,585.4 382.0,581.7 386.3,581.7 386.3,577.9 390.6,577.9 390.6,574.6 394.9,574.6 394.9,570.5 399.3,570.5 399.3,565.5 403.6,565.5 403.6,560.5 407.9,560.5 407.9,556.4 412.2,556.4 412.2,553.5 416.2,552.9 404.2,540.6" fill="#26828e" opacity="0.45"/>
<polygon points="274.9,581.1 286.8,589.0 286.8,593.2 291.3,593.2 291.3,597.7 295.8,597.7 295.8,602.0 300.1,602.0 300.1,605.6 304.6,605.6 304.6,608.3 309.0,608.3 309.0,610.3 313.3,610.3 313.3,611.9 322.0,611.9 322.0,613.2 334.4,613.2 334.4,610.9 338.6,610.9 338.6,609.8 342.9,609.8 342.9,607.6 347.2,607.6 347.2,605.3 351.5,605.3 351.5,602.3 355.8,602.3 355.8,597.7 361.8,597.7 361.8,593.2 365.9,593.2 365.9,589.0 370.4,589.0 370.4,585.7 374.7,585.7 374.7,582.4 379.0,582.4 379.0,578.7 383.3,578.7 383.3,574.9 387.6,574.9 387.6,571.6 392.0,571.6 392.0,567.5 396.3,567.5 396.3,562.5 400.6,562.5 400.6,557.5 404.9,557.5 404.9,553.4 409.2,553.4 409.2,550.6 413.2,549.9 404.2,540.6" fill="#21918c" opacity="0.5"/>
<polygon points="274.9,581.1 284.2,586.4 284.2,590.5 288.6,590.5 288.6,595.0 293.1,595.0 293.1,599.3 297.4,599.3 297.4,603.0 301.9,603.0 301.9,605.6 306.4,605.6 306.4,607.6 310.7,607.6 310.7,609.3 319.3,609.3 319.3,610.6 331.8,610.6 331.8,608.3 335.9,608.3 335.9,607.1 340.2,607.1 340.2,604.9 344.5,604.9 344.5,602.6 348.8,602.6 348.8,599.6 353.2,599.6 353.2,595.0 359.1,595.0 359.1,590.5 363.3,590.5 363.3,586.4 367.7,586.4 367.7,583.1 372.1,583.1 372.1,579.7 376.4,579.7 376.4,576.1 380.7,576.1 380.7,572.3 385.0,572.3 385.0,569.0 389.3,569.0 389.3,564.8 393.6,564.8 393.6,559.8 397.9,559.8 397.9,554.9 402.2,554.9 402.2,550.7 406.6,550.7 406.6,547.9 410.5,547.2 404.2,540.6" fill="#35b779" opacity="0.6"/>
<polygon points="274.9,581.1 281.7,583.6 281.7,587.7 286.2,587.7 286.2,592.2 290.6,592.2 290.6,596.5 294.9,596.5 294.9,600.1 299.4,600.1 299.4,602.8 303.9,602.8 303.9,604.8 308.2,604.8 308.2,606.4 316.8,606.4 316.8,607.8 329.3,607.8 329.3,605.4 333.4,605.4 333.4,604.3 337.7,604.3 337.7,602.1 342.0,602.1 342.0,599.8 346.4,599.8 346.4,596.8 350.7,596.8 350.7,592.2 356.6,592.2 356.6,587.7 360.8,587.7 360.8,583.6 365.3,583.6 365.3,580.2 369.6,580.2 369.6,576.9 373.9,576.9 373.9,573.3 378.2,573.3 378.2,569.5 382.5,569.5 382.5,566.1 386.8,566.1 386.8,562.0 391.1,562.0 391.1,557.0 395.4,557.0 395.4,552.0 399.8,552.0 399.8,547.9 404.1,547.9 404.1,545.1 408.0,544.4 404.2,540.6" fill="#8fd744" opacity="0.8"/>
<polygon points="274.9,581.1 279.5,581.1 279.5,585.2 284.0,585.2 284.0,589.7 288.5,589.7 288.5,594.0 292.8,594.0 292.8,597.7 297.3,597.7 297.3,600.3 301.7,600.3 301.7,602.3 306.1,602.3 306.1,604.0 314.7,604.0 314.7,605.3 327.1,605.3 327.1,603.0 331.3,603.0 331.3,601.8 335.6,601.8 335.6,599.6 339.9,599.6 339.9,597.3 344.2,597.3 344.2,594.3 348.5,594.3 348.5,589.7 354.5,589.7 354.5,585.2 358.6,585.2 358.6,581.1 363.1,581.1 363.1,577.8 367.4,577.8 367.4,574.4 371.7,574.4 371.7,570.8 376.0,570.8 376.0,567.0 380.3,567.0 380.3,563.7 384.7,563.7 384.7,559.5 389.0,559.5 389.0,554.5 393.3,554.5 393.3,549.6 397.6,549.6 397.6,545.4 401.9,545.4 401.9,542.6 405.9,541.9 404.2,540.6" fill="#fde725" opacity="1"/>
</g>
<rect x="280.80" y="557.80" width="97.2" height="97.2" fill="none" stroke="#ff0000" stroke-width="1.3"/>
<path d="M292.60 606.4H321.80M337.00 606.4H366.20M329.40 569.60V598.80M329.40 614.00V643.20" stroke="#ff0000" stroke-width="1.3" fill="none"/>
<text x="329.40" y="546.90" class="s" font-size="10.2" text-anchor="middle" fill="#ff0000">N</text>
<text x="265.80" y="610.30" class="s" font-size="10.2" text-anchor="middle" fill="#ff0000">E</text>
<rect x="255.4" y="532.5" width="148.0" height="147.80" fill="none" stroke="#222" stroke-width="1"/>
<line x1="264.60" y1="680.3" x2="264.60" y2="684.00" stroke="#222" stroke-width="0.9"/>
<text x="264.60" y="695.80" class="s" font-size="10.5" text-anchor="middle" fill="#111">−4</text>
<line x1="251.70" y1="671.20" x2="255.4" y2="671.20" stroke="#222" stroke-width="0.9"/>
<text x="248.00" y="675.00" class="s" font-size="10.5" text-anchor="end" fill="#111">−4</text>
<line x1="297.00" y1="680.3" x2="297.00" y2="684.00" stroke="#222" stroke-width="0.9"/>
<text x="297.00" y="695.80" class="s" font-size="10.5" text-anchor="middle" fill="#111">−2</text>
<line x1="251.70" y1="638.80" x2="255.4" y2="638.80" stroke="#222" stroke-width="0.9"/>
<text x="248.00" y="642.60" class="s" font-size="10.5" text-anchor="end" fill="#111">−2</text>
<line x1="329.40" y1="680.3" x2="329.40" y2="684.00" stroke="#222" stroke-width="0.9"/>
<text x="329.40" y="695.80" class="s" font-size="10.5" text-anchor="middle" fill="#111">0</text>
<line x1="251.70" y1="606.40" x2="255.4" y2="606.40" stroke="#222" stroke-width="0.9"/>
<text x="248.00" y="610.20" class="s" font-size="10.5" text-anchor="end" fill="#111">0</text>
<line x1="361.80" y1="680.3" x2="361.80" y2="684.00" stroke="#222" stroke-width="0.9"/>
<text x="361.80" y="695.80" class="s" font-size="10.5" text-anchor="middle" fill="#111">2</text>
<line x1="251.70" y1="574.00" x2="255.4" y2="574.00" stroke="#222" stroke-width="0.9"/>
<text x="248.00" y="577.80" class="s" font-size="10.5" text-anchor="end" fill="#111">2</text>
<line x1="394.20" y1="680.3" x2="394.20" y2="684.00" stroke="#222" stroke-width="0.9"/>
<text x="394.20" y="695.80" class="s" font-size="10.5" text-anchor="middle" fill="#111">4</text>
<line x1="251.70" y1="541.60" x2="255.4" y2="541.60" stroke="#222" stroke-width="0.9"/>
<text x="248.00" y="545.40" class="s" font-size="10.5" text-anchor="end" fill="#111">4</text>
<text x="329.40" y="706.30" class="s" font-size="10.7" text-anchor="middle" fill="#111">s/b: 7.89 +/- 0.153</text>
</g>
<g id="decals2">
<rect x="440.6" y="532.5" width="148.0" height="147.80" fill="#d3d3d3"/>
<g shape-rendering="crispEdges">
<rect x="478.88" y="532.50" width="4.30" height="4.30" fill="#d7d7d7"/>
<rect x="483.13" y="532.50" width="4.30" height="4.30" fill="#ebebeb"/>
<rect x="487.38" y="532.50" width="4.30" height="4.30" fill="#848484"/>
<rect x="491.63" y="532.50" width="4.30" height="4.30" fill="#121212"/>
<rect x="495.89" y="532.50" width="4.30" height="4.30" fill="#212121"/>
<rect x="500.14" y="532.50" width="25.57" height="4.30" fill="#222222"/>
<rect x="525.66" y="532.50" width="4.30" height="4.30" fill="#212121"/>
<rect x="529.91" y="532.50" width="4.30" height="4.30" fill="#121212"/>
<rect x="534.16" y="532.50" width="4.30" height="4.30" fill="#848484"/>
<rect x="538.42" y="532.50" width="4.30" height="4.30" fill="#ebebeb"/>
<rect x="542.67" y="532.50" width="4.30" height="4.30" fill="#d7d7d7"/>
<rect x="470.37" y="536.75" width="4.30" height="4.30" fill="#d7d7d7"/>
<rect x="474.62" y="536.75" width="4.30" height="4.30" fill="#d9d9d9"/>
<rect x="478.88" y="536.75" width="4.30" height="4.30" fill="#ebebeb"/>
<rect x="483.13" y="536.75" width="4.30" height="4.30" fill="#848484"/>
<rect x="487.38" y="536.75" width="4.30" height="4.30" fill="#121212"/>
<rect x="491.63" y="536.75" width="4.30" height="4.30" fill="#181818"/>
<rect x="495.89" y="536.75" width="34.07" height="4.30" fill="#222222"/>
<rect x="529.91" y="536.75" width="4.30" height="4.30" fill="#181818"/>
<rect x="534.16" y="536.75" width="4.30" height="4.30" fill="#121212"/>
<rect x="538.42" y="536.75" width="4.30" height="4.30" fill="#848484"/>
<rect x="542.67" y="536.75" width="4.30" height="4.30" fill="#ebebeb"/>
<rect x="546.92" y="536.75" width="4.30" height="4.30" fill="#d7d7d7"/>
<rect x="466.12" y="541.01" width="4.30" height="4.30" fill="#d7d7d7"/>
<rect x="470.37" y="541.01" width="4.30" height="4.30" fill="#ebebeb"/>
<rect x="474.62" y="541.01" width="4.30" height="4.30" fill="#e4e4e4"/>
<rect x="478.88" y="541.01" width="4.30" height="4.30" fill="#848484"/>
<rect x="483.13" y="541.01" width="4.30" height="4.30" fill="#121212"/>
<rect x="487.38" y="541.01" width="4.30" height="4.30" fill="#181818"/>
<rect x="491.63" y="541.01" width="42.58" height="4.30" fill="#222222"/>
<rect x="534.16" y="541.01" width="4.30" height="4.30" fill="#181818"/>
<rect x="538.42" y="541.01" width="4.30" height="4.30" fill="#121212"/>
<rect x="542.67" y="541.01" width="4.30" height="4.30" fill="#e4e4e4"/>
<rect x="546.92" y="541.01" width="4.30" height="4.30" fill="#d9d9d9"/>
<rect x="466.12" y="545.26" width="4.30" height="4.30" fill="#d9d9d9"/>
<rect x="470.37" y="545.26" width="4.30" height="4.30" fill="#e4e4e4"/>
<rect x="474.62" y="545.26" width="8.56" height="4.30" fill="#121212"/>
<rect x="483.13" y="545.26" width="4.30" height="4.30" fill="#181818"/>
<rect x="487.38" y="545.26" width="46.83" height="4.30" fill="#222222"/>
<rect x="534.16" y="545.26" width="4.30" height="4.30" fill="#212121"/>
<rect x="538.42" y="545.26" width="4.30" height="4.30" fill="#121212"/>
<rect x="542.67" y="545.26" width="4.30" height="4.30" fill="#e4e4e4"/>
<rect x="546.92" y="545.26" width="4.30" height="4.30" fill="#d9d9d9"/>
<rect x="466.12" y="549.51" width="4.30" height="4.30" fill="#d9d9d9"/>
<rect x="470.37" y="549.51" width="4.30" height="4.30" fill="#e4e4e4"/>
<rect x="474.62" y="549.51" width="4.30" height="4.30" fill="#121212"/>
<rect x="478.88" y="549.51" width="4.30" height="4.30" fill="#212121"/>
<rect x="483.13" y="549.51" width="51.08" height="4.30" fill="#222222"/>
<rect x="534.16" y="549.51" width="4.30" height="4.30" fill="#212121"/>
<rect x="538.42" y="549.51" width="4.30" height="4.30" fill="#121212"/>
<rect x="542.67" y="549.51" width="4.30" height="4.30" fill="#e4e4e4"/>
<rect x="546.92" y="549.51" width="4.30" height="4.30" fill="#d9d9d9"/>
<rect x="466.12" y="553.76" width="4.30" height="4.30" fill="#d9d9d9"/>
<rect x="470.37" y="553.76" width="4.30" height="4.30" fill="#e4e4e4"/>
<rect x="474.62" y="553.76" width="4.30" height="4.30" fill="#121212"/>
<rect x="478.88" y="553.76" width="4.30" height="4.30" fill="#212121"/>
<rect x="483.13" y="553.76" width="51.08" height="4.30" fill="#222222"/>
<rect x="534.16" y="553.76" width="4.30" height="4.30" fill="#212121"/>
<rect x="538.42" y="553.76" width="4.30" height="4.30" fill="#121212"/>
<rect x="542.67" y="553.76" width="4.30" height="4.30" fill="#e4e4e4"/>
<rect x="546.92" y="553.76" width="4.30" height="4.30" fill="#d9d9d9"/>
<rect x="466.12" y="558.02" width="4.30" height="4.30" fill="#d9d9d9"/>
<rect x="470.37" y="558.02" width="4.30" height="4.30" fill="#e4e4e4"/>
<rect x="474.62" y="558.02" width="4.30" height="4.30" fill="#121212"/>
<rect x="478.88" y="558.02" width="4.30" height="4.30" fill="#212121"/>
<rect x="483.13" y="558.02" width="51.08" height="4.30" fill="#222222"/>
<rect x="534.16" y="558.02" width="4.30" height="4.30" fill="#212121"/>
<rect x="538.42" y="558.02" width="4.30" height="4.30" fill="#121212"/>
<rect x="542.67" y="558.02" width="4.30" height="4.30" fill="#e4e4e4"/>
<rect x="546.92" y="558.02" width="4.30" height="4.30" fill="#d9d9d9"/>
<rect x="466.12" y="562.27" width="4.30" height="4.30" fill="#d9d9d9"/>
<rect x="470.37" y="562.27" width="4.30" height="4.30" fill="#e4e4e4"/>
<rect x="474.62" y="562.27" width="4.30" height="4.30" fill="#121212"/>
<rect x="478.88" y="562.27" width="4.30" height="4.30" fill="#212121"/>
<rect x="483.13" y="562.27" width="51.08" height="4.30" fill="#222222"/>
<rect x="534.16" y="562.27" width="4.30" height="4.30" fill="#212121"/>
<rect x="538.42" y="562.27" width="4.30" height="4.30" fill="#121212"/>
<rect x="542.67" y="562.27" width="4.30" height="4.30" fill="#e4e4e4"/>
<rect x="546.92" y="562.27" width="4.30" height="4.30" fill="#d9d9d9"/>
<rect x="466.12" y="566.52" width="4.30" height="4.30" fill="#d9d9d9"/>
<rect x="470.37" y="566.52" width="4.30" height="4.30" fill="#e4e4e4"/>
<rect x="474.62" y="566.52" width="8.56" height="4.30" fill="#121212"/>
<rect x="483.13" y="566.52" width="4.30" height="4.30" fill="#181818"/>
<rect x="487.38" y="566.52" width="4.30" height="4.30" fill="#212121"/>
<rect x="491.63" y="566.52" width="42.58" height="4.30" fill="#222222"/>
<rect x="534.16" y="566.52" width="4.30" height="4.30" fill="#181818"/>
<rect x="538.42" y="566.52" width="4.30" height="4.30" fill="#121212"/>
<rect x="542.67" y="566.52" width="4.30" height="4.30" fill="#e4e4e4"/>
<rect x="546.92" y="566.52" width="4.30" height="4.30" fill="#d9d9d9"/>
<rect x="466.12" y="570.78" width="4.30" height="4.30" fill="#d7d7d7"/>
<rect x="470.37" y="570.78" width="4.30" height="4.30" fill="#ebebeb"/>
<rect x="474.62" y="570.78" width="4.30" height="4.30" fill="#e4e4e4"/>
<rect x="478.88" y="570.78" width="4.30" height="4.30" fill="#848484"/>
<rect x="483.13" y="570.78" width="8.56" height="4.30" fill="#121212"/>
<rect x="491.63" y="570.78" width="4.30" height="4.30" fill="#181818"/>
<rect x="495.89" y="570.78" width="34.07" height="4.30" fill="#222222"/>
<rect x="529.91" y="570.78" width="4.30" height="4.30" fill="#181818"/>
<rect x="534.16" y="570.78" width="4.30" height="4.30" fill="#121212"/>
<rect x="538.42" y="570.78" width="4.30" height="4.30" fill="#848484"/>
<rect x="542.67" y="570.78" width="4.30" height="4.30" fill="#ebebeb"/>
<rect x="546.92" y="570.78" width="4.30" height="4.30" fill="#d7d7d7"/>
<rect x="470.37" y="575.03" width="4.30" height="4.30" fill="#d7d7d7"/>
<rect x="474.62" y="575.03" width="4.30" height="4.30" fill="#d9d9d9"/>
<rect x="478.88" y="575.03" width="4.30" height="4.30" fill="#ebebeb"/>
<rect x="483.13" y="575.03" width="4.30" height="4.30" fill="#e4e4e4"/>
<rect x="487.38" y="575.03" width="4.30" height="4.30" fill="#848484"/>
<rect x="491.63" y="575.03" width="4.30" height="4.30" fill="#121212"/>
<rect x="495.89" y="575.03" width="8.56" height="4.30" fill="#212121"/>
<rect x="504.39" y="575.03" width="21.31" height="4.30" fill="#222222"/>
<rect x="525.66" y="575.03" width="4.30" height="4.30" fill="#212121"/>
<rect x="529.91" y="575.03" width="4.30" height="4.30" fill="#121212"/>
<rect x="534.16" y="575.03" width="4.30" height="4.30" fill="#848484"/>
<rect x="538.42" y="575.03" width="4.30" height="4.30" fill="#ebebeb"/>
<rect x="542.67" y="575.03" width="4.30" height="4.30" fill="#d7d7d7"/>
<rect x="478.88" y="579.28" width="4.30" height="4.30" fill="#d7d7d7"/>
<rect x="483.13" y="579.28" width="4.30" height="4.30" fill="#d9d9d9"/>
<rect x="487.38" y="579.28" width="4.30" height="4.30" fill="#e4e4e4"/>
<rect x="491.63" y="579.28" width="12.81" height="4.30" fill="#121212"/>
<rect x="504.39" y="579.28" width="4.30" height="4.30" fill="#181818"/>
<rect x="508.65" y="579.28" width="12.81" height="4.30" fill="#222222"/>
<rect x="521.40" y="579.28" width="4.30" height="4.30" fill="#181818"/>
<rect x="525.66" y="579.28" width="8.56" height="4.30" fill="#121212"/>
<rect x="534.16" y="579.28" width="4.30" height="4.30" fill="#e4e4e4"/>
<rect x="538.42" y="579.28" width="4.30" height="4.30" fill="#d9d9d9"/>
<rect x="483.13" y="583.53" width="4.30" height="4.30" fill="#d7d7d7"/>
<rect x="487.38" y="583.53" width="4.30" height="4.30" fill="#ebebeb"/>
<rect x="491.63" y="583.53" width="8.56" height="4.30" fill="#e4e4e4"/>
<rect x="500.14" y="583.53" width="4.30" height="4.30" fill="#848484"/>
<rect x="504.39" y="583.53" width="4.30" height="4.30" fill="#121212"/>
<rect x="508.65" y="583.53" width="12.81" height="4.30" fill="#212121"/>
<rect x="521.40" y="583.53" width="4.30" height="4.30" fill="#121212"/>
<rect x="525.66" y="583.53" width="4.30" height="4.30" fill="#848484"/>
<rect x="529.91" y="583.53" width="4.30" height="4.30" fill="#e4e4e4"/>
<rect x="534.16" y="583.53" width="4.30" height="4.30" fill="#ebebeb"/>
<rect x="538.42" y="583.53" width="4.30" height="4.30" fill="#d7d7d7"/>
<rect x="487.38" y="587.79" width="4.30" height="4.30" fill="#d7d7d7"/>
<rect x="491.63" y="587.79" width="8.56" height="4.30" fill="#d9d9d9"/>
<rect x="500.14" y="587.79" width="4.30" height="4.30" fill="#e4e4e4"/>
<rect x="504.39" y="587.79" width="21.31" height="4.30" fill="#121212"/>
<rect x="525.66" y="587.79" width="4.30" height="4.30" fill="#e4e4e4"/>
<rect x="529.91" y="587.79" width="4.30" height="4.30" fill="#d9d9d9"/>
<rect x="534.16" y="587.79" width="4.30" height="4.30" fill="#d7d7d7"/>
<rect x="495.89" y="592.04" width="4.30" height="4.30" fill="#d7d7d7"/>
<rect x="500.14" y="592.04" width="4.30" height="4.30" fill="#ebebeb"/>
<rect x="504.39" y="592.04" width="21.31" height="4.30" fill="#e4e4e4"/>
<rect x="525.66" y="592.04" width="4.30" height="4.30" fill="#ebebeb"/>
<rect x="529.91" y="592.04" width="4.30" height="4.30" fill="#d7d7d7"/>
<rect x="500.14" y="596.29" width="4.30" height="4.30" fill="#d7d7d7"/>
<rect x="504.39" y="596.29" width="21.31" height="4.30" fill="#d9d9d9"/>
<rect x="525.66" y="596.29" width="4.30" height="4.30" fill="#d7d7d7"/>
</g>
<g clip-path="url(#pc2)"><ellipse cx="509.3" cy="557.8" rx="54.0" ry="46.3" transform="rotate(-8 509.3 557.8)" fill="none" stroke="#ffd700" stroke-width="1.2"/></g>
<rect x="466.00" y="557.80" width="97.2" height="97.2" fill="none" stroke="#ff0000" stroke-width="1.3"/>
<path d="M477.80 606.4H507.00M522.20 606.4H551.40M514.60 569.60V598.80M514.60 614.00V643.20" stroke="#ff0000" stroke-width="1.3" fill="none"/>
<text x="514.60" y="546.90" class="s" font-size="10.2" text-anchor="middle" fill="#ff0000">N</text>
<text x="451.00" y="610.30" class="s" font-size="10.2" text-anchor="middle" fill="#ff0000">E</text>
<rect x="440.6" y="532.5" width="148.0" height="147.80" fill="none" stroke="#222" stroke-width="1"/>
<line x1="449.80" y1="680.3" x2="449.80" y2="684.00" stroke="#222" stroke-width="0.9"/>
<text x="449.80" y="695.80" class="s" font-size="10.5" text-anchor="middle" fill="#111">−4</text>
<line x1="436.90" y1="671.20" x2="440.6" y2="671.20" stroke="#222" stroke-width="0.9"/>
<text x="433.20" y="675.00" class="s" font-size="10.5" text-anchor="end" fill="#111">−4</text>
<line x1="482.20" y1="680.3" x2="482.20" y2="684.00" stroke="#222" stroke-width="0.9"/>
<text x="482.20" y="695.80" class="s" font-size="10.5" text-anchor="middle" fill="#111">−2</text>
<line x1="436.90" y1="638.80" x2="440.6" y2="638.80" stroke="#222" stroke-width="0.9"/>
<text x="433.20" y="642.60" class="s" font-size="10.5" text-anchor="end" fill="#111">−2</text>
<line x1="514.60" y1="680.3" x2="514.60" y2="684.00" stroke="#222" stroke-width="0.9"/>
<text x="514.60" y="695.80" class="s" font-size="10.5" text-anchor="middle" fill="#111">0</text>
<line x1="436.90" y1="606.40" x2="440.6" y2="606.40" stroke="#222" stroke-width="0.9"/>
<text x="433.20" y="610.20" class="s" font-size="10.5" text-anchor="end" fill="#111">0</text>
<line x1="547.00" y1="680.3" x2="547.00" y2="684.00" stroke="#222" stroke-width="0.9"/>
<text x="547.00" y="695.80" class="s" font-size="10.5" text-anchor="middle" fill="#111">2</text>
<line x1="436.90" y1="574.00" x2="440.6" y2="574.00" stroke="#222" stroke-width="0.9"/>
<text x="433.20" y="577.80" class="s" font-size="10.5" text-anchor="end" fill="#111">2</text>
<line x1="579.40" y1="680.3" x2="579.40" y2="684.00" stroke="#222" stroke-width="0.9"/>
<text x="579.40" y="695.80" class="s" font-size="10.5" text-anchor="middle" fill="#111">4</text>
<line x1="436.90" y1="541.60" x2="440.6" y2="541.60" stroke="#222" stroke-width="0.9"/>
<text x="433.20" y="545.40" class="s" font-size="10.5" text-anchor="end" fill="#111">4</text>
<text x="514.60" y="706.30" class="s" font-size="10.7" text-anchor="middle" fill="#111">m:14.3  re:3.0"  s:2.9"</text>
<text x="514.60" y="718.60" class="s" font-size="10.7" text-anchor="middle" fill="#111">EWr: 0, PLAE: 0.001</text>
</g>
<g id="decals3">
<rect x="625.8" y="532.5" width="148.0" height="147.80" fill="#d3d3d3"/>
<g shape-rendering="crispEdges">
<rect x="655.57" y="532.50" width="4.30" height="4.30" fill="#d7d7d7"/>
<rect x="659.82" y="532.50" width="4.30" height="4.30" fill="#ebebeb"/>
<rect x="664.08" y="532.50" width="4.30" height="4.30" fill="#e4e4e4"/>
<rect x="668.33" y="532.50" width="4.30" height="4.30" fill="#848484"/>
<rect x="672.58" y="532.50" width="4.30" height="4.30" fill="#121212"/>
<rect x="676.83" y="532.50" width="4.30" height="4.30" fill="#212121"/>
<rect x="681.09" y="532.50" width="34.07" height="4.30" fill="#222222"/>
<rect x="715.11" y="532.50" width="4.30" height="4.30" fill="#212121"/>
<rect x="719.36" y="532.50" width="4.30" height="4.30" fill="#121212"/>
<rect x="723.62" y="532.50" width="4.30" height="4.30" fill="#848484"/>
<rect x="727.87" y="532.50" width="4.30" height="4.30" fill="#ebebeb"/>
<rect x="732.12" y="532.50" width="4.30" height="4.30" fill="#d7d7d7"/>
<rect x="651.32" y="536.75" width="4.30" height="4.30" fill="#d7d7d7"/>
<rect x="655.57" y="536.75" width="4.30" height="4.30" fill="#d9d9d9"/>
<rect x="659.82" y="536.75" width="4.30" height="4.30" fill="#e4e4e4"/>
<rect x="664.08" y="536.75" width="8.56" height="4.30" fill="#121212"/>
<rect x="672.58" y="536.75" width="4.30" height="4.30" fill="#181818"/>
<rect x="676.83" y="536.75" width="42.58" height="4.30" fill="#222222"/>
<rect x="719.36" y="536.75" width="4.30" height="4.30" fill="#181818"/>
<rect x="723.62" y="536.75" width="4.30" height="4.30" fill="#121212"/>
<rect x="727.87" y="536.75" width="4.30" height="4.30" fill="#848484"/>
<rect x="732.12" y="536.75" width="4.30" height="4.30" fill="#ebebeb"/>
<rect x="736.37" y="536.75" width="4.30" height="4.30" fill="#d7d7d7"/>
<rect x="647.06" y="541.01" width="4.30" height="4.30" fill="#d7d7d7"/>
<rect x="651.32" y="541.01" width="4.30" height="4.30" fill="#ebebeb"/>
<rect x="655.57" y="541.01" width="4.30" height="4.30" fill="#e4e4e4"/>
<rect x="659.82" y="541.01" width="4.30" height="4.30" fill="#848484"/>
<rect x="664.08" y="541.01" width="4.30" height="4.30" fill="#121212"/>
<rect x="668.33" y="541.01" width="4.30" height="4.30" fill="#212121"/>
<rect x="672.58" y="541.01" width="51.08" height="4.30" fill="#222222"/>
<rect x="723.62" y="541.01" width="4.30" height="4.30" fill="#181818"/>
<rect x="727.87" y="541.01" width="4.30" height="4.30" fill="#121212"/>
<rect x="732.12" y="541.01" width="4.30" height="4.30" fill="#848484"/>
<rect x="736.37" y="541.01" width="4.30" height="4.30" fill="#ebebeb"/>
<rect x="740.63" y="541.01" width="4.30" height="4.30" fill="#d7d7d7"/>
<rect x="647.06" y="545.26" width="4.30" height="4.30" fill="#d9d9d9"/>
<rect x="651.32" y="545.26" width="4.30" height="4.30" fill="#e4e4e4"/>
<rect x="655.57" y="545.26" width="8.56" height="4.30" fill="#121212"/>
<rect x="664.08" y="545.26" width="4.30" height="4.30" fill="#181818"/>
<rect x="668.33" y="545.26" width="59.59" height="4.30" fill="#222222"/>
<rect x="727.87" y="545.26" width="4.30" height="4.30" fill="#181818"/>
<rect x="732.12" y="545.26" width="4.30" height="4.30" fill="#121212"/>
<rect x="736.37" y="545.26" width="4.30" height="4.30" fill="#e4e4e4"/>
<rect x="740.63" y="545.26" width="4.30" height="4.30" fill="#d9d9d9"/>
<rect x="647.06" y="549.51" width="4.30" height="4.30" fill="#d9d9d9"/>
<rect x="651.32" y="549.51" width="4.30" height="4.30" fill="#e4e4e4"/>
<rect x="655.57" y="549.51" width="4.30" height="4.30" fill="#121212"/>
<rect x="659.82" y="549.51" width="4.30" height="4.30" fill="#212121"/>
<rect x="664.08" y="549.51" width="63.84" height="4.30" fill="#222222"/>
<rect x="727.87" y="549.51" width="4.30" height="4.30" fill="#212121"/>
<rect x="732.12" y="549.51" width="4.30" height="4.30" fill="#121212"/>
<rect x="736.37" y="549.51" width="4.30" height="4.30" fill="#e4e4e4"/>
<rect x="740.63" y="549.51" width="4.30" height="4.30" fill="#d9d9d9"/>
<rect x="647.06" y="553.76" width="4.30" height="4.30" fill="#d9d9d9"/>
<rect x="651.32" y="553.76" width="4.30" height="4.30" fill="#e4e4e4"/>
<rect x="655.57" y="553.76" width="8.56" height="4.30" fill="#121212"/>
<rect x="664.08" y="553.76" width="4.30" height="4.30" fill="#181818"/>
<rect x="668.33" y="553.76" width="59.59" height="4.30" fill="#222222"/>
<rect x="727.87" y="553.76" width="4.30" height="4.30" fill="#181818"/>
<rect x="732.12" y="553.76" width="4.30" height="4.30" fill="#121212"/>
<rect x="736.37" y="553.76" width="4.30" height="4.30" fill="#e4e4e4"/>
<rect x="740.63" y="553.76" width="4.30" height="4.30" fill="#d9d9d9"/>
<rect x="647.06" y="558.02" width="4.30" height="4.30" fill="#d7d7d7"/>
<rect x="651.32" y="558.02" width="4.30" height="4.30" fill="#ebebeb"/>
<rect x="655.57" y="558.02" width="4.30" height="4.30" fill="#e4e4e4"/>
<rect x="659.82" y="558.02" width="4.30" height="4.30" fill="#848484"/>
<rect x="664.08" y="558.02" width="4.30" height="4.30" fill="#121212"/>
<rect x="668.33" y="558.02" width="4.30" height="4.30" fill="#212121"/>
<rect x="672.58" y="558.02" width="51.08" height="4.30" fill="#222222"/>
<rect x="723.62" y="558.02" width="4.30" height="4.30" fill="#212121"/>
<rect x="727.87" y="558.02" width="4.30" height="4.30" fill="#121212"/>
<rect x="732.12" y="558.02" width="4.30" height="4.30" fill="#848484"/>
<rect x="736.37" y="558.02" width="4.30" height="4.30" fill="#ebebeb"/>
<rect x="740.63" y="558.02" width="4.30" height="4.30" fill="#d7d7d7"/>
<rect x="651.32" y="562.27" width="4.30" height="4.30" fill="#d7d7d7"/>
<rect x="655.57" y="562.27" width="4.30" height="4.30" fill="#d9d9d9"/>
<rect x="659.82" y="562.27" width="4.30" height="4.30" fill="#e4e4e4"/>
<rect x="664.08" y="562.27" width="8.56" height="4.30" fill="#121212"/>
<rect x="672.58" y="562.27" width="4.30" height="4.30" fill="#181818"/>
<rect x="676.83" y="562.27" width="42.58" height="4.30" fill="#222222"/>
<rect x="719.36" y="562.27" width="4.30" height="4.30" fill="#181818"/>
<rect x="723.62" y="562.27" width="8.56" height="4.30" fill="#121212"/>
<rect x="732.12" y="562.27" width="4.30" height="4.30" fill="#e4e4e4"/>
<rect x="736.37" y="562.27" width="4.30" height="4.30" fill="#d9d9d9"/>
<rect x="655.57" y="566.52" width="4.30" height="4.30" fill="#d7d7d7"/>
<rect x="659.82" y="566.52" width="4.30" height="4.30" fill="#ebebeb"/>
<rect x="664.08" y="566.52" width="4.30" height="4.30" fill="#e4e4e4"/>
<rect x="668.33" y="566.52" width="4.30" height="4.30" fill="#848484"/>
<rect x="672.58" y="566.52" width="4.30" height="4.30" fill="#121212"/>
<rect x="676.83" y="566.52" width="8.56" height="4.30" fill="#212121"/>
<rect x="685.34" y="566.52" width="29.82" height="4.30" fill="#222222"/>
<rect x="715.11" y="566.52" width="4.30" height="4.30" fill="#212121"/>
<rect x="719.36" y="566.52" width="4.30" height="4.30" fill="#121212"/>
<rect x="723.62" y="566.52" width="4.30" height="4.30" fill="#848484"/>
<rect x="727.87" y="566.52" width="4.30" height="4.30" fill="#e4e4e4"/>
<rect x="732.12" y="566.52" width="4.30" height="4.30" fill="#ebebeb"/>
<rect x="736.37" y="566.52" width="4.30" height="4.30" fill="#d7d7d7"/>
<rect x="659.82" y="570.78" width="4.30" height="4.30" fill="#d7d7d7"/>
<rect x="664.08" y="570.78" width="4.30" height="4.30" fill="#d9d9d9"/>
<rect x="668.33" y="570.78" width="4.30" height="4.30" fill="#e4e4e4"/>
<rect x="672.58" y="570.78" width="12.81" height="4.30" fill="#121212"/>
<rect x="685.34" y="570.78" width="4.30" height="4.30" fill="#181818"/>
<rect x="689.59" y="570.78" width="21.31" height="4.30" fill="#222222"/>
<rect x="710.86" y="570.78" width="4.30" height="4.30" fill="#181818"/>
<rect x="715.11" y="570.78" width="8.56" height="4.30" fill="#121212"/>
<rect x="723.62" y="570.78" width="4.30" height="4.30" fill="#e4e4e4"/>
<rect x="727.87" y="570.78" width="4.30" height="4.30" fill="#d9d9d9"/>
<rect x="732.12" y="570.78" width="4.30" height="4.30" fill="#d7d7d7"/>
<rect x="664.08" y="575.03" width="4.30" height="4.30" fill="#d7d7d7"/>
<rect x="668.33" y="575.03" width="4.30" height="4.30" fill="#ebebeb"/>
<rect x="672.58" y="575.03" width="8.56" height="4.30" fill="#e4e4e4"/>
<rect x="681.09" y="575.03" width="4.30" height="4.30" fill="#848484"/>
<rect x="685.34" y="575.03" width="4.30" height="4.30" fill="#121212"/>
<rect x="689.59" y="575.03" width="4.30" height="4.30" fill="#212121"/>
<rect x="693.85" y="575.03" width="12.81" height="4.30" fill="#222222"/>
<rect x="706.60" y="575.03" width="4.30" height="4.30" fill="#212121"/>
<rect x="710.86" y="575.03" width="4.30" height="4.30" fill="#121212"/>
<rect x="715.11" y="575.03" width="4.30" height="4.30" fill="#848484"/>
<rect x="719.36" y="575.03" width="4.30" height="4.30" fill="#e4e4e4"/>
<rect x="723.62" y="575.03" width="4.30" height="4.30" fill="#ebebeb"/>
<rect x="727.87" y="575.03" width="4.30" height="4.30" fill="#d7d7d7"/>
<rect x="668.33" y="579.28" width="4.30" height="4.30" fill="#d7d7d7"/>
<rect x="672.58" y="579.28" width="8.56" height="4.30" fill="#d9d9d9"/>
<rect x="681.09" y="579.28" width="4.30" height="4.30" fill="#e4e4e4"/>
<rect x="685.34" y="579.28" width="8.56" height="4.30" fill="#121212"/>
<rect x="693.85" y="579.28" width="4.30" height="4.30" fill="#181818"/>
<rect x="698.10" y="579.28" width="8.56" height="4.30" fill="#222222"/>
<rect x="706.60" y="579.28" width="4.30" height="4.30" fill="#181818"/>
<rect x="710.86" y="579.28" width="4.30" height="4.30" fill="#121212"/>
<rect x="715.11" y="579.28" width="4.30" height="4.30" fill="#e4e4e4"/>
<rect x="719.36" y="579.28" width="4.30" height="4.30" fill="#d9d9d9"/>
<rect x="723.62" y="579.28" width="4.30" height="4.30" fill="#d7d7d7"/>
<rect x="676.83" y="583.53" width="4.30" height="4.30" fill="#d7d7d7"/>
<rect x="681.09" y="583.53" width="4.30" height="4.30" fill="#ebebeb"/>
<rect x="685.34" y="583.53" width="4.30" height="4.30" fill="#e4e4e4"/>
<rect x="689.59" y="583.53" width="4.30" height="4.30" fill="#848484"/>
<rect x="693.85" y="583.53" width="4.30" height="4.30" fill="#121212"/>
<rect x="698.10" y="583.53" width="8.56" height="4.30" fill="#212121"/>
<rect x="706.60" y="583.53" width="4.30" height="4.30" fill="#121212"/>
<rect x="710.86" y="583.53" width="4.30" height="4.30" fill="#848484"/>
<rect x="715.11" y="583.53" width="4.30" height="4.30" fill="#ebebeb"/>
<rect x="719.36" y="583.53" width="4.30" height="4.30" fill="#d7d7d7"/>
<rect x="681.09" y="587.79" width="4.30" height="4.30" fill="#d7d7d7"/>
<rect x="685.34" y="587.79" width="4.30" height="4.30" fill="#d9d9d9"/>
<rect x="689.59" y="587.79" width="4.30" height="4.30" fill="#e4e4e4"/>
<rect x="693.85" y="587.79" width="17.06" height="4.30" fill="#121212"/>
<rect x="710.86" y="587.79" width="4.30" height="4.30" fill="#e4e4e4"/>
<rect x="715.11" y="587.79" width="4.30" height="4.30" fill="#d9d9d9"/>
<rect x="685.34" y="592.04" width="4.30" height="4.30" fill="#d7d7d7"/>
<rect x="689.59" y="592.04" width="4.30" height="4.30" fill="#ebebeb"/>
<rect x="693.85" y="592.04" width="17.06" height="4.30" fill="#e4e4e4"/>
<rect x="710.86" y="592.04" width="4.30" height="4.30" fill="#ebebeb"/>
<rect x="715.11" y="592.04" width="4.30" height="4.30" fill="#d7d7d7"/>
<rect x="689.59" y="596.29" width="4.30" height="4.30" fill="#d7d7d7"/>
<rect x="693.85" y="596.29" width="17.06" height="4.30" fill="#d9d9d9"/>
<rect x="710.86" y="596.29" width="4.30" height="4.30" fill="#d7d7d7"/>
</g>
<g clip-path="url(#pc3)"><ellipse cx="696.6" cy="554.0" rx="60.0" ry="47.6" transform="rotate(-6 696.6 554.0)" fill="none" stroke="#ffd700" stroke-width="1.2"/></g>
<rect x="651.20" y="557.80" width="97.2" height="97.2" fill="none" stroke="#ff0000" stroke-width="1.3"/>
<path d="M663.00 606.4H692.20M707.40 606.4H736.60M699.80 569.60V598.80M699.80 614.00V643.20" stroke="#ff0000" stroke-width="1.3" fill="none"/>
<text x="699.80" y="546.90" class="s" font-size="10.2" text-anchor="middle" fill="#ff0000">N</text>
<text x="636.20" y="610.30" class="s" font-size="10.2" text-anchor="middle" fill="#ff0000">E</text>
<rect x="625.8" y="532.5" width="148.0" height="147.80" fill="none" stroke="#222" stroke-width="1"/>
<line x1="635.00" y1="680.3" x2="635.00" y2="684.00" stroke="#222" stroke-width="0.9"/>
<text x="635.00" y="695.80" class="s" font-size="10.5" text-anchor="middle" fill="#111">−4</text>
<line x1="622.10" y1="671.20" x2="625.8" y2="671.20" stroke="#222" stroke-width="0.9"/>
<text x="618.40" y="675.00" class="s" font-size="10.5" text-anchor="end" fill="#111">−4</text>
<line x1="667.40" y1="680.3" x2="667.40" y2="684.00" stroke="#222" stroke-width="0.9"/>
<text x="667.40" y="695.80" class="s" font-size="10.5" text-anchor="middle" fill="#111">−2</text>
<line x1="622.10" y1="638.80" x2="625.8" y2="638.80" stroke="#222" stroke-width="0.9"/>
<text x="618.40" y="642.60" class="s" font-size="10.5" text-anchor="end" fill="#111">−2</text>
<line x1="699.80" y1="680.3" x2="699.80" y2="684.00" stroke="#222" stroke-width="0.9"/>
<text x="699.80" y="695.80" class="s" font-size="10.5" text-anchor="middle" fill="#111">0</text>
<line x1="622.10" y1="606.40" x2="625.8" y2="606.40" stroke="#222" stroke-width="0.9"/>
<text x="618.40" y="610.20" class="s" font-size="10.5" text-anchor="end" fill="#111">0</text>
<line x1="732.20" y1="680.3" x2="732.20" y2="684.00" stroke="#222" stroke-width="0.9"/>
<text x="732.20" y="695.80" class="s" font-size="10.5" text-anchor="middle" fill="#111">2</text>
<line x1="622.10" y1="574.00" x2="625.8" y2="574.00" stroke="#222" stroke-width="0.9"/>
<text x="618.40" y="577.80" class="s" font-size="10.5" text-anchor="end" fill="#111">2</text>
<line x1="764.60" y1="680.3" x2="764.60" y2="684.00" stroke="#222" stroke-width="0.9"/>
<text x="764.60" y="695.80" class="s" font-size="10.5" text-anchor="middle" fill="#111">4</text>
<line x1="622.10" y1="541.60" x2="625.8" y2="541.60" stroke="#222" stroke-width="0.9"/>
<text x="618.40" y="545.40" class="s" font-size="10.5" text-anchor="end" fill="#111">4</text>
<text x="699.80" y="706.30" class="s" font-size="10.7" text-anchor="middle" fill="#111">m:14.3  re:3.2"  s:3.1"</text>
<text x="699.80" y="718.60" class="s" font-size="10.7" text-anchor="middle" fill="#111">EWr: 0, PLAE: 0.001</text>
</g>
<g id="decals4">
<rect x="811.0" y="532.5" width="148.0" height="147.80" fill="#8f8f8f"/>
<g shape-rendering="crispEdges">
<rect x="811.00" y="532.50" width="4.30" height="4.30" fill="#989898"/>
<rect x="819.51" y="532.50" width="4.30" height="4.30" fill="#808080"/>
<rect x="823.76" y="532.50" width="8.56" height="4.30" fill="#7c7c7c"/>
<rect x="832.26" y="532.50" width="4.30" height="4.30" fill="#888888"/>
<rect x="836.52" y="532.50" width="4.30" height="4.30" fill="#747474"/>
<rect x="840.77" y="532.50" width="4.30" height="4.30" fill="#707070"/>
<rect x="845.02" y="532.50" width="4.30" height="4.30" fill="#000000"/>
<rect x="849.28" y="532.50" width="4.30" height="4.30" fill="#ffffff"/>
<rect x="853.53" y="532.50" width="55.34" height="4.30" fill="#000000"/>
<rect x="908.82" y="532.50" width="4.30" height="4.30" fill="#ffffff"/>
<rect x="913.07" y="532.50" width="8.56" height="4.30" fill="#000000"/>
<rect x="921.57" y="532.50" width="4.30" height="4.30" fill="#808080"/>
<rect x="925.83" y="532.50" width="4.30" height="4.30" fill="#848484"/>
<rect x="930.08" y="532.50" width="12.81" height="4.30" fill="#888888"/>
<rect x="942.84" y="532.50" width="4.30" height="4.30" fill="#8c8c8c"/>
<rect x="947.09" y="532.50" width="4.30" height="4.30" fill="#848484"/>
<rect x="955.60" y="532.50" width="3.45" height="4.30" fill="#888888"/>
<rect x="811.00" y="536.75" width="4.30" height="4.30" fill="#949494"/>
<rect x="815.25" y="536.75" width="4.30" height="4.30" fill="#8c8c8c"/>
<rect x="823.76" y="536.75" width="4.30" height="4.30" fill="#808080"/>
<rect x="828.01" y="536.75" width="4.30" height="4.30" fill="#888888"/>
<rect x="832.26" y="536.75" width="4.30" height="4.30" fill="#848484"/>
<rect x="836.52" y="536.75" width="4.30" height="4.30" fill="#707070"/>
<rect x="840.77" y="536.75" width="4.30" height="4.30" fill="#686868"/>
<rect x="845.02" y="536.75" width="4.30" height="4.30" fill="#000000"/>
<rect x="849.28" y="536.75" width="4.30" height="4.30" fill="#ffffff"/>
<rect x="853.53" y="536.75" width="59.59" height="4.30" fill="#000000"/>
<rect x="913.07" y="536.75" width="4.30" height="4.30" fill="#ffffff"/>
<rect x="917.32" y="536.75" width="4.30" height="4.30" fill="#000000"/>
<rect x="921.57" y="536.75" width="4.30" height="4.30" fill="#787878"/>
<rect x="925.83" y="536.75" width="8.56" height="4.30" fill="#808080"/>
<rect x="942.84" y="536.75" width="4.30" height="4.30" fill="#888888"/>
<rect x="955.60" y="536.75" width="3.45" height="4.30" fill="#888888"/>
<rect x="811.00" y="541.01" width="12.81" height="4.30" fill="#949494"/>
<rect x="823.76" y="541.01" width="4.30" height="4.30" fill="#888888"/>
<rect x="828.01" y="541.01" width="4.30" height="4.30" fill="#949494"/>
<rect x="832.26" y="541.01" width="4.30" height="4.30" fill="#888888"/>
<rect x="836.52" y="541.01" width="4.30" height="4.30" fill="#787878"/>
<rect x="840.77" y="541.01" width="4.30" height="4.30" fill="#000000"/>
<rect x="845.02" y="541.01" width="4.30" height="4.30" fill="#ffffff"/>
<rect x="849.28" y="541.01" width="63.84" height="4.30" fill="#000000"/>
<rect x="913.07" y="541.01" width="4.30" height="4.30" fill="#ffffff"/>
<rect x="917.32" y="541.01" width="4.30" height="4.30" fill="#000000"/>
<rect x="921.57" y="541.01" width="4.30" height="4.30" fill="#7c7c7c"/>
<rect x="925.83" y="541.01" width="4.30" height="4.30" fill="#787878"/>
<rect x="930.08" y="541.01" width="4.30" height="4.30" fill="#848484"/>
<rect x="934.33" y="541.01" width="4.30" height="4.30" fill="#989898"/>
<rect x="938.59" y="541.01" width="4.30" height="4.30" fill="#8c8c8c"/>
<rect x="947.09" y="541.01" width="4.30" height="4.30" fill="#8c8c8c"/>
<rect x="951.34" y="541.01" width="4.30" height="4.30" fill="#808080"/>
<rect x="955.60" y="541.01" width="3.45" height="4.30" fill="#8c8c8c"/>
<rect x="819.51" y="545.26" width="4.30" height="4.30" fill="#949494"/>
<rect x="823.76" y="545.26" width="4.30" height="4.30" fill="#9c9c9c"/>
<rect x="828.01" y="545.26" width="4.30" height="4.30" fill="#949494"/>
<rect x="832.26" y="545.26" width="4.30" height="4.30" fill="#8c8c8c"/>
<rect x="836.52" y="545.26" width="4.30" height="4.30" fill="#787878"/>
<rect x="840.77" y="545.26" width="72.35" height="4.30" fill="#000000"/>
<rect x="913.07" y="545.26" width="4.30" height="4.30" fill="#ffffff"/>
<rect x="917.32" y="545.26" width="4.30" height="4.30" fill="#000000"/>
<rect x="921.57" y="545.26" width="4.30" height="4.30" fill="#707070"/>
<rect x="925.83" y="545.26" width="4.30" height="4.30" fill="#7c7c7c"/>
<rect x="930.08" y="545.26" width="4.30" height="4.30" fill="#888888"/>
<rect x="934.33" y="545.26" width="4.30" height="4.30" fill="#848484"/>
<rect x="938.59" y="545.26" width="4.30" height="4.30" fill="#949494"/>
<rect x="942.84" y="545.26" width="4.30" height="4.30" fill="#989898"/>
<rect x="947.09" y="545.26" width="4.30" height="4.30" fill="#8c8c8c"/>
<rect x="951.34" y="545.26" width="4.30" height="4.30" fill="#888888"/>
<rect x="811.00" y="549.51" width="4.30" height="4.30" fill="#848484"/>
<rect x="815.25" y="549.51" width="4.30" height="4.30" fill="#8c8c8c"/>
<rect x="819.51" y="549.51" width="4.30" height="4.30" fill="#989898"/>
<rect x="823.76" y="549.51" width="4.30" height="4.30" fill="#949494"/>
<rect x="828.01" y="549.51" width="8.56" height="4.30" fill="#808080"/>
<rect x="836.52" y="549.51" width="4.30" height="4.30" fill="#6c6c6c"/>
<rect x="840.77" y="549.51" width="4.30" height="4.30" fill="#000000"/>
<rect x="845.02" y="549.51" width="4.30" height="4.30" fill="#ffffff"/>
<rect x="849.28" y="549.51" width="72.35" height="4.30" fill="#000000"/>
<rect x="921.57" y="549.51" width="4.30" height="4.30" fill="#7c7c7c"/>
<rect x="925.83" y="549.51" width="4.30" height="4.30" fill="#8c8c8c"/>
<rect x="930.08" y="549.51" width="4.30" height="4.30" fill="#888888"/>
<rect x="934.33" y="549.51" width="4.30" height="4.30" fill="#8c8c8c"/>
<rect x="938.59" y="549.51" width="8.56" height="4.30" fill="#949494"/>
<rect x="951.34" y="549.51" width="7.71" height="4.30" fill="#888888"/>
<rect x="811.00" y="553.76" width="4.30" height="4.30" fill="#888888"/>
<rect x="815.25" y="553.76" width="4.30" height="4.30" fill="#949494"/>
<rect x="823.76" y="553.76" width="4.30" height="4.30" fill="#888888"/>
<rect x="828.01" y="553.76" width="4.30" height="4.30" fill="#7c7c7c"/>
<rect x="832.26" y="553.76" width="8.56" height="4.30" fill="#787878"/>
<rect x="840.77" y="553.76" width="4.30" height="4.30" fill="#000000"/>
<rect x="845.02" y="553.76" width="4.30" height="4.30" fill="#ffffff"/>
<rect x="849.28" y="553.76" width="63.84" height="4.30" fill="#000000"/>
<rect x="913.07" y="553.76" width="4.30" height="4.30" fill="#ffffff"/>
<rect x="917.32" y="553.76" width="4.30" height="4.30" fill="#000000"/>
<rect x="921.57" y="553.76" width="4.30" height="4.30" fill="#808080"/>
<rect x="925.83" y="553.76" width="4.30" height="4.30" fill="#848484"/>
<rect x="930.08" y="553.76" width="4.30" height="4.30" fill="#7c7c7c"/>
<rect x="938.59" y="553.76" width="8.56" height="4.30" fill="#888888"/>
<rect x="947.09" y="553.76" width="11.96" height="4.30" fill="#848484"/>
<rect x="811.00" y="558.02" width="4.30" height="4.30" fill="#8c8c8c"/>
<rect x="815.25" y="558.02" width="4.30" height="4.30" fill="#949494"/>
<rect x="819.51" y="558.02" width="4.30" height="4.30" fill="#989898"/>
<rect x="823.76" y="558.02" width="4.30" height="4.30" fill="#8c8c8c"/>
<rect x="828.01" y="558.02" width="4.30" height="4.30" fill="#808080"/>
<rect x="832.26" y="558.02" width="4.30" height="4.30" fill="#747474"/>
<rect x="836.52" y="558.02" width="4.30" height="4.30" fill="#7c7c7c"/>
<rect x="840.77" y="558.02" width="4.30" height="4.30" fill="#000000"/>
<rect x="845.02" y="558.02" width="4.30" height="4.30" fill="#ffffff"/>
<rect x="849.28" y="558.02" width="63.84" height="4.30" fill="#000000"/>
<rect x="913.07" y="558.02" width="4.30" height="4.30" fill="#ffffff"/>
<rect x="917.32" y="558.02" width="4.30" height="4.30" fill="#000000"/>
<rect x="921.57" y="558.02" width="8.56" height="4.30" fill="#747474"/>
<rect x="930.08" y="558.02" width="4.30" height="4.30" fill="#848484"/>
<rect x="934.33" y="558.02" width="4.30" height="4.30" fill="#949494"/>
<rect x="938.59" y="558.02" width="4.30" height="4.30" fill="#8c8c8c"/>
<rect x="942.84" y="558.02" width="4.30" height="4.30" fill="#949494"/>
<rect x="947.09" y="558.02" width="4.30" height="4.30" fill="#8c8c8c"/>
<rect x="951.34" y="558.02" width="4.30" height="4.30" fill="#888888"/>
<rect x="955.60" y="558.02" width="3.45" height="4.30" fill="#848484"/>
<rect x="811.00" y="562.27" width="4.30" height="4.30" fill="#848484"/>
<rect x="815.25" y="562.27" width="4.30" height="4.30" fill="#8c8c8c"/>
<rect x="823.76" y="562.27" width="4.30" height="4.30" fill="#888888"/>
<rect x="828.01" y="562.27" width="4.30" height="4.30" fill="#7c7c7c"/>
<rect x="832.26" y="562.27" width="4.30" height="4.30" fill="#848484"/>
<rect x="836.52" y="562.27" width="4.30" height="4.30" fill="#787878"/>
<rect x="840.77" y="562.27" width="4.30" height="4.30" fill="#6c6c6c"/>
<rect x="845.02" y="562.27" width="4.30" height="4.30" fill="#000000"/>
<rect x="849.28" y="562.27" width="4.30" height="4.30" fill="#ffffff"/>
<rect x="853.53" y="562.27" width="59.59" height="4.30" fill="#000000"/>
<rect x="913.07" y="562.27" width="4.30" height="4.30" fill="#ffffff"/>
<rect x="917.32" y="562.27" width="4.30" height="4.30" fill="#000000"/>
<rect x="921.57" y="562.27" width="8.56" height="4.30" fill="#7c7c7c"/>
<rect x="930.08" y="562.27" width="4.30" height="4.30" fill="#808080"/>
<rect x="934.33" y="562.27" width="4.30" height="4.30" fill="#888888"/>
<rect x="938.59" y="562.27" width="4.30" height="4.30" fill="#989898"/>
<rect x="947.09" y="562.27" width="8.56" height="4.30" fill="#888888"/>
<rect x="955.60" y="562.27" width="3.45" height="4.30" fill="#848484"/>
<rect x="811.00" y="566.52" width="8.56" height="4.30" fill="#888888"/>
<rect x="819.51" y="566.52" width="4.30" height="4.30" fill="#8c8c8c"/>
<rect x="823.76" y="566.52" width="4.30" height="4.30" fill="#888888"/>
<rect x="828.01" y="566.52" width="4.30" height="4.30" fill="#8c8c8c"/>
<rect x="832.26" y="566.52" width="4.30" height="4.30" fill="#888888"/>
<rect x="836.52" y="566.52" width="4.30" height="4.30" fill="#808080"/>
<rect x="840.77" y="566.52" width="4.30" height="4.30" fill="#747474"/>
<rect x="845.02" y="566.52" width="4.30" height="4.30" fill="#000000"/>
<rect x="849.28" y="566.52" width="4.30" height="4.30" fill="#ffffff"/>
<rect x="853.53" y="566.52" width="63.84" height="4.30" fill="#000000"/>
<rect x="917.32" y="566.52" width="4.30" height="4.30" fill="#707070"/>
<rect x="921.57" y="566.52" width="8.56" height="4.30" fill="#7c7c7c"/>
<rect x="930.08" y="566.52" width="4.30" height="4.30" fill="#848484"/>
<rect x="934.33" y="566.52" width="4.30" height="4.30" fill="#949494"/>
<rect x="942.84" y="566.52" width="4.30" height="4.30" fill="#888888"/>
<rect x="947.09" y="566.52" width="4.30" height="4.30" fill="#8c8c8c"/>
<rect x="951.34" y="566.52" width="4.30" height="4.30" fill="#848484"/>
<rect x="955.60" y="566.52" width="3.45" height="4.30" fill="#808080"/>
<rect x="811.00" y="570.78" width="4.30" height="4.30" fill="#888888"/>
<rect x="815.25" y="570.78" width="4.30" height="4.30" fill="#848484"/>
<rect x="819.51" y="570.78" width="4.30" height="4.30" fill="#888888"/>
<rect x="832.26" y="570.78" width="4.30" height="4.30" fill="#949494"/>
<rect x="836.52" y="570.78" width="4.30" height="4.30" fill="#808080"/>
<rect x="840.77" y="570.78" width="4.30" height="4.30" fill="#747474"/>
<rect x="845.02" y="570.78" width="4.30" height="4.30" fill="#686868"/>
<rect x="849.28" y="570.78" width="4.30" height="4.30" fill="#000000"/>
<rect x="853.53" y="570.78" width="4.30" height="4.30" fill="#ffffff"/>
<rect x="857.78" y="570.78" width="46.83" height="4.30" fill="#000000"/>
<rect x="904.56" y="570.78" width="8.56" height="4.30" fill="#ffffff"/>
<rect x="913.07" y="570.78" width="4.30" height="4.30" fill="#000000"/>
<rect x="917.32" y="570.78" width="8.56" height="4.30" fill="#787878"/>
<rect x="925.83" y="570.78" width="4.30" height="4.30" fill="#848484"/>
<rect x="930.08" y="570.78" width="4.30" height="4.30" fill="#888888"/>
<rect x="934.33" y="570.78" width="4.30" height="4.30" fill="#989898"/>
<rect x="938.59" y="570.78" width="4.30" height="4.30" fill="#8c8c8c"/>
<rect x="942.84" y="570.78" width="4.30" height="4.30" fill="#848484"/>
<rect x="947.09" y="570.78" width="4.30" height="4.30" fill="#8c8c8c"/>
<rect x="951.34" y="570.78" width="4.30" height="4.30" fill="#888888"/>
<rect x="955.60" y="570.78" width="3.45" height="4.30" fill="#848484"/>
<rect x="819.51" y="575.03" width="4.30" height="4.30" fill="#949494"/>
<rect x="832.26" y="575.03" width="4.30" height="4.30" fill="#888888"/>
<rect x="836.52" y="575.03" width="8.56" height="4.30" fill="#808080"/>
<rect x="845.02" y="575.03" width="4.30" height="4.30" fill="#6c6c6c"/>
<rect x="849.28" y="575.03" width="8.56" height="4.30" fill="#000000"/>
<rect x="857.78" y="575.03" width="4.30" height="4.30" fill="#ffffff"/>
<rect x="862.03" y="575.03" width="38.33" height="4.30" fill="#000000"/>
<rect x="900.31" y="575.03" width="8.56" height="4.30" fill="#ffffff"/>
<rect x="908.82" y="575.03" width="4.30" height="4.30" fill="#000000"/>
<rect x="913.07" y="575.03" width="4.30" height="4.30" fill="#787878"/>
<rect x="917.32" y="575.03" width="4.30" height="4.30" fill="#7c7c7c"/>
<rect x="925.83" y="575.03" width="4.30" height="4.30" fill="#848484"/>
<rect x="930.08" y="575.03" width="4.30" height="4.30" fill="#888888"/>
<rect x="934.33" y="575.03" width="4.30" height="4.30" fill="#949494"/>
<rect x="938.59" y="575.03" width="4.30" height="4.30" fill="#8c8c8c"/>
<rect x="942.84" y="575.03" width="4.30" height="4.30" fill="#949494"/>
<rect x="951.34" y="575.03" width="7.71" height="4.30" fill="#848484"/>
<rect x="811.00" y="579.28" width="8.56" height="4.30" fill="#8c8c8c"/>
<rect x="819.51" y="579.28" width="4.30" height="4.30" fill="#949494"/>
<rect x="823.76" y="579.28" width="4.30" height="4.30" fill="#8c8c8c"/>
<rect x="828.01" y="579.28" width="4.30" height="4.30" fill="#848484"/>
<rect x="832.26" y="579.28" width="4.30" height="4.30" fill="#8c8c8c"/>
<rect x="836.52" y="579.28" width="4.30" height="4.30" fill="#949494"/>
<rect x="840.77" y="579.28" width="8.56" height="4.30" fill="#7c7c7c"/>
<rect x="849.28" y="579.28" width="4.30" height="4.30" fill="#787878"/>
<rect x="853.53" y="579.28" width="8.56" height="4.30" fill="#000000"/>
<rect x="862.03" y="579.28" width="8.56" height="4.30" fill="#ffffff"/>
<rect x="870.54" y="579.28" width="21.31" height="4.30" fill="#000000"/>
<rect x="891.80" y="579.28" width="8.56" height="4.30" fill="#ffffff"/>
<rect x="900.31" y="579.28" width="8.56" height="4.30" fill="#000000"/>
<rect x="908.82" y="579.28" width="4.30" height="4.30" fill="#747474"/>
<rect x="913.07" y="579.28" width="4.30" height="4.30" fill="#7c7c7c"/>
<rect x="917.32" y="579.28" width="4.30" height="4.30" fill="#808080"/>
<rect x="921.57" y="579.28" width="4.30" height="4.30" fill="#848484"/>
<rect x="925.83" y="579.28" width="4.30" height="4.30" fill="#888888"/>
<rect x="934.33" y="579.28" width="12.81" height="4.30" fill="#8c8c8c"/>
<rect x="947.09" y="579.28" width="4.30" height="4.30" fill="#7c7c7c"/>
<rect x="951.34" y="579.28" width="4.30" height="4.30" fill="#808080"/>
<rect x="955.60" y="579.28" width="3.45" height="4.30" fill="#949494"/>
<rect x="811.00" y="583.53" width="4.30" height="4.30" fill="#808080"/>
<rect x="815.25" y="583.53" width="4.30" height="4.30" fill="#8c8c8c"/>
<rect x="819.51" y="583.53" width="4.30" height="4.30" fill="#848484"/>
<rect x="823.76" y="583.53" width="8.56" height="4.30" fill="#8c8c8c"/>
<rect x="832.26" y="583.53" width="4.30" height="4.30" fill="#949494"/>
<rect x="840.77" y="583.53" width="4.30" height="4.30" fill="#8c8c8c"/>
<rect x="845.02" y="583.53" width="4.30" height="4.30" fill="#808080"/>
<rect x="849.28" y="583.53" width="8.56" height="4.30" fill="#707070"/>
<rect x="857.78" y="583.53" width="4.30" height="4.30" fill="#686868"/>
<rect x="862.03" y="583.53" width="8.56" height="4.30" fill="#000000"/>
<rect x="870.54" y="583.53" width="12.81" height="4.30" fill="#ffffff"/>
<rect x="883.30" y="583.53" width="4.30" height="4.30" fill="#000000"/>
<rect x="887.55" y="583.53" width="4.30" height="4.30" fill="#ffffff"/>
<rect x="891.80" y="583.53" width="12.81" height="4.30" fill="#000000"/>
<rect x="904.56" y="583.53" width="4.30" height="4.30" fill="#707070"/>
<rect x="908.82" y="583.53" width="4.30" height="4.30" fill="#787878"/>
<rect x="913.07" y="583.53" width="4.30" height="4.30" fill="#7c7c7c"/>
<rect x="917.32" y="583.53" width="4.30" height="4.30" fill="#888888"/>
<rect x="925.83" y="583.53" width="4.30" height="4.30" fill="#949494"/>
<rect x="930.08" y="583.53" width="4.30" height="4.30" fill="#888888"/>
<rect x="934.33" y="583.53" width="4.30" height="4.30" fill="#8c8c8c"/>
<rect x="938.59" y="583.53" width="4.30" height="4.30" fill="#888888"/>
<rect x="942.84" y="583.53" width="4.30" height="4.30" fill="#949494"/>
<rect x="947.09" y="583.53" width="4.30" height="4.30" fill="#848484"/>
<rect x="951.34" y="583.53" width="4.30" height="4.30" fill="#949494"/>
<rect x="955.60" y="583.53" width="3.45" height="4.30" fill="#888888"/>
<rect x="815.25" y="587.79" width="4.30" height="4.30" fill="#949494"/>
<rect x="823.76" y="587.79" width="4.30" height="4.30" fill="#949494"/>
<rect x="828.01" y="587.79" width="4.30" height="4.30" fill="#8c8c8c"/>
<rect x="832.26" y="587.79" width="12.81" height="4.30" fill="#888888"/>
<rect x="845.02" y="587.79" width="4.30" height="4.30" fill="#848484"/>
<rect x="849.28" y="587.79" width="4.30" height="4.30" fill="#7c7c7c"/>
<rect x="853.53" y="587.79" width="12.81" height="4.30" fill="#707070"/>
<rect x="866.29" y="587.79" width="4.30" height="4.30" fill="#6c6c6c"/>
<rect x="870.54" y="587.79" width="25.57" height="4.30" fill="#000000"/>
<rect x="896.06" y="587.79" width="4.30" height="4.30" fill="#6c6c6c"/>
<rect x="900.31" y="587.79" width="4.30" height="4.30" fill="#808080"/>
<rect x="904.56" y="587.79" width="4.30" height="4.30" fill="#7c7c7c"/>
<rect x="908.82" y="587.79" width="4.30" height="4.30" fill="#787878"/>
<rect x="913.07" y="587.79" width="4.30" height="4.30" fill="#848484"/>
<rect x="917.32" y="587.79" width="12.81" height="4.30" fill="#8c8c8c"/>
<rect x="934.33" y="587.79" width="4.30" height="4.30" fill="#8c8c8c"/>
<rect x="942.84" y="587.79" width="4.30" height="4.30" fill="#989898"/>
<rect x="947.09" y="587.79" width="8.56" height="4.30" fill="#949494"/>
<rect x="955.60" y="587.79" width="3.45" height="4.30" fill="#848484"/>
<rect x="811.00" y="592.04" width="4.30" height="4.30" fill="#949494"/>
<rect x="815.25" y="592.04" width="4.30" height="4.30" fill="#989898"/>
<rect x="819.51" y="592.04" width="4.30" height="4.30" fill="#949494"/>
<rect x="823.76" y="592.04" width="4.30" height="4.30" fill="#989898"/>
<rect x="828.01" y="592.04" width="4.30" height="4.30" fill="#888888"/>
<rect x="832.26" y="592.04" width="12.81" height="4.30" fill="#8c8c8c"/>
<rect x="845.02" y="592.04" width="4.30" height="4.30" fill="#888888"/>
<rect x="849.28" y="592.04" width="4.30" height="4.30" fill="#808080"/>
<rect x="853.53" y="592.04" width="4.30" height="4.30" fill="#848484"/>
<rect x="857.78" y="592.04" width="4.30" height="4.30" fill="#808080"/>
<rect x="862.03" y="592.04" width="4.30" height="4.30" fill="#888888"/>
<rect x="866.29" y="592.04" width="4.30" height="4.30" fill="#787878"/>
<rect x="870.54" y="592.04" width="4.30" height="4.30" fill="#747474"/>
<rect x="874.79" y="592.04" width="4.30" height="4.30" fill="#7c7c7c"/>
<rect x="879.05" y="592.04" width="8.56" height="4.30" fill="#787878"/>
<rect x="887.55" y="592.04" width="4.30" height="4.30" fill="#6c6c6c"/>
<rect x="891.80" y="592.04" width="4.30" height="4.30" fill="#707070"/>
<rect x="896.06" y="592.04" width="4.30" height="4.30" fill="#848484"/>
<rect x="900.31" y="592.04" width="4.30" height="4.30" fill="#808080"/>
<rect x="904.56" y="592.04" width="8.56" height="4.30" fill="#7c7c7c"/>
<rect x="913.07" y="592.04" width="4.30" height="4.30" fill="#808080"/>
<rect x="917.32" y="592.04" width="4.30" height="4.30" fill="#848484"/>
<rect x="925.83" y="592.04" width="4.30" height="4.30" fill="#949494"/>
<rect x="934.33" y="592.04" width="4.30" height="4.30" fill="#888888"/>
<rect x="938.59" y="592.04" width="8.56" height="4.30" fill="#8c8c8c"/>
<rect x="947.09" y="592.04" width="4.30" height="4.30" fill="#949494"/>
<rect x="955.60" y="592.04" width="3.45" height="4.30" fill="#8c8c8c"/>
<rect x="815.25" y="596.29" width="4.30" height="4.30" fill="#989898"/>
<rect x="823.76" y="596.29" width="4.30" height="4.30" fill="#888888"/>
<rect x="832.26" y="596.29" width="4.30" height="4.30" fill="#949494"/>
<rect x="840.77" y="596.29" width="4.30" height="4.30" fill="#848484"/>
<rect x="845.02" y="596.29" width="8.56" height="4.30" fill="#888888"/>
<rect x="853.53" y="596.29" width="4.30" height="4.30" fill="#8c8c8c"/>
<rect x="857.78" y="596.29" width="4.30" height="4.30" fill="#808080"/>
<rect x="862.03" y="596.29" width="4.30" height="4.30" fill="#848484"/>
<rect x="866.29" y="596.29" width="4.30" height="4.30" fill="#787878"/>
<rect x="870.54" y="596.29" width="8.56" height="4.30" fill="#848484"/>
<rect x="879.05" y="596.29" width="4.30" height="4.30" fill="#808080"/>
<rect x="887.55" y="596.29" width="4.30" height="4.30" fill="#808080"/>
<rect x="891.80" y="596.29" width="12.81" height="4.30" fill="#8c8c8c"/>
<rect x="904.56" y="596.29" width="8.56" height="4.30" fill="#888888"/>
<rect x="913.07" y="596.29" width="4.30" height="4.30" fill="#808080"/>
<rect x="917.32" y="596.29" width="4.30" height="4.30" fill="#989898"/>
<rect x="921.57" y="596.29" width="4.30" height="4.30" fill="#949494"/>
<rect x="930.08" y="596.29" width="4.30" height="4.30" fill="#8c8c8c"/>
<rect x="934.33" y="596.29" width="4.30" height="4.30" fill="#848484"/>
<rect x="938.59" y="596.29" width="4.30" height="4.30" fill="#8c8c8c"/>
<rect x="947.09" y="596.29" width="8.56" height="4.30" fill="#949494"/>
<rect x="815.25" y="600.55" width="4.30" height="4.30" fill="#949494"/>
<rect x="823.76" y="600.55" width="4.30" height="4.30" fill="#949494"/>
<rect x="836.52" y="600.55" width="4.30" height="4.30" fill="#989898"/>
<rect x="840.77" y="600.55" width="4.30" height="4.30" fill="#949494"/>
<rect x="845.02" y="600.55" width="4.30" height="4.30" fill="#888888"/>
<rect x="849.28" y="600.55" width="8.56" height="4.30" fill="#8c8c8c"/>
<rect x="857.78" y="600.55" width="4.30" height="4.30" fill="#949494"/>
<rect x="862.03" y="600.55" width="4.30" height="4.30" fill="#888888"/>
<rect x="866.29" y="600.55" width="4.30" height="4.30" fill="#7c7c7c"/>
<rect x="870.54" y="600.55" width="4.30" height="4.30" fill="#888888"/>
<rect x="874.79" y="600.55" width="12.81" height="4.30" fill="#848484"/>
<rect x="887.55" y="600.55" width="4.30" height="4.30" fill="#888888"/>
<rect x="891.80" y="600.55" width="4.30" height="4.30" fill="#949494"/>
<rect x="896.06" y="600.55" width="4.30" height="4.30" fill="#888888"/>
<rect x="900.31" y="600.55" width="4.30" height="4.30" fill="#949494"/>
<rect x="908.82" y="600.55" width="4.30" height="4.30" fill="#8c8c8c"/>
<rect x="917.32" y="600.55" width="4.30" height="4.30" fill="#9c9c9c"/>
<rect x="938.59" y="600.55" width="12.81" height="4.30" fill="#8c8c8c"/>
<rect x="951.34" y="600.55" width="4.30" height="4.30" fill="#989898"/>
<rect x="955.60" y="600.55" width="3.45" height="4.30" fill="#949494"/>
<rect x="811.00" y="604.80" width="4.30" height="4.30" fill="#989898"/>
<rect x="815.25" y="604.80" width="8.56" height="4.30" fill="#9c9c9c"/>
<rect x="823.76" y="604.80" width="8.56" height="4.30" fill="#8c8c8c"/>
<rect x="832.26" y="604.80" width="4.30" height="4.30" fill="#949494"/>
<rect x="836.52" y="604.80" width="4.30" height="4.30" fill="#9c9c9c"/>
<rect x="840.77" y="604.80" width="8.56" height="4.30" fill="#8c8c8c"/>
<rect x="857.78" y="604.80" width="4.30" height="4.30" fill="#949494"/>
<rect x="862.03" y="604.80" width="8.56" height="4.30" fill="#888888"/>
<rect x="870.54" y="604.80" width="8.56" height="4.30" fill="#8c8c8c"/>
<rect x="879.05" y="604.80" width="4.30" height="4.30" fill="#808080"/>
<rect x="883.30" y="604.80" width="4.30" height="4.30" fill="#888888"/>
<rect x="891.80" y="604.80" width="4.30" height="4.30" fill="#848484"/>
<rect x="896.06" y="604.80" width="4.30" height="4.30" fill="#888888"/>
<rect x="904.56" y="604.80" width="4.30" height="4.30" fill="#949494"/>
<rect x="908.82" y="604.80" width="4.30" height="4.30" fill="#8c8c8c"/>
<rect x="917.32" y="604.80" width="4.30" height="4.30" fill="#989898"/>
<rect x="925.83" y="604.80" width="8.56" height="4.30" fill="#989898"/>
<rect x="947.09" y="604.80" width="4.30" height="4.30" fill="#949494"/>
<rect x="951.34" y="604.80" width="4.30" height="4.30" fill="#a0a0a0"/>
<rect x="955.60" y="604.80" width="3.45" height="4.30" fill="#989898"/>
<rect x="811.00" y="609.05" width="4.30" height="4.30" fill="#989898"/>
<rect x="819.51" y="609.05" width="4.30" height="4.30" fill="#8c8c8c"/>
<rect x="823.76" y="609.05" width="4.30" height="4.30" fill="#949494"/>
<rect x="828.01" y="609.05" width="4.30" height="4.30" fill="#9c9c9c"/>
<rect x="832.26" y="609.05" width="4.30" height="4.30" fill="#8c8c8c"/>
<rect x="836.52" y="609.05" width="4.30" height="4.30" fill="#848484"/>
<rect x="840.77" y="609.05" width="4.30" height="4.30" fill="#888888"/>
<rect x="853.53" y="609.05" width="4.30" height="4.30" fill="#8c8c8c"/>
<rect x="857.78" y="609.05" width="4.30" height="4.30" fill="#888888"/>
<rect x="862.03" y="609.05" width="4.30" height="4.30" fill="#8c8c8c"/>
<rect x="870.54" y="609.05" width="4.30" height="4.30" fill="#8c8c8c"/>
<rect x="879.05" y="609.05" width="4.30" height="4.30" fill="#8c8c8c"/>
<rect x="891.80" y="609.05" width="8.56" height="4.30" fill="#888888"/>
<rect x="900.31" y="609.05" width="4.30" height="4.30" fill="#848484"/>
<rect x="904.56" y="609.05" width="12.81" height="4.30" fill="#8c8c8c"/>
<rect x="921.57" y="609.05" width="4.30" height="4.30" fill="#8c8c8c"/>
<rect x="925.83" y="609.05" width="4.30" height="4.30" fill="#949494"/>
<rect x="930.08" y="609.05" width="8.56" height="4.30" fill="#888888"/>
<rect x="938.59" y="609.05" width="4.30" height="4.30" fill="#8c8c8c"/>
<rect x="942.84" y="609.05" width="8.56" height="4.30" fill="#949494"/>
<rect x="951.34" y="609.05" width="4.30" height="4.30" fill="#989898"/>
<rect x="955.60" y="609.05" width="3.45" height="4.30" fill="#9c9c9c"/>
<rect x="815.25" y="613.30" width="4.30" height="4.30" fill="#8c8c8c"/>
<rect x="819.51" y="613.30" width="4.30" height="4.30" fill="#808080"/>
<rect x="823.76" y="613.30" width="4.30" height="4.30" fill="#949494"/>
<rect x="828.01" y="613.30" width="4.30" height="4.30" fill="#989898"/>
<rect x="836.52" y="613.30" width="4.30" height="4.30" fill="#848484"/>
<rect x="840.77" y="613.30" width="4.30" height="4.30" fill="#949494"/>
<rect x="845.02" y="613.30" width="4.30" height="4.30" fill="#8c8c8c"/>
<rect x="853.53" y="613.30" width="4.30" height="4.30" fill="#8c8c8c"/>
<rect x="857.78" y="613.30" width="4.30" height="4.30" fill="#949494"/>
<rect x="866.29" y="613.30" width="4.30" height="4.30" fill="#949494"/>
<rect x="874.79" y="613.30" width="4.30" height="4.30" fill="#949494"/>
<rect x="879.05" y="613.30" width="4.30" height="4.30" fill="#8c8c8c"/>
<rect x="883.30" y="613.30" width="4.30" height="4.30" fill="#949494"/>
<rect x="896.06" y="613.30" width="8.56" height="4.30" fill="#848484"/>
<rect x="904.56" y="613.30" width="4.30" height="4.30" fill="#949494"/>
<rect x="908.82" y="613.30" width="4.30" height="4.30" fill="#848484"/>
<rect x="913.07" y="613.30" width="8.56" height="4.30" fill="#888888"/>
<rect x="921.57" y="613.30" width="4.30" height="4.30" fill="#808080"/>
<rect x="925.83" y="613.30" width="8.56" height="4.30" fill="#8c8c8c"/>
<rect x="938.59" y="613.30" width="4.30" height="4.30" fill="#949494"/>
<rect x="942.84" y="613.30" width="4.30" height="4.30" fill="#8c8c8c"/>
<rect x="947.09" y="613.30" width="4.30" height="4.30" fill="#949494"/>
<rect x="951.34" y="613.30" width="7.71" height="4.30" fill="#a0a0a0"/>
<rect x="815.25" y="617.56" width="4.30" height="4.30" fill="#808080"/>
<rect x="819.51" y="617.56" width="4.30" height="4.30" fill="#8c8c8c"/>
<rect x="823.76" y="617.56" width="8.56" height="4.30" fill="#9c9c9c"/>
<rect x="832.26" y="617.56" width="8.56" height="4.30" fill="#8c8c8c"/>
<rect x="840.77" y="617.56" width="4.30" height="4.30" fill="#949494"/>
<rect x="845.02" y="617.56" width="4.30" height="4.30" fill="#888888"/>
<rect x="853.53" y="617.56" width="8.56" height="4.30" fill="#8c8c8c"/>
<rect x="862.03" y="617.56" width="8.56" height="4.30" fill="#949494"/>
<rect x="870.54" y="617.56" width="4.30" height="4.30" fill="#888888"/>
<rect x="874.79" y="617.56" width="8.56" height="4.30" fill="#949494"/>
<rect x="883.30" y="617.56" width="4.30" height="4.30" fill="#8c8c8c"/>
<rect x="887.55" y="617.56" width="4.30" height="4.30" fill="#888888"/>
<rect x="896.06" y="617.56" width="4.30" height="4.30" fill="#888888"/>
<rect x="900.31" y="617.56" width="4.30" height="4.30" fill="#848484"/>
<rect x="904.56" y="617.56" width="4.30" height="4.30" fill="#888888"/>
<rect x="908.82" y="617.56" width="4.30" height="4.30" fill="#7c7c7c"/>
<rect x="913.07" y="617.56" width="4.30" height="4.30" fill="#949494"/>
<rect x="917.32" y="617.56" width="12.81" height="4.30" fill="#8c8c8c"/>
<rect x="934.33" y="617.56" width="4.30" height="4.30" fill="#888888"/>
<rect x="942.84" y="617.56" width="4.30" height="4.30" fill="#989898"/>
<rect x="947.09" y="617.56" width="4.30" height="4.30" fill="#949494"/>
<rect x="951.34" y="617.56" width="7.71" height="4.30" fill="#989898"/>
<rect x="811.00" y="621.81" width="4.30" height="4.30" fill="#848484"/>
<rect x="819.51" y="621.81" width="4.30" height="4.30" fill="#8c8c8c"/>
<rect x="823.76" y="621.81" width="4.30" height="4.30" fill="#989898"/>
<rect x="828.01" y="621.81" width="4.30" height="4.30" fill="#848484"/>
<rect x="832.26" y="621.81" width="4.30" height="4.30" fill="#8c8c8c"/>
<rect x="836.52" y="621.81" width="8.56" height="4.30" fill="#949494"/>
<rect x="845.02" y="621.81" width="4.30" height="4.30" fill="#8c8c8c"/>
<rect x="849.28" y="621.81" width="4.30" height="4.30" fill="#949494"/>
<rect x="853.53" y="621.81" width="4.30" height="4.30" fill="#888888"/>
<rect x="857.78" y="621.81" width="4.30" height="4.30" fill="#848484"/>
<rect x="862.03" y="621.81" width="4.30" height="4.30" fill="#949494"/>
<rect x="866.29" y="621.81" width="4.30" height="4.30" fill="#8c8c8c"/>
<rect x="879.05" y="621.81" width="4.30" height="4.30" fill="#8c8c8c"/>
<rect x="883.30" y="621.81" width="8.56" height="4.30" fill="#949494"/>
<rect x="891.80" y="621.81" width="4.30" height="4.30" fill="#9c9c9c"/>
<rect x="896.06" y="621.81" width="8.56" height="4.30" fill="#8c8c8c"/>
<rect x="904.56" y="621.81" width="4.30" height="4.30" fill="#949494"/>
<rect x="913.07" y="621.81" width="4.30" height="4.30" fill="#949494"/>
<rect x="917.32" y="621.81" width="4.30" height="4.30" fill="#8c8c8c"/>
<rect x="925.83" y="621.81" width="4.30" height="4.30" fill="#989898"/>
<rect x="930.08" y="621.81" width="4.30" height="4.30" fill="#888888"/>
<rect x="934.33" y="621.81" width="4.30" height="4.30" fill="#848484"/>
<rect x="938.59" y="621.81" width="4.30" height="4.30" fill="#8c8c8c"/>
<rect x="942.84" y="621.81" width="4.30" height="4.30" fill="#848484"/>
<rect x="947.09" y="621.81" width="4.30" height="4.30" fill="#787878"/>
<rect x="951.34" y="621.81" width="4.30" height="4.30" fill="#848484"/>
<rect x="955.60" y="621.81" width="3.45" height="4.30" fill="#8c8c8c"/>
<rect x="811.00" y="626.06" width="4.30" height="4.30" fill="#8c8c8c"/>
<rect x="819.51" y="626.06" width="4.30" height="4.30" fill="#888888"/>
<rect x="823.76" y="626.06" width="4.30" height="4.30" fill="#989898"/>
<rect x="828.01" y="626.06" width="8.56" height="4.30" fill="#888888"/>
<rect x="836.52" y="626.06" width="4.30" height="4.30" fill="#8c8c8c"/>
<rect x="840.77" y="626.06" width="4.30" height="4.30" fill="#a0a0a0"/>
<rect x="849.28" y="626.06" width="4.30" height="4.30" fill="#888888"/>
<rect x="853.53" y="626.06" width="4.30" height="4.30" fill="#808080"/>
<rect x="857.78" y="626.06" width="4.30" height="4.30" fill="#8c8c8c"/>
<rect x="862.03" y="626.06" width="4.30" height="4.30" fill="#949494"/>
<rect x="870.54" y="626.06" width="4.30" height="4.30" fill="#888888"/>
<rect x="874.79" y="626.06" width="4.30" height="4.30" fill="#848484"/>
<rect x="879.05" y="626.06" width="4.30" height="4.30" fill="#8c8c8c"/>
<rect x="883.30" y="626.06" width="4.30" height="4.30" fill="#848484"/>
<rect x="891.80" y="626.06" width="4.30" height="4.30" fill="#989898"/>
<rect x="896.06" y="626.06" width="4.30" height="4.30" fill="#8c8c8c"/>
<rect x="900.31" y="626.06" width="4.30" height="4.30" fill="#949494"/>
<rect x="904.56" y="626.06" width="4.30" height="4.30" fill="#a4a4a4"/>
<rect x="913.07" y="626.06" width="4.30" height="4.30" fill="#949494"/>
<rect x="921.57" y="626.06" width="4.30" height="4.30" fill="#989898"/>
<rect x="925.83" y="626.06" width="4.30" height="4.30" fill="#949494"/>
<rect x="934.33" y="626.06" width="4.30" height="4.30" fill="#848484"/>
<rect x="938.59" y="626.06" width="4.30" height="4.30" fill="#808080"/>
<rect x="942.84" y="626.06" width="4.30" height="4.30" fill="#848484"/>
<rect x="947.09" y="626.06" width="4.30" height="4.30" fill="#7c7c7c"/>
<rect x="951.34" y="626.06" width="4.30" height="4.30" fill="#888888"/>
<rect x="955.60" y="626.06" width="3.45" height="4.30" fill="#848484"/>
<rect x="811.00" y="630.32" width="4.30" height="4.30" fill="#949494"/>
<rect x="815.25" y="630.32" width="4.30" height="4.30" fill="#8c8c8c"/>
<rect x="819.51" y="630.32" width="4.30" height="4.30" fill="#888888"/>
<rect x="823.76" y="630.32" width="4.30" height="4.30" fill="#8c8c8c"/>
<rect x="832.26" y="630.32" width="8.56" height="4.30" fill="#989898"/>
<rect x="840.77" y="630.32" width="4.30" height="4.30" fill="#9c9c9c"/>
<rect x="845.02" y="630.32" width="4.30" height="4.30" fill="#989898"/>
<rect x="849.28" y="630.32" width="4.30" height="4.30" fill="#8c8c8c"/>
<rect x="853.53" y="630.32" width="4.30" height="4.30" fill="#888888"/>
<rect x="862.03" y="630.32" width="4.30" height="4.30" fill="#989898"/>
<rect x="866.29" y="630.32" width="4.30" height="4.30" fill="#8c8c8c"/>
<rect x="870.54" y="630.32" width="8.56" height="4.30" fill="#949494"/>
<rect x="879.05" y="630.32" width="4.30" height="4.30" fill="#8c8c8c"/>
<rect x="883.30" y="630.32" width="4.30" height="4.30" fill="#949494"/>
<rect x="887.55" y="630.32" width="8.56" height="4.30" fill="#9c9c9c"/>
<rect x="896.06" y="630.32" width="4.30" height="4.30" fill="#989898"/>
<rect x="900.31" y="630.32" width="12.81" height="4.30" fill="#949494"/>
<rect x="913.07" y="630.32" width="4.30" height="4.30" fill="#989898"/>
<rect x="917.32" y="630.32" width="4.30" height="4.30" fill="#949494"/>
<rect x="921.57" y="630.32" width="4.30" height="4.30" fill="#8c8c8c"/>
<rect x="925.83" y="630.32" width="12.81" height="4.30" fill="#888888"/>
<rect x="938.59" y="630.32" width="4.30" height="4.30" fill="#989898"/>
<rect x="942.84" y="630.32" width="4.30" height="4.30" fill="#888888"/>
<rect x="947.09" y="630.32" width="4.30" height="4.30" fill="#808080"/>
<rect x="955.60" y="630.32" width="3.45" height="4.30" fill="#848484"/>
<rect x="811.00" y="634.57" width="4.30" height="4.30" fill="#8c8c8c"/>
<rect x="815.25" y="634.57" width="4.30" height="4.30" fill="#888888"/>
<rect x="819.51" y="634.57" width="4.30" height="4.30" fill="#808080"/>
<rect x="823.76" y="634.57" width="4.30" height="4.30" fill="#8c8c8c"/>
<rect x="828.01" y="634.57" width="4.30" height="4.30" fill="#a0a0a0"/>
<rect x="832.26" y="634.57" width="4.30" height="4.30" fill="#949494"/>
<rect x="836.52" y="634.57" width="4.30" height="4.30" fill="#8c8c8c"/>
<rect x="845.02" y="634.57" width="4.30" height="4.30" fill="#8c8c8c"/>
<rect x="849.28" y="634.57" width="4.30" height="4.30" fill="#888888"/>
<rect x="853.53" y="634.57" width="8.56" height="4.30" fill="#8c8c8c"/>
<rect x="862.03" y="634.57" width="4.30" height="4.30" fill="#888888"/>
<rect x="870.54" y="634.57" width="4.30" height="4.30" fill="#9c9c9c"/>
<rect x="874.79" y="634.57" width="8.56" height="4.30" fill="#949494"/>
<rect x="883.30" y="634.57" width="4.30" height="4.30" fill="#9c9c9c"/>
<rect x="887.55" y="634.57" width="8.56" height="4.30" fill="#989898"/>
<rect x="896.06" y="634.57" width="4.30" height="4.30" fill="#888888"/>
<rect x="900.31" y="634.57" width="8.56" height="4.30" fill="#8c8c8c"/>
<rect x="908.82" y="634.57" width="4.30" height="4.30" fill="#949494"/>
<rect x="913.07" y="634.57" width="4.30" height="4.30" fill="#888888"/>
<rect x="917.32" y="634.57" width="4.30" height="4.30" fill="#8c8c8c"/>
<rect x="925.83" y="634.57" width="4.30" height="4.30" fill="#848484"/>
<rect x="930.08" y="634.57" width="4.30" height="4.30" fill="#8c8c8c"/>
<rect x="934.33" y="634.57" width="8.56" height="4.30" fill="#989898"/>
<rect x="942.84" y="634.57" width="4.30" height="4.30" fill="#888888"/>
<rect x="951.34" y="634.57" width="4.30" height="4.30" fill="#8c8c8c"/>
<rect x="955.60" y="634.57" width="3.45" height="4.30" fill="#848484"/>
<rect x="815.25" y="638.82" width="4.30" height="4.30" fill="#888888"/>
<rect x="819.51" y="638.82" width="4.30" height="4.30" fill="#8c8c8c"/>
<rect x="823.76" y="638.82" width="8.56" height="4.30" fill="#949494"/>
<rect x="832.26" y="638.82" width="4.30" height="4.30" fill="#848484"/>
<rect x="836.52" y="638.82" width="4.30" height="4.30" fill="#888888"/>
<rect x="840.77" y="638.82" width="4.30" height="4.30" fill="#8c8c8c"/>
<rect x="845.02" y="638.82" width="4.30" height="4.30" fill="#808080"/>
<rect x="849.28" y="638.82" width="4.30" height="4.30" fill="#8c8c8c"/>
<rect x="853.53" y="638.82" width="8.56" height="4.30" fill="#848484"/>
<rect x="862.03" y="638.82" width="4.30" height="4.30" fill="#888888"/>
<rect x="866.29" y="638.82" width="8.56" height="4.30" fill="#989898"/>
<rect x="874.79" y="638.82" width="4.30" height="4.30" fill="#8c8c8c"/>
<rect x="879.05" y="638.82" width="8.56" height="4.30" fill="#888888"/>
<rect x="887.55" y="638.82" width="8.56" height="4.30" fill="#848484"/>
<rect x="896.06" y="638.82" width="4.30" height="4.30" fill="#888888"/>
<rect x="900.31" y="638.82" width="4.30" height="4.30" fill="#808080"/>
<rect x="904.56" y="638.82" width="4.30" height="4.30" fill="#888888"/>
<rect x="908.82" y="638.82" width="4.30" height="4.30" fill="#949494"/>
<rect x="913.07" y="638.82" width="4.30" height="4.30" fill="#888888"/>
<rect x="925.83" y="638.82" width="4.30" height="4.30" fill="#848484"/>
<rect x="938.59" y="638.82" width="4.30" height="4.30" fill="#949494"/>
<rect x="942.84" y="638.82" width="4.30" height="4.30" fill="#8c8c8c"/>
<rect x="947.09" y="638.82" width="4.30" height="4.30" fill="#848484"/>
<rect x="955.60" y="638.82" width="3.45" height="4.30" fill="#949494"/>
<rect x="811.00" y="643.07" width="4.30" height="4.30" fill="#848484"/>
<rect x="815.25" y="643.07" width="4.30" height="4.30" fill="#888888"/>
<rect x="823.76" y="643.07" width="4.30" height="4.30" fill="#949494"/>
<rect x="828.01" y="643.07" width="4.30" height="4.30" fill="#888888"/>
<rect x="832.26" y="643.07" width="4.30" height="4.30" fill="#848484"/>
<rect x="836.52" y="643.07" width="4.30" height="4.30" fill="#9c9c9c"/>
<rect x="840.77" y="643.07" width="8.56" height="4.30" fill="#8c8c8c"/>
<rect x="853.53" y="643.07" width="4.30" height="4.30" fill="#888888"/>
<rect x="857.78" y="643.07" width="4.30" height="4.30" fill="#949494"/>
<rect x="862.03" y="643.07" width="4.30" height="4.30" fill="#888888"/>
<rect x="866.29" y="643.07" width="8.56" height="4.30" fill="#949494"/>
<rect x="879.05" y="643.07" width="4.30" height="4.30" fill="#949494"/>
<rect x="887.55" y="643.07" width="4.30" height="4.30" fill="#989898"/>
<rect x="891.80" y="643.07" width="4.30" height="4.30" fill="#949494"/>
<rect x="900.31" y="643.07" width="4.30" height="4.30" fill="#888888"/>
<rect x="913.07" y="643.07" width="4.30" height="4.30" fill="#8c8c8c"/>
<rect x="921.57" y="643.07" width="4.30" height="4.30" fill="#989898"/>
<rect x="925.83" y="643.07" width="8.56" height="4.30" fill="#888888"/>
<rect x="934.33" y="643.07" width="4.30" height="4.30" fill="#989898"/>
<rect x="938.59" y="643.07" width="4.30" height="4.30" fill="#949494"/>
<rect x="947.09" y="643.07" width="4.30" height="4.30" fill="#8c8c8c"/>
<rect x="951.34" y="643.07" width="4.30" height="4.30" fill="#949494"/>
<rect x="811.00" y="647.33" width="4.30" height="4.30" fill="#848484"/>
<rect x="815.25" y="647.33" width="8.56" height="4.30" fill="#8c8c8c"/>
<rect x="828.01" y="647.33" width="4.30" height="4.30" fill="#8c8c8c"/>
<rect x="832.26" y="647.33" width="4.30" height="4.30" fill="#989898"/>
<rect x="845.02" y="647.33" width="4.30" height="4.30" fill="#949494"/>
<rect x="849.28" y="647.33" width="4.30" height="4.30" fill="#8c8c8c"/>
<rect x="857.78" y="647.33" width="4.30" height="4.30" fill="#949494"/>
<rect x="862.03" y="647.33" width="4.30" height="4.30" fill="#888888"/>
<rect x="866.29" y="647.33" width="8.56" height="4.30" fill="#989898"/>
<rect x="874.79" y="647.33" width="4.30" height="4.30" fill="#9c9c9c"/>
<rect x="879.05" y="647.33" width="4.30" height="4.30" fill="#989898"/>
<rect x="883.30" y="647.33" width="8.56" height="4.30" fill="#949494"/>
<rect x="891.80" y="647.33" width="4.30" height="4.30" fill="#989898"/>
<rect x="896.06" y="647.33" width="4.30" height="4.30" fill="#949494"/>
<rect x="904.56" y="647.33" width="8.56" height="4.30" fill="#888888"/>
<rect x="917.32" y="647.33" width="4.30" height="4.30" fill="#8c8c8c"/>
<rect x="921.57" y="647.33" width="4.30" height="4.30" fill="#949494"/>
<rect x="925.83" y="647.33" width="4.30" height="4.30" fill="#8c8c8c"/>
<rect x="938.59" y="647.33" width="4.30" height="4.30" fill="#8c8c8c"/>
<rect x="942.84" y="647.33" width="4.30" height="4.30" fill="#9c9c9c"/>
<rect x="951.34" y="647.33" width="4.30" height="4.30" fill="#8c8c8c"/>
<rect x="955.60" y="647.33" width="3.45" height="4.30" fill="#888888"/>
<rect x="811.00" y="651.58" width="4.30" height="4.30" fill="#848484"/>
<rect x="819.51" y="651.58" width="4.30" height="4.30" fill="#949494"/>
<rect x="823.76" y="651.58" width="4.30" height="4.30" fill="#8c8c8c"/>
<rect x="828.01" y="651.58" width="8.56" height="4.30" fill="#888888"/>
<rect x="836.52" y="651.58" width="4.30" height="4.30" fill="#8c8c8c"/>
<rect x="840.77" y="651.58" width="4.30" height="4.30" fill="#949494"/>
<rect x="845.02" y="651.58" width="4.30" height="4.30" fill="#888888"/>
<rect x="853.53" y="651.58" width="4.30" height="4.30" fill="#989898"/>
<rect x="866.29" y="651.58" width="4.30" height="4.30" fill="#888888"/>
<rect x="870.54" y="651.58" width="4.30" height="4.30" fill="#989898"/>
<rect x="874.79" y="651.58" width="4.30" height="4.30" fill="#949494"/>
<rect x="879.05" y="651.58" width="12.81" height="4.30" fill="#8c8c8c"/>
<rect x="891.80" y="651.58" width="4.30" height="4.30" fill="#949494"/>
<rect x="900.31" y="651.58" width="4.30" height="4.30" fill="#8c8c8c"/>
<rect x="908.82" y="651.58" width="4.30" height="4.30" fill="#8c8c8c"/>
<rect x="913.07" y="651.58" width="4.30" height="4.30" fill="#989898"/>
<rect x="917.32" y="651.58" width="4.30" height="4.30" fill="#8c8c8c"/>
<rect x="921.57" y="651.58" width="8.56" height="4.30" fill="#9c9c9c"/>
<rect x="930.08" y="651.58" width="8.56" height="4.30" fill="#8c8c8c"/>
<rect x="938.59" y="651.58" width="8.56" height="4.30" fill="#9c9c9c"/>
<rect x="947.09" y="651.58" width="4.30" height="4.30" fill="#888888"/>
<rect x="951.34" y="651.58" width="4.30" height="4.30" fill="#8c8c8c"/>
<rect x="955.60" y="651.58" width="3.45" height="4.30" fill="#848484"/>
<rect x="811.00" y="655.83" width="4.30" height="4.30" fill="#8c8c8c"/>
<rect x="815.25" y="655.83" width="4.30" height="4.30" fill="#989898"/>
<rect x="828.01" y="655.83" width="4.30" height="4.30" fill="#949494"/>
<rect x="836.52" y="655.83" width="4.30" height="4.30" fill="#808080"/>
<rect x="840.77" y="655.83" width="4.30" height="4.30" fill="#848484"/>
<rect x="845.02" y="655.83" width="4.30" height="4.30" fill="#8c8c8c"/>
<rect x="849.28" y="655.83" width="4.30" height="4.30" fill="#989898"/>
<rect x="857.78" y="655.83" width="4.30" height="4.30" fill="#888888"/>
<rect x="862.03" y="655.83" width="4.30" height="4.30" fill="#848484"/>
<rect x="866.29" y="655.83" width="4.30" height="4.30" fill="#8c8c8c"/>
<rect x="870.54" y="655.83" width="4.30" height="4.30" fill="#989898"/>
<rect x="874.79" y="655.83" width="4.30" height="4.30" fill="#848484"/>
<rect x="879.05" y="655.83" width="4.30" height="4.30" fill="#949494"/>
<rect x="887.55" y="655.83" width="4.30" height="4.30" fill="#888888"/>
<rect x="891.80" y="655.83" width="12.81" height="4.30" fill="#949494"/>
<rect x="904.56" y="655.83" width="4.30" height="4.30" fill="#888888"/>
<rect x="908.82" y="655.83" width="4.30" height="4.30" fill="#949494"/>
<rect x="913.07" y="655.83" width="4.30" height="4.30" fill="#989898"/>
<rect x="917.32" y="655.83" width="4.30" height="4.30" fill="#8c8c8c"/>
<rect x="921.57" y="655.83" width="8.56" height="4.30" fill="#9c9c9c"/>
<rect x="930.08" y="655.83" width="4.30" height="4.30" fill="#848484"/>
<rect x="934.33" y="655.83" width="4.30" height="4.30" fill="#8c8c8c"/>
<rect x="938.59" y="655.83" width="4.30" height="4.30" fill="#949494"/>
<rect x="942.84" y="655.83" width="4.30" height="4.30" fill="#8c8c8c"/>
<rect x="947.09" y="655.83" width="4.30" height="4.30" fill="#949494"/>
<rect x="951.34" y="655.83" width="4.30" height="4.30" fill="#989898"/>
<rect x="955.60" y="655.83" width="3.45" height="4.30" fill="#8c8c8c"/>
<rect x="811.00" y="660.09" width="4.30" height="4.30" fill="#888888"/>
<rect x="819.51" y="660.09" width="4.30" height="4.30" fill="#8c8c8c"/>
<rect x="823.76" y="660.09" width="4.30" height="4.30" fill="#989898"/>
<rect x="828.01" y="660.09" width="4.30" height="4.30" fill="#a0a0a0"/>
<rect x="832.26" y="660.09" width="4.30" height="4.30" fill="#888888"/>
<rect x="836.52" y="660.09" width="4.30" height="4.30" fill="#8c8c8c"/>
<rect x="853.53" y="660.09" width="4.30" height="4.30" fill="#8c8c8c"/>
<rect x="857.78" y="660.09" width="8.56" height="4.30" fill="#949494"/>
<rect x="866.29" y="660.09" width="4.30" height="4.30" fill="#9c9c9c"/>
<rect x="870.54" y="660.09" width="8.56" height="4.30" fill="#8c8c8c"/>
<rect x="879.05" y="660.09" width="8.56" height="4.30" fill="#949494"/>
<rect x="887.55" y="660.09" width="4.30" height="4.30" fill="#8c8c8c"/>
<rect x="891.80" y="660.09" width="4.30" height="4.30" fill="#949494"/>
<rect x="913.07" y="660.09" width="4.30" height="4.30" fill="#8c8c8c"/>
<rect x="917.32" y="660.09" width="4.30" height="4.30" fill="#888888"/>
<rect x="921.57" y="660.09" width="4.30" height="4.30" fill="#949494"/>
<rect x="925.83" y="660.09" width="4.30" height="4.30" fill="#989898"/>
<rect x="930.08" y="660.09" width="8.56" height="4.30" fill="#848484"/>
<rect x="938.59" y="660.09" width="4.30" height="4.30" fill="#8c8c8c"/>
<rect x="947.09" y="660.09" width="4.30" height="4.30" fill="#8c8c8c"/>
<rect x="951.34" y="660.09" width="4.30" height="4.30" fill="#949494"/>
<rect x="811.00" y="664.34" width="4.30" height="4.30" fill="#888888"/>
<rect x="819.51" y="664.34" width="4.30" height="4.30" fill="#8c8c8c"/>
<rect x="823.76" y="664.34" width="4.30" height="4.30" fill="#949494"/>
<rect x="832.26" y="664.34" width="8.56" height="4.30" fill="#949494"/>
<rect x="845.02" y="664.34" width="4.30" height="4.30" fill="#949494"/>
<rect x="849.28" y="664.34" width="8.56" height="4.30" fill="#989898"/>
<rect x="857.78" y="664.34" width="4.30" height="4.30" fill="#949494"/>
<rect x="866.29" y="664.34" width="8.56" height="4.30" fill="#8c8c8c"/>
<rect x="883.30" y="664.34" width="4.30" height="4.30" fill="#989898"/>
<rect x="887.55" y="664.34" width="4.30" height="4.30" fill="#8c8c8c"/>
<rect x="896.06" y="664.34" width="4.30" height="4.30" fill="#949494"/>
<rect x="904.56" y="664.34" width="4.30" height="4.30" fill="#949494"/>
<rect x="908.82" y="664.34" width="4.30" height="4.30" fill="#989898"/>
<rect x="917.32" y="664.34" width="4.30" height="4.30" fill="#888888"/>
<rect x="921.57" y="664.34" width="4.30" height="4.30" fill="#989898"/>
<rect x="925.83" y="664.34" width="4.30" height="4.30" fill="#9c9c9c"/>
<rect x="938.59" y="664.34" width="4.30" height="4.30" fill="#8c8c8c"/>
<rect x="942.84" y="664.34" width="8.56" height="4.30" fill="#848484"/>
<rect x="951.34" y="664.34" width="4.30" height="4.30" fill="#8c8c8c"/>
<rect x="955.60" y="664.34" width="3.45" height="4.30" fill="#888888"/>
<rect x="811.00" y="668.59" width="4.30" height="4.30" fill="#8c8c8c"/>
<rect x="815.25" y="668.59" width="4.30" height="4.30" fill="#989898"/>
<rect x="819.51" y="668.59" width="8.56" height="4.30" fill="#949494"/>
<rect x="832.26" y="668.59" width="8.56" height="4.30" fill="#949494"/>
<rect x="840.77" y="668.59" width="4.30" height="4.30" fill="#8c8c8c"/>
<rect x="845.02" y="668.59" width="4.30" height="4.30" fill="#888888"/>
<rect x="849.28" y="668.59" width="4.30" height="4.30" fill="#989898"/>
<rect x="853.53" y="668.59" width="4.30" height="4.30" fill="#8c8c8c"/>
<rect x="857.78" y="668.59" width="4.30" height="4.30" fill="#888888"/>
<rect x="862.03" y="668.59" width="4.30" height="4.30" fill="#949494"/>
<rect x="870.54" y="668.59" width="4.30" height="4.30" fill="#8c8c8c"/>
<rect x="883.30" y="668.59" width="4.30" height="4.30" fill="#888888"/>
<rect x="887.55" y="668.59" width="4.30" height="4.30" fill="#848484"/>
<rect x="891.80" y="668.59" width="4.30" height="4.30" fill="#8c8c8c"/>
<rect x="896.06" y="668.59" width="4.30" height="4.30" fill="#888888"/>
<rect x="904.56" y="668.59" width="8.56" height="4.30" fill="#989898"/>
<rect x="913.07" y="668.59" width="4.30" height="4.30" fill="#8c8c8c"/>
<rect x="917.32" y="668.59" width="4.30" height="4.30" fill="#888888"/>
<rect x="921.57" y="668.59" width="4.30" height="4.30" fill="#949494"/>
<rect x="925.83" y="668.59" width="4.30" height="4.30" fill="#989898"/>
<rect x="938.59" y="668.59" width="4.30" height="4.30" fill="#888888"/>
<rect x="942.84" y="668.59" width="4.30" height="4.30" fill="#8c8c8c"/>
<rect x="947.09" y="668.59" width="4.30" height="4.30" fill="#848484"/>
<rect x="951.34" y="668.59" width="7.71" height="4.30" fill="#8c8c8c"/>
<rect x="811.00" y="672.84" width="4.30" height="4.30" fill="#8c8c8c"/>
<rect x="815.25" y="672.84" width="4.30" height="4.30" fill="#888888"/>
<rect x="823.76" y="672.84" width="8.56" height="4.30" fill="#888888"/>
<rect x="832.26" y="672.84" width="4.30" height="4.30" fill="#989898"/>
<rect x="836.52" y="672.84" width="4.30" height="4.30" fill="#949494"/>
<rect x="840.77" y="672.84" width="4.30" height="4.30" fill="#888888"/>
<rect x="845.02" y="672.84" width="4.30" height="4.30" fill="#8c8c8c"/>
<rect x="849.28" y="672.84" width="12.81" height="4.30" fill="#989898"/>
<rect x="862.03" y="672.84" width="4.30" height="4.30" fill="#949494"/>
<rect x="866.29" y="672.84" width="4.30" height="4.30" fill="#8c8c8c"/>
<rect x="870.54" y="672.84" width="4.30" height="4.30" fill="#949494"/>
<rect x="879.05" y="672.84" width="4.30" height="4.30" fill="#848484"/>
<rect x="883.30" y="672.84" width="4.30" height="4.30" fill="#888888"/>
<rect x="887.55" y="672.84" width="8.56" height="4.30" fill="#8c8c8c"/>
<rect x="896.06" y="672.84" width="4.30" height="4.30" fill="#888888"/>
<rect x="900.31" y="672.84" width="4.30" height="4.30" fill="#949494"/>
<rect x="913.07" y="672.84" width="4.30" height="4.30" fill="#8c8c8c"/>
<rect x="917.32" y="672.84" width="4.30" height="4.30" fill="#949494"/>
<rect x="921.57" y="672.84" width="4.30" height="4.30" fill="#8c8c8c"/>
<rect x="930.08" y="672.84" width="4.30" height="4.30" fill="#949494"/>
<rect x="942.84" y="672.84" width="4.30" height="4.30" fill="#8c8c8c"/>
<rect x="947.09" y="672.84" width="4.30" height="4.30" fill="#808080"/>
<rect x="951.34" y="672.84" width="4.30" height="4.30" fill="#848484"/>
<rect x="955.60" y="672.84" width="3.45" height="4.30" fill="#8c8c8c"/>
<rect x="811.00" y="677.10" width="4.30" height="3.25" fill="#848484"/>
<rect x="815.25" y="677.10" width="4.30" height="3.25" fill="#8c8c8c"/>
<rect x="819.51" y="677.10" width="4.30" height="3.25" fill="#848484"/>
<rect x="823.76" y="677.10" width="4.30" height="3.25" fill="#787878"/>
<rect x="828.01" y="677.10" width="4.30" height="3.25" fill="#8c8c8c"/>
<rect x="832.26" y="677.10" width="4.30" height="3.25" fill="#949494"/>
<rect x="840.77" y="677.10" width="4.30" height="3.25" fill="#848484"/>
<rect x="849.28" y="677.10" width="8.56" height="3.25" fill="#989898"/>
<rect x="857.78" y="677.10" width="8.56" height="3.25" fill="#848484"/>
<rect x="870.54" y="677.10" width="4.30" height="3.25" fill="#949494"/>
<rect x="874.79" y="677.10" width="4.30" height="3.25" fill="#888888"/>
<rect x="879.05" y="677.10" width="4.30" height="3.25" fill="#848484"/>
<rect x="887.55" y="677.10" width="4.30" height="3.25" fill="#989898"/>
<rect x="891.80" y="677.10" width="4.30" height="3.25" fill="#888888"/>
<rect x="896.06" y="677.10" width="4.30" height="3.25" fill="#8c8c8c"/>
<rect x="904.56" y="677.10" width="4.30" height="3.25" fill="#8c8c8c"/>
<rect x="908.82" y="677.10" width="4.30" height="3.25" fill="#848484"/>
<rect x="921.57" y="677.10" width="4.30" height="3.25" fill="#8c8c8c"/>
<rect x="925.83" y="677.10" width="8.56" height="3.25" fill="#989898"/>
<rect x="934.33" y="677.10" width="4.30" height="3.25" fill="#949494"/>
<rect x="938.59" y="677.10" width="8.56" height="3.25" fill="#8c8c8c"/>
<rect x="947.09" y="677.10" width="4.30" height="3.25" fill="#808080"/>
<rect x="951.34" y="677.10" width="4.30" height="3.25" fill="#8c8c8c"/>
<rect x="955.60" y="677.10" width="3.45" height="3.25" fill="#949494"/>
</g>
<g clip-path="url(#pc4)"><ellipse cx="882.1" cy="555.3" rx="46.2" ry="41.5" fill="none" stroke="#ffd700" stroke-width="1.2"/></g>
<rect x="836.40" y="557.80" width="97.2" height="97.2" fill="none" stroke="#ff0000" stroke-width="1.3"/>
<path d="M848.20 606.4H877.40M892.60 606.4H921.80M885.00 569.60V598.80M885.00 614.00V643.20" stroke="#ff0000" stroke-width="1.3" fill="none"/>
<text x="885.00" y="546.90" class="s" font-size="10.2" text-anchor="middle" fill="#ff0000">N</text>
<text x="821.40" y="610.30" class="s" font-size="10.2" text-anchor="middle" fill="#ff0000">E</text>
<rect x="811.0" y="532.5" width="148.0" height="147.80" fill="none" stroke="#222" stroke-width="1"/>
<line x1="820.20" y1="680.3" x2="820.20" y2="684.00" stroke="#222" stroke-width="0.9"/>
<text x="820.20" y="695.80" class="s" font-size="10.5" text-anchor="middle" fill="#111">−4</text>
<line x1="807.30" y1="671.20" x2="811.0" y2="671.20" stroke="#222" stroke-width="0.9"/>
<text x="803.60" y="675.00" class="s" font-size="10.5" text-anchor="end" fill="#111">−4</text>
<line x1="852.60" y1="680.3" x2="852.60" y2="684.00" stroke="#222" stroke-width="0.9"/>
<text x="852.60" y="695.80" class="s" font-size="10.5" text-anchor="middle" fill="#111">−2</text>
<line x1="807.30" y1="638.80" x2="811.0" y2="638.80" stroke="#222" stroke-width="0.9"/>
<text x="803.60" y="642.60" class="s" font-size="10.5" text-anchor="end" fill="#111">−2</text>
<line x1="885.00" y1="680.3" x2="885.00" y2="684.00" stroke="#222" stroke-width="0.9"/>
<text x="885.00" y="695.80" class="s" font-size="10.5" text-anchor="middle" fill="#111">0</text>
<line x1="807.30" y1="606.40" x2="811.0" y2="606.40" stroke="#222" stroke-width="0.9"/>
<text x="803.60" y="610.20" class="s" font-size="10.5" text-anchor="end" fill="#111">0</text>
<line x1="917.40" y1="680.3" x2="917.40" y2="684.00" stroke="#222" stroke-width="0.9"/>
<text x="917.40" y="695.80" class="s" font-size="10.5" text-anchor="middle" fill="#111">2</text>
<line x1="807.30" y1="574.00" x2="811.0" y2="574.00" stroke="#222" stroke-width="0.9"/>
<text x="803.60" y="577.80" class="s" font-size="10.5" text-anchor="end" fill="#111">2</text>
<line x1="949.80" y1="680.3" x2="949.80" y2="684.00" stroke="#222" stroke-width="0.9"/>
<text x="949.80" y="695.80" class="s" font-size="10.5" text-anchor="middle" fill="#111">4</text>
<line x1="807.30" y1="541.60" x2="811.0" y2="541.60" stroke="#222" stroke-width="0.9"/>
<text x="803.60" y="545.40" class="s" font-size="10.5" text-anchor="end" fill="#111">4</text>
<text x="885.00" y="706.30" class="s" font-size="10.7" text-anchor="middle" fill="#111">m:14.6  re:2.7"  s:3.1"</text>
</g>
<text x="553.60" y="499.00" class="s" font-size="12.9">0.001</text>
<text x="595.40" y="493.10" class="s" font-size="9.1">0.001</text>
<text x="595.40" y="502.10" class="s" font-size="9.1">0.001</text>
<text x="621.60" y="499.00" class="m" font-size="12.9"> (r)</text>
</svg>
</body></html>
